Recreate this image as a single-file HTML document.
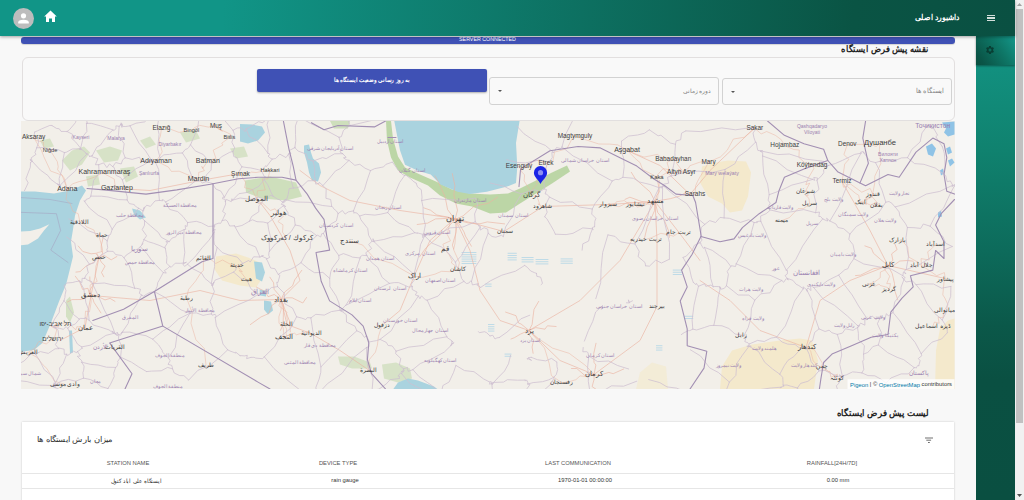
<!DOCTYPE html>
<html lang="fa">
<head>
<meta charset="utf-8">
<style>
*{box-sizing:border-box;margin:0;padding:0}
html,body{width:1024px;height:500px;overflow:hidden}
body{background:#f8f8f8;font-family:"Liberation Sans",sans-serif;position:relative;color:#333}
.abs{position:absolute}
#header{left:0;top:0;width:1015px;height:36px;background:linear-gradient(95deg,#119587 0%,#119587 22%,#0a5444 84%,#0a5042 100%);box-shadow:0 1px 3px rgba(0,0,0,.35);z-index:5}
#avatar{left:13px;top:7.5px;width:21px;height:21px;border-radius:50%;background:#bdbdbd;overflow:hidden}
#home{left:44px;top:10px;width:13px;height:13px}
#htitle{right:55px;top:13px;color:#fff;font-size:7.6px;font-weight:bold;transform:scaleX(.948);transform-origin:100% 50%;direction:rtl;white-space:nowrap}
#burger{left:986.5px;top:15px;width:8.5px;height:6px}
#burger i{display:block;height:1.2px;background:#d3dfdb;margin-bottom:1.2px}
#sb{left:976px;top:36px;width:39px;height:464px;background:linear-gradient(180deg,#13928a 0px,#12907f 30px,#10826f 114px,#0d6b5b 214px,#0b5849 290px,#0a5042 344px,#0a4f41 464px)}
#sbtop{left:0;top:0;width:39px;height:29px;background:linear-gradient(235deg,#14978a 0%,#0e7767 40%,#0a5547 85%,#09503f 100%);box-shadow:0 1px 2px rgba(0,0,0,.4)}
#scroll{left:1015px;top:0;width:9px;height:500px;background:#f1f1f1}
#thumb{left:1px;top:9px;width:7px;height:414px;background:#c1c1c1}
#bar{left:21px;top:37px;width:933.5px;height:6.5px;background:#3f51b5;border-radius:3px;box-shadow:0 1px 1px rgba(0,0,0,.15);z-index:3}
#bartxt{left:0;top:-1px;width:933px;text-align:center;color:#fff;font-size:5.6px;line-height:6px;letter-spacing:0;transform:scaleX(.95)}
#maptitle{right:95px;top:43.5px;font-size:8.6px;transform:scaleX(.924);transform-origin:100% 50%;font-weight:bold;color:#222;direction:rtl;white-space:nowrap}
#form{left:21.5px;top:56.5px;width:933px;height:64.5px;border:1px solid #e2dfdf;border-radius:6px;background:#f9f9f9}
#btn{left:257px;top:69px;width:230px;height:23px;background:#3f51b5;border-radius:2px;box-shadow:0 1px 2px rgba(0,0,0,.3);color:#fff;font-size:5.6px;font-weight:bold;text-align:center;line-height:23px;direction:rtl}
#btn span{display:inline-block;transform:scaleX(.935)}
.sel{height:27.5px;border:1px solid #d2d2d2;border-radius:3px;background:#f9f9f9}
.sel span{position:absolute;right:7px;top:9.5px;font-size:5.6px;transform-origin:100% 50%;color:#808080;direction:rtl;white-space:nowrap}
.sel b{position:absolute;left:8px;top:12px;width:0;height:0;border-left:2.5px solid transparent;border-right:2.5px solid transparent;border-top:2.5px solid #555}
#map{left:21px;top:120.5px;width:933.5px;height:268px;overflow:hidden;background:#f2efe9}
#listtitle{right:94.5px;top:408px;font-size:8.6px;transform:scaleX(.952);transform-origin:100% 50%;font-weight:bold;color:#222;direction:rtl;white-space:nowrap}
#card{left:22px;top:421.5px;width:932px;height:100px;background:#fff;box-shadow:0 0 2px rgba(0,0,0,.2)}
#ctitle{left:14.5px;top:13.5px;font-size:8px;transform:scaleX(1.053);transform-origin:0 50%;color:#333;direction:rtl;white-space:nowrap}
.th,.td{position:absolute;font-size:5.8px;color:#555;white-space:nowrap;transform:translateX(-50%)}
.td{color:#333}
.hl{position:absolute;left:0;width:932px;height:1px;background:#e6e6e6}
</style>
</head>
<body>
<div id="header" class="abs">
  <div id="avatar" class="abs">
    <svg width="21" height="21" viewBox="0 0 21 21"><circle cx="10.5" cy="7.8" r="2.6" fill="#fff"/><path d="M5.2 14.6 Q5.2 11.8 10.5 11.8 Q15.8 11.8 15.8 14.6 L15.8 15.6 L5.2 15.6 Z" fill="#fff"/></svg>
  </div>
  <svg id="home" class="abs" viewBox="0 0 13 13"><path d="M6.5 0.5 L12.8 6.5 L11 6.5 L11 12 L8 12 L8 8.5 L5 8.5 L5 12 L2 12 L2 6.5 L0.2 6.5 Z" fill="#fff"/></svg>
  <div id="htitle" class="abs">داشبورد اصلی</div>
  <div id="burger" class="abs"><i></i><i></i><i></i></div>
</div>

<div id="sb" class="abs">
  <div id="sbtop" class="abs">
    <svg class="abs" style="left:9px;top:9px" width="10" height="10" viewBox="0 0 24 24"><path fill="#083e33" d="M19.14 12.94c.04-.3.06-.61.06-.94 0-.32-.02-.64-.07-.94l2.03-1.58a.49.49 0 0 0 .12-.61l-1.92-3.32a.488.488 0 0 0-.59-.22l-2.39.96c-.5-.38-1.03-.7-1.62-.94l-.36-2.54a.484.484 0 0 0-.48-.41h-3.84c-.24 0-.43.17-.47.41l-.36 2.54c-.59.24-1.13.57-1.62.94l-2.39-.96c-.22-.08-.47 0-.59.22L2.74 8.87c-.12.21-.08.47.12.61l2.03 1.58c-.05.3-.09.63-.09.94s.02.64.07.94l-2.03 1.58a.49.49 0 0 0-.12.61l1.92 3.32c.12.22.37.29.59.22l2.39-.96c.5.38 1.03.7 1.62.94l.36 2.54c.05.24.24.41.48.41h3.84c.24 0 .44-.17.47-.41l.36-2.54c.59-.24 1.13-.56 1.62-.94l2.39.96c.22.08.47 0 .59-.22l1.92-3.32c.12-.22.07-.47-.12-.61l-2.01-1.58zM12 15.6c-1.98 0-3.6-1.62-3.6-3.6s1.62-3.6 3.6-3.6 3.6 1.62 3.6 3.6-1.62 3.6-3.6 3.6z"/></svg>
  </div>
</div>

<div id="scroll" class="abs">
  <svg class="abs" style="left:2px;top:3px" width="5" height="3"><path d="M0 3 L2.5 0 L5 3Z" fill="#a3a3a3"/></svg>
  <div id="thumb" class="abs"></div>
  <svg class="abs" style="left:2px;top:494px" width="5" height="3"><path d="M0 0 L2.5 3 L5 0Z" fill="#505050"/></svg>
</div>

<div id="bar" class="abs"><div id="bartxt" class="abs">SERVER CONNECTED</div></div>
<div id="maptitle" class="abs">نقشه پیش فرض ایستگاه</div>

<div id="form" class="abs"></div>
<div id="btn" class="abs"><span>به روز رسانی وضعیت ایستگاه ها</span></div>
<div class="sel abs" style="left:488.8px;top:77px;width:230.5px"><span>دوره زمانی</span><b></b></div>
<div class="sel abs" style="left:722px;top:77.5px;width:230px"><span style="font-size:6.6px;top:8.8px;transform:scaleX(.93)">ایستگاه ها</span><b></b></div>

<div id="map" class="abs">
<svg width="934" height="268" viewBox="0 0 934 268" style="position:absolute;left:0;top:0" font-family="Liberation Sans, sans-serif">
<rect width="934" height="268" fill="#f2efe9"/>
<polygon points="195.0,135.5 215.0,132.5 227.0,136.5 239.0,141.5 241.0,157.5 235.0,166.5 219.0,164.5 201.0,159.5 193.0,147.5" fill="#f4e9cc" />
<polygon points="681.0,45.5 695.0,41.5 707.0,39.5 725.0,40.5 730.0,51.5 727.0,75.5 721.0,89.5 709.0,91.5 701.0,82.5 687.0,75.5 679.0,61.5" fill="#f4e9cc" />
<polygon points="699.0,268.0 701.0,245.5 711.0,229.5 731.0,223.5 759.0,219.5 779.0,217.5 791.0,219.5 797.0,239.5 793.0,268.0" fill="#f4e9cc" />
<polygon points="914.0,268.0 915.0,229.5 919.0,207.5 927.0,199.5 933.5,197.5 933.5,268.0" fill="#f4e9cc" />
<polygon points="615.0,268.0 619.0,251.5 631.0,241.5 645.0,245.5 647.0,268.0" fill="#f4e9cc" opacity="0.6"/>
<polygon points="365.0,0.0 366.0,19.5 370.0,36.5 377.0,49.5 389.0,56.5 407.0,64.5 419.0,74.5 435.0,82.5 451.0,85.5 469.0,92.5 485.0,91.5 499.0,82.5 515.0,72.5 531.0,62.5 549.0,50.5 546.0,44.5 531.0,51.5 515.0,59.5 499.0,67.5 487.0,72.5 469.0,73.5 449.0,72.5 431.0,68.5 415.0,60.5 399.0,53.5 384.0,46.5 377.0,35.5 372.0,17.5 370.0,0.0" fill="#b6d39e" opacity="0.9"/>
<polygon points="41.0,39.5 51.0,29.5 63.0,25.5 69.0,31.5 61.0,43.5 49.0,49.5" fill="#b6d39e" opacity="0.45"/>
<polygon points="75.0,29.5 89.0,25.5 101.0,29.5 97.0,39.5 83.0,41.5" fill="#b6d39e" opacity="0.45"/>
<polygon points="99.0,47.5 113.0,45.5 117.0,55.5 105.0,61.5" fill="#b6d39e" opacity="0.45"/>
<polygon points="65.0,55.5 77.0,53.5 79.0,63.5 67.0,65.5" fill="#b6d39e" opacity="0.45"/>
<polygon points="19.0,19.5 29.0,17.5 33.0,25.5 23.0,27.5" fill="#b6d39e" opacity="0.45"/>
<polygon points="119.0,19.5 129.0,15.5 135.0,23.5 125.0,27.5" fill="#b6d39e" opacity="0.45"/>
<polygon points="159.0,11.5 175.0,9.5 179.0,17.5 165.0,21.5" fill="#b6d39e" opacity="0.45"/>
<polygon points="209.0,27.5 223.0,25.5 227.0,35.5 215.0,37.5" fill="#b6d39e" opacity="0.45"/>
<polygon points="224.0,59.5 249.0,55.5 275.0,61.5 281.0,75.5 265.0,79.5 241.0,77.5 225.0,71.5" fill="#b6d39e" opacity="0.6"/>
<polygon points="317.0,235.5 333.0,235.5 349.0,241.5 351.0,247.5 331.0,247.5 319.0,243.5" fill="#b6d39e" opacity="0.45"/>
<polygon points="361.0,243.5 375.0,241.5 389.0,247.5 391.0,257.5 377.0,261.5 363.0,257.5" fill="#b6d39e" opacity="0.45"/>
<polygon points="45.0,179.5 49.0,175.5 53.0,191.5 49.0,201.5 45.0,195.5" fill="#b6d39e" opacity="0.5"/>
<polygon points="309.0,0.0 329.0,0.0 327.0,7.5 313.0,7.5" fill="#b6d39e" opacity="0.6"/>
<polygon points="-2.0,70.5 14.0,70.5 33.0,72.5 49.0,69.5 61.0,64.5 65.0,69.5 59.0,79.5 54.0,94.5 52.0,108.5 50.0,120.5 52.0,135.5 49.4,146.3 45.2,163.1 38.2,179.9 29.8,202.3 21.4,221.9 13.0,228.9 -2.0,230.9" fill="#aad3df" />
<polygon points="-2.0,110.5 9.0,110.0 19.0,107.5 28.4,103.3 23.0,109.5 17.0,117.5 7.0,123.5 -2.0,124.5" fill="#f2efe9" />
<polyline points="-1.0,91.3 35.4,92.7 39.6,109.5 29.8,129.1 47.0,141.5" fill="none" stroke="#a28fb3" stroke-width="0.8" stroke-linejoin="round" stroke-linecap="round" opacity="0.5"/>
<polyline points="-1.0,76.5 29.0,78.5 51.0,82.5" fill="none" stroke="#a28fb3" stroke-width="0.8" stroke-linejoin="round" stroke-linecap="round" opacity="0.45"/>
<polygon points="373.0,-1.5 375.6,12.1 379.0,29.2 384.0,43.8 397.5,49.9 409.7,53.5 419.5,63.4 436.6,70.7 448.8,73.1 465.8,70.7 485.3,65.8 495.0,62.1 496.3,46.3 495.0,21.9 498.8,-1.5" fill="#aad3df" />
<polygon points="219.0,3.1 231.0,3.5 241.0,5.5 244.0,11.5 237.0,19.5 227.0,22.5 219.0,20.5" fill="#aad3df" />
<polygon points="283.0,24.5 288.0,23.5 290.0,31.5 292.0,37.5 298.0,42.5 300.0,51.5 297.0,60.5 291.0,59.5 288.0,51.5 286.0,41.5 283.0,31.5" fill="#aad3df" />
<polygon points="921.0,1.5 933.5,0.5 933.5,13.5 927.0,15.5 923.0,11.5 925.0,7.5" fill="#8fc3e6" />
<polygon points="905.0,25.5 911.0,22.5 915.0,27.5 912.0,35.5 907.0,33.5" fill="#8fc3e6" />
<polygon points="925.0,27.5 929.0,25.5 931.0,31.5 927.0,33.5" fill="#8fc3e6" />
<polygon points="927.0,39.5 931.0,37.5 933.5,41.5 929.0,45.5" fill="#8fc3e6" />
<polygon points="917.0,91.5 920.0,89.5 921.0,95.5 917.0,96.5" fill="#8fc3e6" />
<polygon points="919.0,49.5 922.0,47.5 923.0,52.5 920.0,54.5" fill="#8fc3e6" />
<polygon points="372.0,268.5 377.0,261.5 387.0,257.5 397.0,259.5 405.0,262.5 413.0,265.5 417.0,268.5" fill="#aad3df" />
<polygon points="233.0,140.5 241.0,141.5 244.0,151.5 241.0,160.5 235.0,157.5" fill="#aad3df" />
<polygon points="243.0,179.5 250.0,180.5 252.0,189.5 247.0,193.5 243.0,188.5" fill="#aad3df" />
<polygon points="238.6,168.5 245.0,169.5 245.0,175.5 239.0,174.5" fill="#aad3df" />
<polygon points="111.0,87.5 119.0,89.5 125.0,96.5 119.0,98.5 113.0,93.5" fill="#aad3df" />
<polygon points="48.0,209.5 51.0,209.5 52.0,231.5 49.0,232.5" fill="#aad3df" />
<polyline points="487.0,132.3 495.4,132.3" fill="none" stroke="#a9d2e6" stroke-width="0.7" stroke-linejoin="round" stroke-linecap="round" />
<polyline points="487.0,134.5 495.4,134.5" fill="none" stroke="#a9d2e6" stroke-width="0.7" stroke-linejoin="round" stroke-linecap="round" />
<polyline points="487.0,136.7 495.4,136.7" fill="none" stroke="#a9d2e6" stroke-width="0.7" stroke-linejoin="round" stroke-linecap="round" />
<polyline points="487.0,138.9 495.4,138.9" fill="none" stroke="#a9d2e6" stroke-width="0.7" stroke-linejoin="round" stroke-linecap="round" />
<polyline points="501.0,136.5 512.2,136.5" fill="none" stroke="#a9d2e6" stroke-width="0.7" stroke-linejoin="round" stroke-linecap="round" />
<polyline points="501.0,138.7 512.2,138.7" fill="none" stroke="#a9d2e6" stroke-width="0.7" stroke-linejoin="round" stroke-linecap="round" />
<polyline points="501.0,140.9 512.2,140.9" fill="none" stroke="#a9d2e6" stroke-width="0.7" stroke-linejoin="round" stroke-linecap="round" />
<polyline points="540.0,137.9 551.4,137.9" fill="none" stroke="#a9d2e6" stroke-width="0.7" stroke-linejoin="round" stroke-linecap="round" />
<polyline points="540.0,140.1 551.4,140.1" fill="none" stroke="#a9d2e6" stroke-width="0.7" stroke-linejoin="round" stroke-linecap="round" />
<polyline points="540.0,142.3 551.4,142.3" fill="none" stroke="#a9d2e6" stroke-width="0.7" stroke-linejoin="round" stroke-linecap="round" />
<polyline points="464.6,163.1 470.2,163.1" fill="none" stroke="#a9d2e6" stroke-width="0.7" stroke-linejoin="round" stroke-linecap="round" />
<polyline points="464.6,165.3 470.2,165.3" fill="none" stroke="#a9d2e6" stroke-width="0.7" stroke-linejoin="round" stroke-linecap="round" />
<polyline points="467.4,203.5 473.0,203.5" fill="none" stroke="#a9d2e6" stroke-width="0.7" stroke-linejoin="round" stroke-linecap="round" />
<polyline points="467.4,205.7 473.0,205.7" fill="none" stroke="#a9d2e6" stroke-width="0.7" stroke-linejoin="round" stroke-linecap="round" />
<polyline points="467.4,207.9 473.0,207.9" fill="none" stroke="#a9d2e6" stroke-width="0.7" stroke-linejoin="round" stroke-linecap="round" />
<polyline points="467.4,210.1 473.0,210.1" fill="none" stroke="#a9d2e6" stroke-width="0.7" stroke-linejoin="round" stroke-linecap="round" />
<polyline points="652.2,149.1 660.6,149.1" fill="none" stroke="#a9d2e6" stroke-width="0.7" stroke-linejoin="round" stroke-linecap="round" />
<polyline points="652.2,151.3 660.6,151.3" fill="none" stroke="#a9d2e6" stroke-width="0.7" stroke-linejoin="round" stroke-linecap="round" />
<polyline points="652.2,153.5 660.6,153.5" fill="none" stroke="#a9d2e6" stroke-width="0.7" stroke-linejoin="round" stroke-linecap="round" />
<polyline points="663.4,195.3 671.8,195.3" fill="none" stroke="#a9d2e6" stroke-width="0.7" stroke-linejoin="round" stroke-linecap="round" />
<polyline points="663.4,197.5 671.8,197.5" fill="none" stroke="#a9d2e6" stroke-width="0.7" stroke-linejoin="round" stroke-linecap="round" />
<polyline points="635.4,224.7 641.0,224.7" fill="none" stroke="#a9d2e6" stroke-width="0.7" stroke-linejoin="round" stroke-linecap="round" />
<polyline points="635.4,226.9 641.0,226.9" fill="none" stroke="#a9d2e6" stroke-width="0.7" stroke-linejoin="round" stroke-linecap="round" />
<polyline points="635.4,229.1 641.0,229.1" fill="none" stroke="#a9d2e6" stroke-width="0.7" stroke-linejoin="round" stroke-linecap="round" />
<polyline points="484.0,233.1 490.0,233.1" fill="none" stroke="#a9d2e6" stroke-width="0.7" stroke-linejoin="round" stroke-linecap="round" />
<polyline points="484.0,235.3 490.0,235.3" fill="none" stroke="#a9d2e6" stroke-width="0.7" stroke-linejoin="round" stroke-linecap="round" />
<polyline points="441.0,131.5 455.0,131.5" fill="none" stroke="#a9d2e6" stroke-width="0.7" stroke-linejoin="round" stroke-linecap="round" />
<polyline points="441.0,133.7 455.0,133.7" fill="none" stroke="#a9d2e6" stroke-width="0.7" stroke-linejoin="round" stroke-linecap="round" />
<polyline points="441.0,135.9 455.0,135.9" fill="none" stroke="#a9d2e6" stroke-width="0.7" stroke-linejoin="round" stroke-linecap="round" />
<polyline points="441.0,138.1 455.0,138.1" fill="none" stroke="#a9d2e6" stroke-width="0.7" stroke-linejoin="round" stroke-linecap="round" />
<polyline points="441.0,140.3 455.0,140.3" fill="none" stroke="#a9d2e6" stroke-width="0.7" stroke-linejoin="round" stroke-linecap="round" />
<polyline points="441.0,142.5 455.0,142.5" fill="none" stroke="#a9d2e6" stroke-width="0.7" stroke-linejoin="round" stroke-linecap="round" />
<polyline points="515.0,138.5 527.0,138.5" fill="none" stroke="#a9d2e6" stroke-width="0.7" stroke-linejoin="round" stroke-linecap="round" />
<polyline points="515.0,140.7 527.0,140.7" fill="none" stroke="#a9d2e6" stroke-width="0.7" stroke-linejoin="round" stroke-linecap="round" />
<polyline points="515.0,142.9 527.0,142.9" fill="none" stroke="#a9d2e6" stroke-width="0.7" stroke-linejoin="round" stroke-linecap="round" />
<polyline points="434.0,97.5 409.0,119.5 393.0,155.5 379.0,189.5 361.0,204.5" fill="none" stroke="#eab4a2" stroke-width="0.8" stroke-linejoin="round" stroke-linecap="round" opacity="0.8"/>
<polyline points="434.0,97.5 449.0,129.5 459.0,169.5 479.0,199.5 508.0,209.5 539.0,239.5 573.0,253.5" fill="none" stroke="#eab4a2" stroke-width="0.8" stroke-linejoin="round" stroke-linecap="round" opacity="0.8"/>
<polyline points="434.0,97.5 483.0,110.5 522.0,85.5 587.0,83.5 634.0,80.5 658.0,111.5 679.0,139.5" fill="none" stroke="#eab4a2" stroke-width="0.8" stroke-linejoin="round" stroke-linecap="round" opacity="0.8"/>
<polyline points="434.0,97.5 379.0,89.5 329.0,79.5 299.0,64.5 279.0,49.5" fill="none" stroke="#eab4a2" stroke-width="0.8" stroke-linejoin="round" stroke-linecap="round" opacity="0.8"/>
<polyline points="260.0,178.5 279.0,159.5 269.0,129.5 249.0,94.5 236.0,77.5" fill="none" stroke="#eab4a2" stroke-width="0.8" stroke-linejoin="round" stroke-linecap="round" opacity="0.8"/>
<polyline points="260.0,178.5 266.0,203.5 290.0,212.5 319.0,229.5 347.0,248.5" fill="none" stroke="#eab4a2" stroke-width="0.8" stroke-linejoin="round" stroke-linecap="round" opacity="0.8"/>
<polyline points="78.0,136.5 70.0,174.5 64.0,206.5 39.0,219.5" fill="none" stroke="#eab4a2" stroke-width="0.8" stroke-linejoin="round" stroke-linecap="round" opacity="0.8"/>
<polyline points="96.0,67.5 129.0,69.5 179.0,59.5 219.0,52.5" fill="none" stroke="#eab4a2" stroke-width="0.8" stroke-linejoin="round" stroke-linecap="round" opacity="0.8"/>
<polyline points="634.0,80.5 636.0,119.5 636.0,185.5 619.0,219.5 573.0,253.5" fill="none" stroke="#eab4a2" stroke-width="0.8" stroke-linejoin="round" stroke-linecap="round" opacity="0.8"/>
<polyline points="785.0,226.5 799.0,179.5 829.0,159.5 867.0,144.5 924.0,157.5" fill="none" stroke="#eab4a2" stroke-width="0.8" stroke-linejoin="round" stroke-linecap="round" opacity="0.8"/>
<polyline points="785.0,226.5 739.0,209.5 709.0,179.5 679.0,159.5" fill="none" stroke="#eab4a2" stroke-width="0.8" stroke-linejoin="round" stroke-linecap="round" opacity="0.8"/>
<polyline points="867.0,144.5 849.0,109.5 821.0,60.5" fill="none" stroke="#eab4a2" stroke-width="0.8" stroke-linejoin="round" stroke-linecap="round" opacity="0.8"/>
<polyline points="260.0,178.5 219.0,179.5 179.0,169.5 129.0,179.5 70.0,174.5" fill="none" stroke="#eab4a2" stroke-width="0.8" stroke-linejoin="round" stroke-linecap="round" opacity="0.8"/>
<polyline points="508.0,209.5 559.0,179.5 599.0,139.5 634.0,80.5" fill="none" stroke="#eab4a2" stroke-width="0.8" stroke-linejoin="round" stroke-linecap="round" opacity="0.8"/>
<polyline points="669.0,73.5 689.0,49.5 733.0,7.5" fill="none" stroke="#eab4a2" stroke-width="0.8" stroke-linejoin="round" stroke-linecap="round" opacity="0.8"/>
<polyline points="606.0,29.5 639.0,44.5 669.0,73.5" fill="none" stroke="#eab4a2" stroke-width="0.8" stroke-linejoin="round" stroke-linecap="round" opacity="0.8"/>
<polyline points="434.0,98.5 447.5,102.0 458.9,102.8 466.3,100.9 483.6,102.9" fill="none" stroke="#eab4a2" stroke-width="0.8" stroke-linejoin="round" stroke-linecap="round" opacity="0.8"/>
<polyline points="434.0,98.5 438.3,103.0 443.1,111.1 444.4,115.0 450.4,125.2" fill="none" stroke="#eab4a2" stroke-width="0.8" stroke-linejoin="round" stroke-linecap="round" opacity="0.8"/>
<polyline points="434.0,98.5 435.9,104.2 434.9,111.9 431.4,124.2 432.7,128.1" fill="none" stroke="#eab4a2" stroke-width="0.8" stroke-linejoin="round" stroke-linecap="round" opacity="0.8"/>
<polyline points="434.0,98.5 423.6,110.0 415.9,116.9 404.7,127.2 398.4,136.0" fill="none" stroke="#eab4a2" stroke-width="0.8" stroke-linejoin="round" stroke-linecap="round" opacity="0.8"/>
<polyline points="434.0,98.5 424.5,97.5 414.5,97.9 406.7,102.1 396.2,103.5" fill="none" stroke="#eab4a2" stroke-width="0.8" stroke-linejoin="round" stroke-linecap="round" opacity="0.8"/>
<polyline points="434.0,98.5 427.3,96.2 415.8,94.0 409.5,89.2 402.6,86.8" fill="none" stroke="#eab4a2" stroke-width="0.8" stroke-linejoin="round" stroke-linecap="round" opacity="0.8"/>
<polyline points="434.0,98.5 426.6,88.6 424.1,75.8 417.4,61.0 413.9,54.9" fill="none" stroke="#eab4a2" stroke-width="0.8" stroke-linejoin="round" stroke-linecap="round" opacity="0.8"/>
<polyline points="434.0,98.5 436.5,89.3 432.9,73.9 433.9,64.6 431.3,52.6" fill="none" stroke="#eab4a2" stroke-width="0.8" stroke-linejoin="round" stroke-linecap="round" opacity="0.8"/>
<polyline points="434.0,98.5 442.1,94.9 453.3,85.1 467.3,82.3 476.6,76.1" fill="none" stroke="#eab4a2" stroke-width="0.8" stroke-linejoin="round" stroke-linecap="round" opacity="0.8"/>
<polyline points="260.0,178.5 265.8,176.8 271.2,176.8 281.8,182.0 285.5,176.5" fill="none" stroke="#eab4a2" stroke-width="0.8" stroke-linejoin="round" stroke-linecap="round" opacity="0.8"/>
<polyline points="260.0,178.5 262.4,184.4 266.6,195.4 268.7,200.5 269.3,210.9" fill="none" stroke="#eab4a2" stroke-width="0.8" stroke-linejoin="round" stroke-linecap="round" opacity="0.8"/>
<polyline points="260.0,178.5 262.5,184.1 262.3,196.9 262.1,203.7 259.4,209.4" fill="none" stroke="#eab4a2" stroke-width="0.8" stroke-linejoin="round" stroke-linecap="round" opacity="0.8"/>
<polyline points="260.0,178.5 251.1,184.2 247.7,192.5 239.9,196.0 229.3,203.6" fill="none" stroke="#eab4a2" stroke-width="0.8" stroke-linejoin="round" stroke-linecap="round" opacity="0.8"/>
<polyline points="260.0,178.5 253.3,173.5 247.0,175.7 244.3,170.7 235.4,166.1" fill="none" stroke="#eab4a2" stroke-width="0.8" stroke-linejoin="round" stroke-linecap="round" opacity="0.8"/>
<polyline points="260.0,178.5 258.7,174.8 253.1,168.3 252.6,161.8 248.9,156.2" fill="none" stroke="#eab4a2" stroke-width="0.8" stroke-linejoin="round" stroke-linecap="round" opacity="0.8"/>
<polyline points="260.0,178.5 263.7,171.0 271.6,164.8 273.7,158.9 280.8,149.3" fill="none" stroke="#eab4a2" stroke-width="0.8" stroke-linejoin="round" stroke-linecap="round" opacity="0.8"/>
<polyline points="634.0,80.5 640.3,79.2 649.3,77.7 658.2,75.2 664.2,72.0" fill="none" stroke="#eab4a2" stroke-width="0.8" stroke-linejoin="round" stroke-linecap="round" opacity="0.8"/>
<polyline points="634.0,80.5 636.7,91.5 643.4,99.5 647.6,110.0 648.4,116.3" fill="none" stroke="#eab4a2" stroke-width="0.8" stroke-linejoin="round" stroke-linecap="round" opacity="0.8"/>
<polyline points="634.0,80.5 633.6,89.5 629.0,100.1 626.2,106.0 623.4,117.6" fill="none" stroke="#eab4a2" stroke-width="0.8" stroke-linejoin="round" stroke-linecap="round" opacity="0.8"/>
<polyline points="634.0,80.5 627.3,81.4 620.0,80.3 608.9,76.2 604.0,78.4" fill="none" stroke="#eab4a2" stroke-width="0.8" stroke-linejoin="round" stroke-linecap="round" opacity="0.8"/>
<polyline points="634.0,80.5 629.1,70.9 622.5,65.2 614.4,57.9 610.3,51.3" fill="none" stroke="#eab4a2" stroke-width="0.8" stroke-linejoin="round" stroke-linecap="round" opacity="0.8"/>
<polyline points="634.0,80.5 635.6,74.7 638.3,70.8 637.9,67.5 638.2,59.4" fill="none" stroke="#eab4a2" stroke-width="0.8" stroke-linejoin="round" stroke-linecap="round" opacity="0.8"/>
<polyline points="867.0,144.5 871.0,145.6 878.8,140.0 886.5,139.5 892.4,140.2" fill="none" stroke="#eab4a2" stroke-width="0.8" stroke-linejoin="round" stroke-linecap="round" opacity="0.8"/>
<polyline points="867.0,144.5 871.2,152.5 873.5,162.4 873.2,167.9 876.8,178.9" fill="none" stroke="#eab4a2" stroke-width="0.8" stroke-linejoin="round" stroke-linecap="round" opacity="0.8"/>
<polyline points="867.0,144.5 859.3,146.7 852.7,147.6 839.7,154.1 834.5,154.6" fill="none" stroke="#eab4a2" stroke-width="0.8" stroke-linejoin="round" stroke-linecap="round" opacity="0.8"/>
<polyline points="867.0,144.5 859.8,138.6 852.4,132.2 850.4,127.2 843.9,124.9" fill="none" stroke="#eab4a2" stroke-width="0.8" stroke-linejoin="round" stroke-linecap="round" opacity="0.8"/>
<polyline points="867.0,144.5 871.9,139.2 870.6,132.9 876.1,128.6 874.0,123.2" fill="none" stroke="#eab4a2" stroke-width="0.8" stroke-linejoin="round" stroke-linecap="round" opacity="0.8"/>
<polyline points="508.0,209.5 514.8,206.6 523.9,208.2 526.4,204.8 535.1,205.5" fill="none" stroke="#eab4a2" stroke-width="0.8" stroke-linejoin="round" stroke-linecap="round" opacity="0.8"/>
<polyline points="508.0,209.5 507.4,213.0 512.6,219.4 511.1,226.0 512.1,232.3" fill="none" stroke="#eab4a2" stroke-width="0.8" stroke-linejoin="round" stroke-linecap="round" opacity="0.8"/>
<polyline points="508.0,209.5 505.1,210.6 499.3,213.2 493.4,216.7 490.0,218.0" fill="none" stroke="#eab4a2" stroke-width="0.8" stroke-linejoin="round" stroke-linecap="round" opacity="0.8"/>
<polyline points="508.0,209.5 500.1,203.0 497.5,202.0 495.0,194.7 484.6,191.1" fill="none" stroke="#eab4a2" stroke-width="0.8" stroke-linejoin="round" stroke-linecap="round" opacity="0.8"/>
<polyline points="508.0,209.5 511.1,203.5 511.7,198.3 513.0,188.4 517.7,180.4" fill="none" stroke="#eab4a2" stroke-width="0.8" stroke-linejoin="round" stroke-linecap="round" opacity="0.8"/>
<polyline points="573.0,253.5 577.2,254.7 587.8,251.4 592.2,252.7 602.7,248.0" fill="none" stroke="#eab4a2" stroke-width="0.8" stroke-linejoin="round" stroke-linecap="round" opacity="0.8"/>
<polyline points="573.0,253.5 573.1,258.3 571.1,265.6 575.1,268.3 571.7,278.7" fill="none" stroke="#eab4a2" stroke-width="0.8" stroke-linejoin="round" stroke-linecap="round" opacity="0.8"/>
<polyline points="573.0,253.5 564.0,253.7 563.6,254.3 555.8,247.5 550.5,247.5" fill="none" stroke="#eab4a2" stroke-width="0.8" stroke-linejoin="round" stroke-linecap="round" opacity="0.8"/>
<polyline points="573.0,253.5 574.9,244.0 573.0,241.4 572.8,232.3 575.0,222.3" fill="none" stroke="#eab4a2" stroke-width="0.8" stroke-linejoin="round" stroke-linecap="round" opacity="0.8"/>
<polyline points="78.0,136.5 79.6,136.1 83.2,134.4 90.2,138.8 95.9,135.5" fill="none" stroke="#eab4a2" stroke-width="0.8" stroke-linejoin="round" stroke-linecap="round" opacity="0.8"/>
<polyline points="78.0,136.5 80.3,141.1 84.1,145.0 80.5,151.5 82.8,155.8" fill="none" stroke="#eab4a2" stroke-width="0.8" stroke-linejoin="round" stroke-linecap="round" opacity="0.8"/>
<polyline points="78.0,136.5 72.5,141.4 65.0,145.2 59.1,150.6 54.9,151.1" fill="none" stroke="#eab4a2" stroke-width="0.8" stroke-linejoin="round" stroke-linecap="round" opacity="0.8"/>
<polyline points="78.0,136.5 74.8,132.3 70.1,132.8 61.8,130.5 57.2,125.0" fill="none" stroke="#eab4a2" stroke-width="0.8" stroke-linejoin="round" stroke-linecap="round" opacity="0.8"/>
<polyline points="78.0,136.5 81.9,132.1 80.3,129.6 80.2,124.9 82.0,117.1" fill="none" stroke="#eab4a2" stroke-width="0.8" stroke-linejoin="round" stroke-linecap="round" opacity="0.8"/>
<polyline points="69.0,174.5 73.4,173.9 84.0,178.9 89.1,177.4 94.0,180.4" fill="none" stroke="#eab4a2" stroke-width="0.8" stroke-linejoin="round" stroke-linecap="round" opacity="0.8"/>
<polyline points="69.0,174.5 72.0,178.0 72.9,181.2 77.8,188.7 79.9,191.9" fill="none" stroke="#eab4a2" stroke-width="0.8" stroke-linejoin="round" stroke-linecap="round" opacity="0.8"/>
<polyline points="69.0,174.5 64.4,177.2 60.0,178.5 51.0,178.6 46.4,181.0" fill="none" stroke="#eab4a2" stroke-width="0.8" stroke-linejoin="round" stroke-linecap="round" opacity="0.8"/>
<polyline points="69.0,174.5 66.9,167.3 61.6,168.4 58.9,161.4 54.3,155.2" fill="none" stroke="#eab4a2" stroke-width="0.8" stroke-linejoin="round" stroke-linecap="round" opacity="0.8"/>
<polyline points="69.0,174.5 68.7,169.5 72.2,163.8 68.9,160.2 68.8,155.9" fill="none" stroke="#eab4a2" stroke-width="0.8" stroke-linejoin="round" stroke-linecap="round" opacity="0.8"/>
<polyline points="12.6,16.5 15.5,19.5 22.6,21.3 22.5,24.8 23.2,26.7 29.0,29.1" fill="none" stroke="#eab4a2" stroke-width="0.7" stroke-linejoin="round" stroke-linecap="round" opacity="0.7"/>
<polyline points="12.6,16.5 20.4,29.2 22.8,35.6 29.5,50.0 41.1,54.2 46.3,68.2" fill="none" stroke="#eab4a2" stroke-width="0.7" stroke-linejoin="round" stroke-linecap="round" opacity="0.7"/>
<polyline points="29.0,29.1 36.3,40.6 37.2,45.7 36.6,48.7 43.1,56.9 46.3,68.2" fill="none" stroke="#eab4a2" stroke-width="0.7" stroke-linejoin="round" stroke-linecap="round" opacity="0.7"/>
<polyline points="140.5,7.3 144.0,5.7 148.7,7.9 158.0,11.4 164.6,10.2 170.4,9.5" fill="none" stroke="#eab4a2" stroke-width="0.7" stroke-linejoin="round" stroke-linecap="round" opacity="0.7"/>
<polyline points="140.5,7.3 139.4,15.1 138.0,18.6 141.2,30.8 138.8,35.0 135.0,39.9" fill="none" stroke="#eab4a2" stroke-width="0.7" stroke-linejoin="round" stroke-linecap="round" opacity="0.7"/>
<polyline points="170.4,9.5 173.8,6.5 178.6,4.3 187.3,6.1 192.9,5.1 195.0,5.1" fill="none" stroke="#eab4a2" stroke-width="0.7" stroke-linejoin="round" stroke-linecap="round" opacity="0.7"/>
<polyline points="195.0,5.1 201.4,10.2 196.4,7.3 206.4,11.7 209.6,13.4 208.5,16.5" fill="none" stroke="#eab4a2" stroke-width="0.7" stroke-linejoin="round" stroke-linecap="round" opacity="0.7"/>
<polyline points="208.5,16.5 200.7,22.2 202.0,24.0 192.2,29.2 194.9,37.3 186.8,39.9" fill="none" stroke="#eab4a2" stroke-width="0.7" stroke-linejoin="round" stroke-linecap="round" opacity="0.7"/>
<polyline points="83.4,50.8 82.8,52.1 85.2,53.8 93.3,58.1 93.9,63.5 95.9,67.2" fill="none" stroke="#eab4a2" stroke-width="0.7" stroke-linejoin="round" stroke-linecap="round" opacity="0.7"/>
<polyline points="83.4,50.8 73.5,56.1 65.6,58.9 58.1,60.6 51.4,62.9 46.3,68.2" fill="none" stroke="#eab4a2" stroke-width="0.7" stroke-linejoin="round" stroke-linecap="round" opacity="0.7"/>
<polyline points="135.0,39.9 147.3,46.0 150.4,50.4 158.2,50.2 171.8,55.9 177.5,58.5" fill="none" stroke="#eab4a2" stroke-width="0.7" stroke-linejoin="round" stroke-linecap="round" opacity="0.7"/>
<polyline points="186.8,39.9 181.7,47.5 180.8,45.4 183.4,49.7 177.7,51.4 177.5,58.5" fill="none" stroke="#eab4a2" stroke-width="0.7" stroke-linejoin="round" stroke-linecap="round" opacity="0.7"/>
<polyline points="249.0,49.2 239.8,50.6 235.1,51.5 230.2,51.1 229.0,52.1 219.4,53.0" fill="none" stroke="#eab4a2" stroke-width="0.7" stroke-linejoin="round" stroke-linecap="round" opacity="0.7"/>
<polyline points="249.0,49.2 246.9,57.9 241.1,58.0 244.3,69.0 236.4,69.8 235.7,78.0" fill="none" stroke="#eab4a2" stroke-width="0.7" stroke-linejoin="round" stroke-linecap="round" opacity="0.7"/>
<polyline points="219.4,53.0 224.6,61.5 223.5,66.6 232.2,68.8 231.8,69.8 235.7,78.0" fill="none" stroke="#eab4a2" stroke-width="0.7" stroke-linejoin="round" stroke-linecap="round" opacity="0.7"/>
<polyline points="46.3,68.2 45.1,78.4 49.2,82.9 51.9,90.4 57.2,92.7 58.9,100.9" fill="none" stroke="#eab4a2" stroke-width="0.7" stroke-linejoin="round" stroke-linecap="round" opacity="0.7"/>
<polyline points="235.7,78.0 237.5,82.7 241.0,81.6 249.3,89.5 254.1,87.8 257.5,92.5" fill="none" stroke="#eab4a2" stroke-width="0.7" stroke-linejoin="round" stroke-linecap="round" opacity="0.7"/>
<polyline points="257.5,92.5 262.5,95.1 256.9,100.5 262.0,103.8 261.5,111.2 265.7,117.2" fill="none" stroke="#eab4a2" stroke-width="0.7" stroke-linejoin="round" stroke-linecap="round" opacity="0.7"/>
<polyline points="328.0,119.9 341.7,124.0 353.1,137.2 371.2,142.4 382.0,148.9 393.6,155.3" fill="none" stroke="#eab4a2" stroke-width="0.7" stroke-linejoin="round" stroke-linecap="round" opacity="0.7"/>
<polyline points="434.4,98.2 429.3,100.5 426.2,113.4 429.5,119.8 421.9,123.2 423.5,128.1" fill="none" stroke="#eab4a2" stroke-width="0.7" stroke-linejoin="round" stroke-linecap="round" opacity="0.7"/>
<polyline points="434.4,98.2 434.8,110.1 434.0,122.3 432.6,128.7 438.4,141.6 437.0,148.5" fill="none" stroke="#eab4a2" stroke-width="0.7" stroke-linejoin="round" stroke-linecap="round" opacity="0.7"/>
<polyline points="423.5,128.1 428.1,133.8 431.2,139.6 430.4,141.8 437.5,147.4 437.0,148.5" fill="none" stroke="#eab4a2" stroke-width="0.7" stroke-linejoin="round" stroke-linecap="round" opacity="0.7"/>
<polyline points="393.6,155.3 401.6,156.3 413.9,153.2 420.6,150.3 429.0,150.7 437.0,148.5" fill="none" stroke="#eab4a2" stroke-width="0.7" stroke-linejoin="round" stroke-linecap="round" opacity="0.7"/>
<polyline points="260.0,178.7 257.8,184.7 266.2,191.5 265.2,192.5 266.4,198.9 265.7,203.2" fill="none" stroke="#eab4a2" stroke-width="0.7" stroke-linejoin="round" stroke-linecap="round" opacity="0.7"/>
<polyline points="260.0,178.7 260.1,188.9 257.9,195.7 258.0,202.1 262.2,206.6 263.0,216.3" fill="none" stroke="#eab4a2" stroke-width="0.7" stroke-linejoin="round" stroke-linecap="round" opacity="0.7"/>
<polyline points="69.7,174.4 70.2,180.9 68.5,190.8 64.5,190.1 63.8,201.9 64.3,207.0" fill="none" stroke="#eab4a2" stroke-width="0.7" stroke-linejoin="round" stroke-linecap="round" opacity="0.7"/>
<polyline points="69.7,174.4 69.0,164.1 76.2,160.4 74.2,154.7 74.9,145.2 77.9,136.3" fill="none" stroke="#eab4a2" stroke-width="0.7" stroke-linejoin="round" stroke-linecap="round" opacity="0.7"/>
<polyline points="64.3,207.0 55.9,205.7 54.8,208.8 49.4,203.8 41.0,202.5 34.4,203.2" fill="none" stroke="#eab4a2" stroke-width="0.7" stroke-linejoin="round" stroke-linecap="round" opacity="0.7"/>
<polyline points="77.9,136.3 75.5,131.9 81.7,130.4 81.2,126.8 78.3,116.2 80.6,114.5" fill="none" stroke="#eab4a2" stroke-width="0.7" stroke-linejoin="round" stroke-linecap="round" opacity="0.7"/>
<polyline points="58.9,100.9 62.8,101.8 65.3,105.7 72.9,109.0 74.8,114.5 80.6,114.5" fill="none" stroke="#eab4a2" stroke-width="0.7" stroke-linejoin="round" stroke-linecap="round" opacity="0.7"/>
<polyline points="34.4,203.2 37.7,205.8 29.9,205.3 35.8,208.4 33.9,215.5 31.7,217.9" fill="none" stroke="#eab4a2" stroke-width="0.7" stroke-linejoin="round" stroke-linecap="round" opacity="0.7"/>
<polyline points="31.7,217.9 25.2,223.0 18.0,220.4 16.5,222.3 14.6,226.7 7.0,231.5" fill="none" stroke="#eab4a2" stroke-width="0.7" stroke-linejoin="round" stroke-linecap="round" opacity="0.7"/>
<polyline points="265.7,203.2 262.3,202.2 265.7,208.0 265.1,212.3 266.0,217.3 263.0,216.3" fill="none" stroke="#eab4a2" stroke-width="0.7" stroke-linejoin="round" stroke-linecap="round" opacity="0.7"/>
<polyline points="263.0,216.3 269.9,213.1 273.6,212.2 275.3,213.8 286.3,210.7 290.0,212.5" fill="none" stroke="#eab4a2" stroke-width="0.7" stroke-linejoin="round" stroke-linecap="round" opacity="0.7"/>
<polyline points="347.3,248.9 348.2,238.7 354.4,231.2 356.4,224.2 357.4,215.6 361.0,204.3" fill="none" stroke="#eab4a2" stroke-width="0.7" stroke-linejoin="round" stroke-linecap="round" opacity="0.7"/>
<polyline points="554.0,14.9 551.4,17.1 545.9,27.7 533.6,31.1 531.8,40.3 525.0,42.5" fill="none" stroke="#eab4a2" stroke-width="0.7" stroke-linejoin="round" stroke-linecap="round" opacity="0.7"/>
<polyline points="554.0,14.9 563.4,18.3 577.8,23.0 588.8,23.1 596.8,23.9 606.0,29.1" fill="none" stroke="#eab4a2" stroke-width="0.7" stroke-linejoin="round" stroke-linecap="round" opacity="0.7"/>
<polyline points="606.0,29.1 613.8,37.1 619.1,41.7 621.6,48.6 633.8,54.7 635.9,56.3" fill="none" stroke="#eab4a2" stroke-width="0.7" stroke-linejoin="round" stroke-linecap="round" opacity="0.7"/>
<polyline points="606.0,29.1 615.5,33.3 623.0,36.1 636.6,33.4 639.6,36.0 652.2,38.3" fill="none" stroke="#eab4a2" stroke-width="0.7" stroke-linejoin="round" stroke-linecap="round" opacity="0.7"/>
<polyline points="733.8,7.3 740.2,12.9 745.7,10.5 754.3,14.3 760.2,18.6 763.8,24.7" fill="none" stroke="#eab4a2" stroke-width="0.7" stroke-linejoin="round" stroke-linecap="round" opacity="0.7"/>
<polyline points="733.8,7.3 723.2,16.3 712.4,18.0 706.2,29.3 699.6,35.8 687.6,41.0" fill="none" stroke="#eab4a2" stroke-width="0.7" stroke-linejoin="round" stroke-linecap="round" opacity="0.7"/>
<polyline points="763.8,24.7 772.8,28.5 778.3,29.0 777.9,36.4 783.9,41.8 791.0,43.8" fill="none" stroke="#eab4a2" stroke-width="0.7" stroke-linejoin="round" stroke-linecap="round" opacity="0.7"/>
<polyline points="826.3,23.5 834.0,23.4 842.1,23.4 844.4,21.6 855.2,25.5 859.0,22.0" fill="none" stroke="#eab4a2" stroke-width="0.7" stroke-linejoin="round" stroke-linecap="round" opacity="0.7"/>
<polyline points="826.3,23.5 822.9,33.6 827.9,38.3 823.7,43.1 822.3,52.8 821.0,60.1" fill="none" stroke="#eab4a2" stroke-width="0.7" stroke-linejoin="round" stroke-linecap="round" opacity="0.7"/>
<polyline points="859.0,22.0 858.4,28.4 859.8,42.6 853.8,55.1 853.6,62.8 851.6,73.1" fill="none" stroke="#eab4a2" stroke-width="0.7" stroke-linejoin="round" stroke-linecap="round" opacity="0.7"/>
<polyline points="652.2,38.3 655.4,37.3 655.8,42.6 660.8,49.2 656.9,48.1 660.4,50.8" fill="none" stroke="#eab4a2" stroke-width="0.7" stroke-linejoin="round" stroke-linecap="round" opacity="0.7"/>
<polyline points="652.2,38.3 646.0,41.4 648.2,48.7 642.2,47.6 636.7,53.6 635.9,56.3" fill="none" stroke="#eab4a2" stroke-width="0.7" stroke-linejoin="round" stroke-linecap="round" opacity="0.7"/>
<polyline points="687.6,41.0 685.6,40.0 679.0,41.1 668.8,44.7 667.3,47.4 660.4,50.8" fill="none" stroke="#eab4a2" stroke-width="0.7" stroke-linejoin="round" stroke-linecap="round" opacity="0.7"/>
<polyline points="687.6,41.0 683.7,48.5 679.0,55.9 676.4,60.7 674.7,64.7 674.0,73.7" fill="none" stroke="#eab4a2" stroke-width="0.7" stroke-linejoin="round" stroke-linecap="round" opacity="0.7"/>
<polyline points="660.4,50.8 655.7,51.4 649.6,52.3 645.9,51.4 638.4,56.3 635.9,56.3" fill="none" stroke="#eab4a2" stroke-width="0.7" stroke-linejoin="round" stroke-linecap="round" opacity="0.7"/>
<polyline points="635.9,56.3 636.7,61.3 638.0,66.8 637.7,68.5 636.5,77.9 634.2,80.2" fill="none" stroke="#eab4a2" stroke-width="0.7" stroke-linejoin="round" stroke-linecap="round" opacity="0.7"/>
<polyline points="791.0,43.8 792.9,47.6 786.9,57.8 784.8,63.7 788.8,62.1 784.4,70.3" fill="none" stroke="#eab4a2" stroke-width="0.7" stroke-linejoin="round" stroke-linecap="round" opacity="0.7"/>
<polyline points="821.0,60.1 822.5,66.2 826.3,65.4 834.5,72.3 837.7,74.2 839.0,81.5" fill="none" stroke="#eab4a2" stroke-width="0.7" stroke-linejoin="round" stroke-linecap="round" opacity="0.7"/>
<polyline points="821.0,60.1 826.3,64.2 829.4,62.9 840.8,71.2 849.2,67.4 851.6,73.1" fill="none" stroke="#eab4a2" stroke-width="0.7" stroke-linejoin="round" stroke-linecap="round" opacity="0.7"/>
<polyline points="498.0,45.4 503.4,46.9 508.8,45.7 511.7,40.2 516.4,39.4 525.0,42.5" fill="none" stroke="#eab4a2" stroke-width="0.7" stroke-linejoin="round" stroke-linecap="round" opacity="0.7"/>
<polyline points="498.0,45.4 501.0,51.2 503.6,53.9 503.1,60.0 510.9,72.0 510.7,73.7" fill="none" stroke="#eab4a2" stroke-width="0.7" stroke-linejoin="round" stroke-linecap="round" opacity="0.7"/>
<polyline points="525.0,42.5 525.6,45.5 515.8,58.6 516.1,63.3 512.2,67.2 510.7,73.7" fill="none" stroke="#eab4a2" stroke-width="0.7" stroke-linejoin="round" stroke-linecap="round" opacity="0.7"/>
<polyline points="510.7,73.7 513.0,75.5 515.9,74.6 518.8,83.7 516.9,82.9 521.6,85.7" fill="none" stroke="#eab4a2" stroke-width="0.7" stroke-linejoin="round" stroke-linecap="round" opacity="0.7"/>
<polyline points="586.9,83.5 594.2,82.7 595.3,80.8 603.3,79.6 611.7,85.9 614.0,83.5" fill="none" stroke="#eab4a2" stroke-width="0.7" stroke-linejoin="round" stroke-linecap="round" opacity="0.7"/>
<polyline points="586.9,83.5 598.0,85.7 606.9,81.4 616.1,81.6 628.6,83.3 634.2,80.2" fill="none" stroke="#eab4a2" stroke-width="0.7" stroke-linejoin="round" stroke-linecap="round" opacity="0.7"/>
<polyline points="614.0,83.5 616.1,86.1 624.0,84.4 628.6,80.8 633.3,83.9 634.2,80.2" fill="none" stroke="#eab4a2" stroke-width="0.7" stroke-linejoin="round" stroke-linecap="round" opacity="0.7"/>
<polyline points="657.6,111.8 652.6,115.2 646.7,113.6 639.8,112.3 630.3,116.8 625.0,118.3" fill="none" stroke="#eab4a2" stroke-width="0.7" stroke-linejoin="round" stroke-linecap="round" opacity="0.7"/>
<polyline points="867.0,144.5 863.4,148.2 868.7,155.2 865.7,162.6 869.4,162.6 868.4,168.7" fill="none" stroke="#eab4a2" stroke-width="0.7" stroke-linejoin="round" stroke-linecap="round" opacity="0.7"/>
<polyline points="867.0,144.5 864.4,148.8 859.4,151.1 859.2,156.8 852.9,161.5 847.4,163.1" fill="none" stroke="#eab4a2" stroke-width="0.7" stroke-linejoin="round" stroke-linecap="round" opacity="0.7"/>
<polyline points="924.3,158.0 923.4,151.6 915.7,154.7 908.1,149.4 901.7,145.1 900.6,144.9" fill="none" stroke="#eab4a2" stroke-width="0.7" stroke-linejoin="round" stroke-linecap="round" opacity="0.7"/>
<polyline points="924.3,158.0 923.0,161.1 921.8,173.9 923.9,177.1 927.0,183.9 923.0,189.7" fill="none" stroke="#eab4a2" stroke-width="0.7" stroke-linejoin="round" stroke-linecap="round" opacity="0.7"/>
<polyline points="508.0,209.7 518.5,221.2 523.5,227.0 528.3,242.9 530.4,254.6 540.6,261.5" fill="none" stroke="#eab4a2" stroke-width="0.7" stroke-linejoin="round" stroke-linecap="round" opacity="0.7"/>
<polyline points="508.0,209.7 518.3,218.2 531.5,227.1 548.1,232.3 563.8,243.9 573.3,253.3" fill="none" stroke="#eab4a2" stroke-width="0.7" stroke-linejoin="round" stroke-linecap="round" opacity="0.7"/>
<polyline points="573.3,253.3 567.0,255.7 559.1,254.9 554.9,258.7 545.4,261.6 540.6,261.5" fill="none" stroke="#eab4a2" stroke-width="0.7" stroke-linejoin="round" stroke-linecap="round" opacity="0.7"/>
<polyline points="785.5,226.1 787.0,226.1 789.7,230.3 792.2,239.9 797.2,245.0 801.2,245.7" fill="none" stroke="#eab4a2" stroke-width="0.7" stroke-linejoin="round" stroke-linecap="round" opacity="0.7"/>
<polyline points="785.5,226.1 793.5,228.8 801.4,242.2 800.1,248.2 808.9,251.0 815.5,257.5" fill="none" stroke="#eab4a2" stroke-width="0.7" stroke-linejoin="round" stroke-linecap="round" opacity="0.7"/>
<polyline points="815.5,257.5 816.4,253.1 810.0,256.3 808.7,250.2 807.9,250.6 801.2,245.7" fill="none" stroke="#eab4a2" stroke-width="0.7" stroke-linejoin="round" stroke-linecap="round" opacity="0.7"/>
<polyline points="784.4,70.3 786.1,69.7 787.1,75.0 784.5,74.3 788.0,77.4 788.6,82.9" fill="none" stroke="#eab4a2" stroke-width="0.7" stroke-linejoin="round" stroke-linecap="round" opacity="0.7"/>
<polyline points="788.6,82.9 782.5,87.6 777.0,87.7 772.5,92.3 768.4,96.6 760.6,99.7" fill="none" stroke="#eab4a2" stroke-width="0.7" stroke-linejoin="round" stroke-linecap="round" opacity="0.7"/>
<polyline points="839.0,81.5 845.5,83.4 845.9,76.0 843.5,79.6 851.4,75.8 851.6,73.1" fill="none" stroke="#eab4a2" stroke-width="0.7" stroke-linejoin="round" stroke-linecap="round" opacity="0.7"/>
<polyline points="839.0,81.5 841.2,80.2 847.2,83.1 849.8,84.2 854.5,81.3 855.8,84.3" fill="none" stroke="#eab4a2" stroke-width="0.7" stroke-linejoin="round" stroke-linecap="round" opacity="0.7"/>
<polyline points="855.8,84.3 853.0,85.9 857.4,82.9 849.6,74.1 850.6,74.7 851.6,73.1" fill="none" stroke="#eab4a2" stroke-width="0.7" stroke-linejoin="round" stroke-linecap="round" opacity="0.7"/>
<polyline points="876.8,119.3 882.5,121.2 886.7,126.1 887.8,136.1 896.2,140.8 900.6,144.9" fill="none" stroke="#eab4a2" stroke-width="0.7" stroke-linejoin="round" stroke-linecap="round" opacity="0.7"/>
<polyline points="914.6,123.5 910.8,127.6 906.7,130.8 908.2,139.0 900.0,137.6 900.6,144.9" fill="none" stroke="#eab4a2" stroke-width="0.7" stroke-linejoin="round" stroke-linecap="round" opacity="0.7"/>
<polyline points="847.4,163.1 854.1,165.2 858.0,163.0 859.4,164.5 866.7,166.5 868.4,168.7" fill="none" stroke="#eab4a2" stroke-width="0.7" stroke-linejoin="round" stroke-linecap="round" opacity="0.7"/>
<polyline points="923.0,189.7 922.0,196.7 917.1,196.2 918.2,202.3 913.5,201.0 911.8,205.1" fill="none" stroke="#eab4a2" stroke-width="0.7" stroke-linejoin="round" stroke-linecap="round" opacity="0.7"/>
<polyline points="44.0,263.5 33.4,260.1 25.8,247.4 22.3,244.2 15.9,236.3 7.0,231.5" fill="none" stroke="#eab4a2" stroke-width="0.7" stroke-linejoin="round" stroke-linecap="round" opacity="0.7"/>
<polyline points="185.0,244.3 183.3,227.5 174.9,218.7 170.0,202.4 171.3,192.1 165.6,177.1" fill="none" stroke="#eab4a2" stroke-width="0.7" stroke-linejoin="round" stroke-linecap="round" opacity="0.7"/>
<polyline points="182.4,137.9 187.4,136.4 194.7,142.5 201.5,139.0 211.0,144.1 216.0,144.9" fill="none" stroke="#eab4a2" stroke-width="0.7" stroke-linejoin="round" stroke-linecap="round" opacity="0.7"/>
<polyline points="182.4,137.9 182.4,149.3 179.0,153.1 174.7,159.9 167.5,168.5 165.6,177.1" fill="none" stroke="#eab4a2" stroke-width="0.7" stroke-linejoin="round" stroke-linecap="round" opacity="0.7"/>
<polyline points="216.0,144.9 221.4,150.9 217.9,149.4 220.8,152.2 223.0,155.2 225.8,158.9" fill="none" stroke="#eab4a2" stroke-width="0.7" stroke-linejoin="round" stroke-linecap="round" opacity="0.7"/>
<polyline points="857.3,224.0 866.7,231.7 876.1,236.3 882.8,238.7 893.2,246.6" fill="none" stroke="#cdbfd0" stroke-width="0.75" stroke-linejoin="round" stroke-linecap="round" />
<polyline points="857.3,224.0 851.8,225.6 848.0,230.3 846.6,231.5 842.6,233.1" fill="none" stroke="#cdbfd0" stroke-width="0.75" stroke-linejoin="round" stroke-linecap="round" />
<polyline points="842.6,233.1 842.8,238.7 841.7,240.0 842.8,248.4 840.9,251.9" fill="none" stroke="#cdbfd0" stroke-width="0.75" stroke-linejoin="round" stroke-linecap="round" />
<polyline points="840.9,251.9 847.0,254.6 853.8,254.8 860.2,258.3 865.0,262.1" fill="none" stroke="#cdbfd0" stroke-width="0.75" stroke-linejoin="round" stroke-linecap="round" />
<polyline points="865.0,262.1 869.9,257.0 880.2,252.9 887.3,252.9 893.2,246.6" fill="none" stroke="#cdbfd0" stroke-width="0.75" stroke-linejoin="round" stroke-linecap="round" />
<polyline points="897.8,244.7 896.6,244.6 895.4,246.6 895.7,246.8 893.2,246.6" fill="none" stroke="#cdbfd0" stroke-width="0.75" stroke-linejoin="round" stroke-linecap="round" />
<polyline points="897.8,244.7 899.1,239.6 897.3,237.5 900.8,234.7 900.2,232.7" fill="none" stroke="#cdbfd0" stroke-width="0.75" stroke-linejoin="round" stroke-linecap="round" />
<polyline points="900.2,232.7 907.1,225.1 911.1,221.1 920.6,218.0 926.3,211.8" fill="none" stroke="#cdbfd0" stroke-width="0.75" stroke-linejoin="round" stroke-linecap="round" />
<polyline points="900.2,232.7 894.1,221.4 886.2,211.9 878.9,199.9 872.0,191.5" fill="none" stroke="#cdbfd0" stroke-width="0.75" stroke-linejoin="round" stroke-linecap="round" />
<polyline points="857.3,224.0 859.8,215.5 860.7,212.2 856.4,202.8 859.4,196.0" fill="none" stroke="#cdbfd0" stroke-width="0.75" stroke-linejoin="round" stroke-linecap="round" />
<polyline points="859.4,196.0 864.1,197.2 865.4,192.6 867.4,194.9 872.0,191.5" fill="none" stroke="#cdbfd0" stroke-width="0.75" stroke-linejoin="round" stroke-linecap="round" />
<polyline points="13.7,11.0 16.6,9.8 20.5,7.9 28.9,4.4 31.0,4.6" fill="none" stroke="#cdbfd0" stroke-width="0.75" stroke-linejoin="round" stroke-linecap="round" />
<polyline points="418.3,282.8 410.5,275.3 401.4,268.7 388.7,262.2 380.6,252.7" fill="none" stroke="#cdbfd0" stroke-width="0.75" stroke-linejoin="round" stroke-linecap="round" />
<polyline points="380.6,252.7 380.0,251.5 376.9,255.1 378.6,255.3 378.2,257.5" fill="none" stroke="#cdbfd0" stroke-width="0.75" stroke-linejoin="round" stroke-linecap="round" />
<polyline points="842.3,30.8 843.5,32.7 847.4,37.9 848.9,40.2 854.5,41.6" fill="none" stroke="#cdbfd0" stroke-width="0.75" stroke-linejoin="round" stroke-linecap="round" />
<polyline points="854.5,41.6 864.2,38.5 872.6,40.2 880.5,36.9 886.5,36.7" fill="none" stroke="#cdbfd0" stroke-width="0.75" stroke-linejoin="round" stroke-linecap="round" />
<polyline points="906.7,4.3 901.0,11.9 899.1,21.0 890.9,28.3 886.5,36.7" fill="none" stroke="#cdbfd0" stroke-width="0.75" stroke-linejoin="round" stroke-linecap="round" />
<polyline points="895.0,163.6 900.4,170.2 906.1,182.9 913.6,192.3 921.2,198.9" fill="none" stroke="#cdbfd0" stroke-width="0.75" stroke-linejoin="round" stroke-linecap="round" />
<polyline points="895.0,163.6 902.5,162.9 912.5,163.0 920.6,167.2 929.9,165.4" fill="none" stroke="#cdbfd0" stroke-width="0.75" stroke-linejoin="round" stroke-linecap="round" />
<polyline points="929.9,165.4 929.7,175.4 926.2,184.2 925.6,190.8 921.2,198.9" fill="none" stroke="#cdbfd0" stroke-width="0.75" stroke-linejoin="round" stroke-linecap="round" />
<polyline points="926.3,211.8 926.1,206.4 924.9,205.1 923.7,202.9 921.2,198.9" fill="none" stroke="#cdbfd0" stroke-width="0.75" stroke-linejoin="round" stroke-linecap="round" />
<polyline points="872.0,191.5 873.7,181.0 879.7,173.2 880.1,166.0 883.0,158.5" fill="none" stroke="#cdbfd0" stroke-width="0.75" stroke-linejoin="round" stroke-linecap="round" />
<polyline points="883.0,158.5 885.0,161.0 891.4,159.9 892.8,161.3 895.0,163.6" fill="none" stroke="#cdbfd0" stroke-width="0.75" stroke-linejoin="round" stroke-linecap="round" />
<polyline points="837.4,205.4 826.5,195.1 813.3,184.2 802.3,178.2 792.6,166.4" fill="none" stroke="#cdbfd0" stroke-width="0.75" stroke-linejoin="round" stroke-linecap="round" />
<polyline points="837.4,205.4 839.6,202.1 843.9,204.2 843.8,198.1 846.3,198.0" fill="none" stroke="#cdbfd0" stroke-width="0.75" stroke-linejoin="round" stroke-linecap="round" />
<polyline points="846.3,198.0 837.6,185.0 831.2,174.0 823.5,163.9 817.7,154.1" fill="none" stroke="#cdbfd0" stroke-width="0.75" stroke-linejoin="round" stroke-linecap="round" />
<polyline points="792.6,166.4 799.2,165.3 806.4,159.8 811.0,157.3 817.7,154.1" fill="none" stroke="#cdbfd0" stroke-width="0.75" stroke-linejoin="round" stroke-linecap="round" />
<polyline points="836.5,206.5 837.4,212.4 837.4,218.7 843.4,224.6 842.6,233.1" fill="none" stroke="#cdbfd0" stroke-width="0.75" stroke-linejoin="round" stroke-linecap="round" />
<polyline points="836.5,206.5 836.7,206.9 838.7,204.5 836.0,204.4 837.4,205.4" fill="none" stroke="#cdbfd0" stroke-width="0.75" stroke-linejoin="round" stroke-linecap="round" />
<polyline points="859.4,196.0 855.6,196.3 855.1,198.8 851.4,195.1 846.3,198.0" fill="none" stroke="#cdbfd0" stroke-width="0.75" stroke-linejoin="round" stroke-linecap="round" />
<polyline points="832.9,137.7 842.8,143.0 859.3,146.1 870.0,147.9 881.8,154.7" fill="none" stroke="#cdbfd0" stroke-width="0.75" stroke-linejoin="round" stroke-linecap="round" />
<polyline points="832.9,137.7 828.5,144.0 826.9,147.7 823.8,148.8 817.7,154.1" fill="none" stroke="#cdbfd0" stroke-width="0.75" stroke-linejoin="round" stroke-linecap="round" />
<polyline points="883.0,158.5 880.8,155.8 882.5,157.5 884.3,156.7 881.8,154.7" fill="none" stroke="#cdbfd0" stroke-width="0.75" stroke-linejoin="round" stroke-linecap="round" />
<polyline points="31.0,4.6 35.5,7.4 38.3,7.8 40.0,10.4 46.0,10.5" fill="none" stroke="#cdbfd0" stroke-width="0.75" stroke-linejoin="round" stroke-linecap="round" />
<polyline points="46.0,10.5 48.5,8.7 54.4,1.7 55.7,-2.4 61.4,-5.0" fill="none" stroke="#cdbfd0" stroke-width="0.75" stroke-linejoin="round" stroke-linecap="round" />
<polyline points="836.5,206.5 832.1,209.3 824.4,207.8 821.4,212.1 816.3,213.4" fill="none" stroke="#cdbfd0" stroke-width="0.75" stroke-linejoin="round" stroke-linecap="round" />
<polyline points="840.9,251.9 835.4,251.2 831.6,250.9 825.2,253.9 821.3,254.8" fill="none" stroke="#cdbfd0" stroke-width="0.75" stroke-linejoin="round" stroke-linecap="round" />
<polyline points="816.3,213.4 819.8,224.5 820.7,234.0 818.7,243.2 821.3,254.8" fill="none" stroke="#cdbfd0" stroke-width="0.75" stroke-linejoin="round" stroke-linecap="round" />
<polyline points="785.7,168.6 791.1,179.5 790.9,185.9 794.9,199.0 798.0,207.9" fill="none" stroke="#cdbfd0" stroke-width="0.75" stroke-linejoin="round" stroke-linecap="round" />
<polyline points="785.7,168.6 787.0,166.9 790.0,169.6 789.5,164.6 792.6,166.4" fill="none" stroke="#cdbfd0" stroke-width="0.75" stroke-linejoin="round" stroke-linecap="round" />
<polyline points="816.3,213.4 810.9,211.7 808.1,209.2 804.1,210.5 798.0,207.9" fill="none" stroke="#cdbfd0" stroke-width="0.75" stroke-linejoin="round" stroke-linecap="round" />
<polyline points="567.8,235.1 566.6,246.3 567.4,254.4 567.3,260.3 568.9,270.5" fill="none" stroke="#cdbfd0" stroke-width="0.75" stroke-linejoin="round" stroke-linecap="round" />
<polyline points="567.8,235.1 576.7,240.6 587.7,240.0 596.3,244.4 607.7,248.0" fill="none" stroke="#cdbfd0" stroke-width="0.75" stroke-linejoin="round" stroke-linecap="round" />
<polyline points="568.9,270.5 581.5,270.2 590.6,264.8 602.6,265.2 615.8,260.2" fill="none" stroke="#cdbfd0" stroke-width="0.75" stroke-linejoin="round" stroke-linecap="round" />
<polyline points="38.5,64.8 29.5,58.1 26.9,54.5 19.3,49.0 11.3,40.4" fill="none" stroke="#cdbfd0" stroke-width="0.75" stroke-linejoin="round" stroke-linecap="round" />
<polyline points="3.5,69.7 7.2,61.8 4.9,57.8 9.3,46.3 9.5,41.6" fill="none" stroke="#cdbfd0" stroke-width="0.75" stroke-linejoin="round" stroke-linecap="round" />
<polyline points="9.5,41.6 10.8,40.7 9.8,40.1 9.2,38.2 11.3,40.4" fill="none" stroke="#cdbfd0" stroke-width="0.75" stroke-linejoin="round" stroke-linecap="round" />
<polyline points="13.7,11.0 13.1,14.2 17.0,17.0 17.5,21.4 15.7,26.8" fill="none" stroke="#cdbfd0" stroke-width="0.75" stroke-linejoin="round" stroke-linecap="round" />
<polyline points="15.7,26.8 13.9,31.8 15.1,33.3 10.1,36.9 11.3,40.4" fill="none" stroke="#cdbfd0" stroke-width="0.75" stroke-linejoin="round" stroke-linecap="round" />
<polyline points="45.7,233.2 42.2,242.5 38.5,247.0 39.2,252.6 34.4,262.2" fill="none" stroke="#cdbfd0" stroke-width="0.75" stroke-linejoin="round" stroke-linecap="round" />
<polyline points="45.7,233.2 43.3,233.4 43.1,228.2 37.4,226.9 37.8,227.7" fill="none" stroke="#cdbfd0" stroke-width="0.75" stroke-linejoin="round" stroke-linecap="round" />
<polyline points="37.8,227.7 34.1,227.8 27.3,232.4 19.4,230.6 14.4,233.1" fill="none" stroke="#cdbfd0" stroke-width="0.75" stroke-linejoin="round" stroke-linecap="round" />
<polyline points="34.4,262.2 31.7,255.5 23.2,248.7 18.5,239.2 14.4,233.1" fill="none" stroke="#cdbfd0" stroke-width="0.75" stroke-linejoin="round" stroke-linecap="round" />
<polyline points="37.8,227.7 34.4,223.6 38.0,217.7 37.1,209.3 34.0,206.3" fill="none" stroke="#cdbfd0" stroke-width="0.75" stroke-linejoin="round" stroke-linecap="round" />
<polyline points="34.0,206.3 31.9,205.6 34.7,207.3 31.1,203.2 30.9,203.8" fill="none" stroke="#cdbfd0" stroke-width="0.75" stroke-linejoin="round" stroke-linecap="round" />
<polyline points="11.3,231.7 11.7,232.0 15.0,230.8 15.1,233.9 14.4,233.1" fill="none" stroke="#cdbfd0" stroke-width="0.75" stroke-linejoin="round" stroke-linecap="round" />
<polyline points="842.3,30.8 843.3,32.5 841.7,30.7 839.6,31.2 840.0,32.2" fill="none" stroke="#cdbfd0" stroke-width="0.75" stroke-linejoin="round" stroke-linecap="round" />
<polyline points="854.5,41.6 858.5,49.4 858.1,62.7 861.0,69.2 864.8,81.2" fill="none" stroke="#cdbfd0" stroke-width="0.75" stroke-linejoin="round" stroke-linecap="round" />
<polyline points="828.9,113.1 835.5,105.4 846.0,99.6 857.8,91.6 864.8,81.2" fill="none" stroke="#cdbfd0" stroke-width="0.75" stroke-linejoin="round" stroke-linecap="round" />
<polyline points="828.9,113.1 822.7,107.7 816.9,106.5 815.0,103.0 808.9,100.0" fill="none" stroke="#cdbfd0" stroke-width="0.75" stroke-linejoin="round" stroke-linecap="round" />
<polyline points="840.0,32.2 830.9,48.8 825.1,67.0 817.9,84.8 808.9,100.0" fill="none" stroke="#cdbfd0" stroke-width="0.75" stroke-linejoin="round" stroke-linecap="round" />
<polyline points="864.8,81.2 868.0,80.5 871.2,82.5 872.2,84.1 874.2,85.9" fill="none" stroke="#cdbfd0" stroke-width="0.75" stroke-linejoin="round" stroke-linecap="round" />
<polyline points="921.8,52.4 914.2,47.0 902.9,43.3 893.6,42.6 886.5,36.7" fill="none" stroke="#cdbfd0" stroke-width="0.75" stroke-linejoin="round" stroke-linecap="round" />
<polyline points="921.8,52.4 924.7,54.5 926.2,60.7 929.3,59.9 931.7,64.2" fill="none" stroke="#cdbfd0" stroke-width="0.75" stroke-linejoin="round" stroke-linecap="round" />
<polyline points="931.7,64.2 918.8,70.4 905.4,73.0 888.4,82.1 874.2,85.9" fill="none" stroke="#cdbfd0" stroke-width="0.75" stroke-linejoin="round" stroke-linecap="round" />
<polyline points="912.8,7.6 916.6,14.2 914.8,15.7 917.3,19.7 921.4,25.8" fill="none" stroke="#cdbfd0" stroke-width="0.75" stroke-linejoin="round" stroke-linecap="round" />
<polyline points="921.8,52.4 924.1,46.2 923.8,38.5 923.3,32.2 921.4,25.8" fill="none" stroke="#cdbfd0" stroke-width="0.75" stroke-linejoin="round" stroke-linecap="round" />
<polyline points="931.7,64.2 930.9,65.7 934.8,62.6 933.5,65.3 933.4,64.9" fill="none" stroke="#cdbfd0" stroke-width="0.75" stroke-linejoin="round" stroke-linecap="round" />
<polyline points="906.7,4.3 906.8,4.5 908.0,4.5 910.0,7.3 912.8,7.6" fill="none" stroke="#cdbfd0" stroke-width="0.75" stroke-linejoin="round" stroke-linecap="round" />
<polyline points="15.7,26.8 23.4,26.5 27.1,28.4 37.4,28.8 43.4,31.6" fill="none" stroke="#cdbfd0" stroke-width="0.75" stroke-linejoin="round" stroke-linecap="round" />
<polyline points="38.5,64.8 37.6,63.3 40.0,65.0 36.4,62.8 38.6,64.8" fill="none" stroke="#cdbfd0" stroke-width="0.75" stroke-linejoin="round" stroke-linecap="round" />
<polyline points="43.4,31.6 41.7,40.1 41.7,46.1 38.1,57.5 38.6,64.8" fill="none" stroke="#cdbfd0" stroke-width="0.75" stroke-linejoin="round" stroke-linecap="round" />
<polyline points="760.8,159.5 748.9,154.2 737.0,153.4 725.6,147.3 715.2,142.8" fill="none" stroke="#cdbfd0" stroke-width="0.75" stroke-linejoin="round" stroke-linecap="round" />
<polyline points="760.8,159.5 753.3,164.0 749.1,171.8 739.8,172.8 733.8,179.2" fill="none" stroke="#cdbfd0" stroke-width="0.75" stroke-linejoin="round" stroke-linecap="round" />
<polyline points="733.8,179.2 727.8,174.1 717.1,174.0 712.1,169.9 705.4,164.7" fill="none" stroke="#cdbfd0" stroke-width="0.75" stroke-linejoin="round" stroke-linecap="round" />
<polyline points="705.4,164.7 706.0,161.8 707.4,153.3 706.2,150.5 709.8,145.4" fill="none" stroke="#cdbfd0" stroke-width="0.75" stroke-linejoin="round" stroke-linecap="round" />
<polyline points="715.2,142.8 714.5,145.5 710.4,144.7 710.5,144.8 709.8,145.4" fill="none" stroke="#cdbfd0" stroke-width="0.75" stroke-linejoin="round" stroke-linecap="round" />
<polyline points="664.8,9.9 660.5,12.2 659.7,18.7 655.1,19.9 654.5,23.3" fill="none" stroke="#cdbfd0" stroke-width="0.75" stroke-linejoin="round" stroke-linecap="round" />
<polyline points="654.5,23.3 649.4,22.0 639.9,14.2 637.1,14.8 628.3,8.8" fill="none" stroke="#cdbfd0" stroke-width="0.75" stroke-linejoin="round" stroke-linecap="round" />
<polyline points="600.5,20.2 607.4,15.1 616.5,14.0 623.4,12.3 628.3,8.8" fill="none" stroke="#cdbfd0" stroke-width="0.75" stroke-linejoin="round" stroke-linecap="round" />
<polyline points="601.9,56.3 603.2,45.6 602.6,36.9 600.4,31.0 600.5,20.2" fill="none" stroke="#cdbfd0" stroke-width="0.75" stroke-linejoin="round" stroke-linecap="round" />
<polyline points="601.9,56.3 612.6,57.3 618.6,61.0 629.1,63.5 638.1,66.7" fill="none" stroke="#cdbfd0" stroke-width="0.75" stroke-linejoin="round" stroke-linecap="round" />
<polyline points="650.2,55.0 646.5,56.3 647.7,62.2 642.5,63.2 643.1,65.5" fill="none" stroke="#cdbfd0" stroke-width="0.75" stroke-linejoin="round" stroke-linecap="round" />
<polyline points="650.2,55.0 652.5,44.8 654.0,37.2 653.9,31.5 654.5,23.3" fill="none" stroke="#cdbfd0" stroke-width="0.75" stroke-linejoin="round" stroke-linecap="round" />
<polyline points="638.1,66.7 639.6,65.6 639.4,66.7 640.4,66.9 641.6,65.9" fill="none" stroke="#cdbfd0" stroke-width="0.75" stroke-linejoin="round" stroke-linecap="round" />
<polyline points="643.1,65.5 642.4,65.3 640.0,66.3 641.9,64.5 641.6,65.9" fill="none" stroke="#cdbfd0" stroke-width="0.75" stroke-linejoin="round" stroke-linecap="round" />
<polyline points="704.1,48.4 692.0,51.4 677.0,50.1 663.5,51.4 650.2,55.0" fill="none" stroke="#cdbfd0" stroke-width="0.75" stroke-linejoin="round" stroke-linecap="round" />
<polyline points="704.1,48.4 702.0,60.2 701.6,72.4 703.4,82.5 703.1,96.9" fill="none" stroke="#cdbfd0" stroke-width="0.75" stroke-linejoin="round" stroke-linecap="round" />
<polyline points="703.1,96.9 699.0,96.4 694.6,101.5 688.7,99.6 683.8,103.4" fill="none" stroke="#cdbfd0" stroke-width="0.75" stroke-linejoin="round" stroke-linecap="round" />
<polyline points="643.1,65.5 653.3,74.4 665.7,82.6 675.4,96.4 683.8,103.4" fill="none" stroke="#cdbfd0" stroke-width="0.75" stroke-linejoin="round" stroke-linecap="round" />
<polyline points="733.1,101.5 729.8,113.4 722.6,124.6 719.6,134.8 715.2,142.8" fill="none" stroke="#cdbfd0" stroke-width="0.75" stroke-linejoin="round" stroke-linecap="round" />
<polyline points="733.1,101.5 727.7,98.7 719.5,101.4 708.4,97.3 703.1,96.9" fill="none" stroke="#cdbfd0" stroke-width="0.75" stroke-linejoin="round" stroke-linecap="round" />
<polyline points="683.5,126.4 691.3,129.4 698.6,134.7 704.8,138.8 709.8,145.4" fill="none" stroke="#cdbfd0" stroke-width="0.75" stroke-linejoin="round" stroke-linecap="round" />
<polyline points="683.5,126.4 682.3,127.3 679.7,122.9 680.0,122.0 678.8,121.8" fill="none" stroke="#cdbfd0" stroke-width="0.75" stroke-linejoin="round" stroke-linecap="round" />
<polyline points="683.8,103.4 680.3,106.4 679.6,114.8 681.0,119.1 678.8,121.8" fill="none" stroke="#cdbfd0" stroke-width="0.75" stroke-linejoin="round" stroke-linecap="round" />
<polyline points="601.9,56.3 597.6,58.6 594.7,58.3 594.6,58.4 591.2,60.0" fill="none" stroke="#cdbfd0" stroke-width="0.75" stroke-linejoin="round" stroke-linecap="round" />
<polyline points="614.0,122.9 621.8,109.1 626.4,96.7 630.1,83.2 638.1,66.7" fill="none" stroke="#cdbfd0" stroke-width="0.75" stroke-linejoin="round" stroke-linecap="round" />
<polyline points="614.0,122.9 606.7,122.1 599.3,120.8 594.1,115.4 586.9,113.9" fill="none" stroke="#cdbfd0" stroke-width="0.75" stroke-linejoin="round" stroke-linecap="round" />
<polyline points="591.2,60.0 587.6,66.7 579.7,75.2 574.0,82.6 571.3,88.0" fill="none" stroke="#cdbfd0" stroke-width="0.75" stroke-linejoin="round" stroke-linecap="round" />
<polyline points="571.3,88.0 570.7,93.1 574.9,97.3 573.8,100.3 573.6,105.7" fill="none" stroke="#cdbfd0" stroke-width="0.75" stroke-linejoin="round" stroke-linecap="round" />
<polyline points="378.2,257.5 369.1,258.7 365.2,263.0 357.9,268.2 351.1,269.1" fill="none" stroke="#cdbfd0" stroke-width="0.75" stroke-linejoin="round" stroke-linecap="round" />
<polyline points="581.7,184.4 574.7,190.9 571.8,200.3 567.3,209.8 563.4,220.1" fill="none" stroke="#cdbfd0" stroke-width="0.75" stroke-linejoin="round" stroke-linecap="round" />
<polyline points="567.8,235.1 566.9,231.5 565.6,230.7 561.8,230.8 562.2,226.5" fill="none" stroke="#cdbfd0" stroke-width="0.75" stroke-linejoin="round" stroke-linecap="round" />
<polyline points="419.9,273.9 421.9,264.5 428.1,261.0 432.6,251.3 434.9,244.4" fill="none" stroke="#cdbfd0" stroke-width="0.75" stroke-linejoin="round" stroke-linecap="round" />
<polyline points="419.9,273.9 411.7,265.1 406.6,261.6 398.1,255.7 391.9,248.6" fill="none" stroke="#cdbfd0" stroke-width="0.75" stroke-linejoin="round" stroke-linecap="round" />
<polyline points="430.8,223.7 423.3,231.1 410.1,238.2 399.3,242.5 391.9,248.6" fill="none" stroke="#cdbfd0" stroke-width="0.75" stroke-linejoin="round" stroke-linecap="round" />
<polyline points="418.3,282.8 418.3,279.2 416.9,279.7 417.1,276.4 419.9,273.9" fill="none" stroke="#cdbfd0" stroke-width="0.75" stroke-linejoin="round" stroke-linecap="round" />
<polyline points="380.6,252.7 383.3,249.7 380.1,250.8 382.2,249.8 382.6,247.9" fill="none" stroke="#cdbfd0" stroke-width="0.75" stroke-linejoin="round" stroke-linecap="round" />
<polyline points="382.6,247.9 386.5,246.4 386.3,247.3 387.3,250.4 391.9,248.6" fill="none" stroke="#cdbfd0" stroke-width="0.75" stroke-linejoin="round" stroke-linecap="round" />
<polyline points="535.8,241.1 530.5,237.4 524.7,239.9 516.4,238.7 510.2,236.3" fill="none" stroke="#cdbfd0" stroke-width="0.75" stroke-linejoin="round" stroke-linecap="round" />
<polyline points="532.8,256.3 527.6,258.9 521.5,260.7 512.1,261.6 506.8,263.0" fill="none" stroke="#cdbfd0" stroke-width="0.75" stroke-linejoin="round" stroke-linecap="round" />
<polyline points="533.0,257.3 529.4,263.5 521.7,270.3 520.1,274.3 512.7,281.8" fill="none" stroke="#cdbfd0" stroke-width="0.75" stroke-linejoin="round" stroke-linecap="round" />
<polyline points="506.8,263.0 509.0,263.5 506.1,267.5 508.8,273.9 507.8,274.6" fill="none" stroke="#cdbfd0" stroke-width="0.75" stroke-linejoin="round" stroke-linecap="round" />
<polyline points="507.8,274.6 510.2,275.5 512.1,277.3 510.1,282.0 512.7,281.8" fill="none" stroke="#cdbfd0" stroke-width="0.75" stroke-linejoin="round" stroke-linecap="round" />
<polyline points="535.8,241.1 536.0,245.7 536.7,248.5 535.3,253.5 532.8,256.3" fill="none" stroke="#cdbfd0" stroke-width="0.75" stroke-linejoin="round" stroke-linecap="round" />
<polyline points="471.6,278.4 482.5,277.1 490.8,276.8 497.8,274.1 507.8,274.6" fill="none" stroke="#cdbfd0" stroke-width="0.75" stroke-linejoin="round" stroke-linecap="round" />
<polyline points="624.6,144.8 628.4,145.2 634.7,139.1 640.5,142.0 648.4,138.2" fill="none" stroke="#cdbfd0" stroke-width="0.75" stroke-linejoin="round" stroke-linecap="round" />
<polyline points="672.3,161.4 670.4,156.2 668.3,146.7 665.1,142.0 662.0,136.4" fill="none" stroke="#cdbfd0" stroke-width="0.75" stroke-linejoin="round" stroke-linecap="round" />
<polyline points="614.0,122.9 618.2,130.3 617.1,135.6 624.0,141.5 624.6,144.8" fill="none" stroke="#cdbfd0" stroke-width="0.75" stroke-linejoin="round" stroke-linecap="round" />
<polyline points="641.6,65.9 641.4,82.5 643.1,99.7 648.5,121.7 648.4,138.2" fill="none" stroke="#cdbfd0" stroke-width="0.75" stroke-linejoin="round" stroke-linecap="round" />
<polyline points="605.4,181.8 608.5,181.9 607.4,178.8 608.0,181.6 611.5,179.8" fill="none" stroke="#cdbfd0" stroke-width="0.75" stroke-linejoin="round" stroke-linecap="round" />
<polyline points="678.8,121.8 673.4,124.3 671.5,128.4 665.3,135.1 662.0,136.4" fill="none" stroke="#cdbfd0" stroke-width="0.75" stroke-linejoin="round" stroke-linecap="round" />
<polyline points="692.8,204.4 694.4,197.0 696.6,183.8 697.1,176.6 699.2,167.8" fill="none" stroke="#cdbfd0" stroke-width="0.75" stroke-linejoin="round" stroke-linecap="round" />
<polyline points="692.8,204.4 688.9,204.6 683.3,206.5 675.6,209.0 671.8,208.1" fill="none" stroke="#cdbfd0" stroke-width="0.75" stroke-linejoin="round" stroke-linecap="round" />
<polyline points="671.8,208.1 671.1,199.0 673.0,184.2 674.6,177.2 677.5,165.2" fill="none" stroke="#cdbfd0" stroke-width="0.75" stroke-linejoin="round" stroke-linecap="round" />
<polyline points="677.5,165.2 683.6,162.8 684.8,165.4 690.0,164.0 692.2,165.7" fill="none" stroke="#cdbfd0" stroke-width="0.75" stroke-linejoin="round" stroke-linecap="round" />
<polyline points="692.2,165.7 693.9,165.5 697.4,165.6 699.7,166.2 699.2,167.8" fill="none" stroke="#cdbfd0" stroke-width="0.75" stroke-linejoin="round" stroke-linecap="round" />
<polyline points="723.0,214.5 714.0,213.0 707.9,207.5 701.0,204.8 692.8,204.4" fill="none" stroke="#cdbfd0" stroke-width="0.75" stroke-linejoin="round" stroke-linecap="round" />
<polyline points="723.0,214.5 727.1,206.7 729.8,197.5 730.4,187.6 733.8,179.2" fill="none" stroke="#cdbfd0" stroke-width="0.75" stroke-linejoin="round" stroke-linecap="round" />
<polyline points="705.4,164.7 703.3,167.4 700.2,168.2 698.4,165.6 699.2,167.8" fill="none" stroke="#cdbfd0" stroke-width="0.75" stroke-linejoin="round" stroke-linecap="round" />
<polyline points="660.3,213.6 663.2,211.6 667.9,209.5 668.7,209.7 671.8,208.1" fill="none" stroke="#cdbfd0" stroke-width="0.75" stroke-linejoin="round" stroke-linecap="round" />
<polyline points="672.3,161.4 674.9,163.6 675.6,162.5 675.3,162.5 677.5,165.2" fill="none" stroke="#cdbfd0" stroke-width="0.75" stroke-linejoin="round" stroke-linecap="round" />
<polyline points="683.5,126.4 687.4,137.0 689.0,144.4 689.7,157.3 692.2,165.7" fill="none" stroke="#cdbfd0" stroke-width="0.75" stroke-linejoin="round" stroke-linecap="round" />
<polyline points="669.4,228.8 679.6,235.0 688.7,246.9 697.4,251.5 708.4,261.1" fill="none" stroke="#cdbfd0" stroke-width="0.75" stroke-linejoin="round" stroke-linecap="round" />
<polyline points="667.3,271.9 676.0,280.1 681.0,283.2 689.1,290.5 698.1,297.9" fill="none" stroke="#cdbfd0" stroke-width="0.75" stroke-linejoin="round" stroke-linecap="round" />
<polyline points="698.1,297.9 700.5,290.7 701.8,285.3 707.3,282.5 707.2,275.9" fill="none" stroke="#cdbfd0" stroke-width="0.75" stroke-linejoin="round" stroke-linecap="round" />
<polyline points="708.4,261.1 706.1,267.1 705.8,267.9 709.9,273.6 707.2,275.9" fill="none" stroke="#cdbfd0" stroke-width="0.75" stroke-linejoin="round" stroke-linecap="round" />
<polyline points="627.7,258.6 638.8,261.6 646.0,265.9 655.4,267.1 667.3,271.9" fill="none" stroke="#cdbfd0" stroke-width="0.75" stroke-linejoin="round" stroke-linecap="round" />
<polyline points="384.8,-11.3 368.6,-7.8 358.4,-2.4 343.0,1.3 329.0,4.6" fill="none" stroke="#cdbfd0" stroke-width="0.75" stroke-linejoin="round" stroke-linecap="round" />
<polyline points="323.5,-6.6 324.7,-5.6 326.8,-1.5 328.8,3.8 329.0,4.6" fill="none" stroke="#cdbfd0" stroke-width="0.75" stroke-linejoin="round" stroke-linecap="round" />
<polyline points="30.9,203.8 33.6,198.1 38.2,191.3 38.6,186.8 43.0,179.7" fill="none" stroke="#cdbfd0" stroke-width="0.75" stroke-linejoin="round" stroke-linecap="round" />
<polyline points="43.2,164.5 45.0,169.6 44.1,173.8 43.9,176.6 43.0,179.7" fill="none" stroke="#cdbfd0" stroke-width="0.75" stroke-linejoin="round" stroke-linecap="round" />
<polyline points="-19.8,259.3 -12.3,251.5 -3.6,243.5 3.1,240.0 11.3,231.7" fill="none" stroke="#cdbfd0" stroke-width="0.75" stroke-linejoin="round" stroke-linecap="round" />
<polyline points="101.2,211.2 107.1,202.5 109.6,192.2 115.5,183.9 120.5,174.0" fill="none" stroke="#cdbfd0" stroke-width="0.75" stroke-linejoin="round" stroke-linecap="round" />
<polyline points="101.2,211.2 99.9,212.6 101.7,210.8 99.4,214.3 97.8,213.5" fill="none" stroke="#cdbfd0" stroke-width="0.75" stroke-linejoin="round" stroke-linecap="round" />
<polyline points="120.5,174.0 118.3,172.3 119.5,168.3 115.7,167.3 113.8,167.3" fill="none" stroke="#cdbfd0" stroke-width="0.75" stroke-linejoin="round" stroke-linecap="round" />
<polyline points="94.0,212.4 96.3,214.9 96.0,211.0 97.2,213.4 97.8,213.5" fill="none" stroke="#cdbfd0" stroke-width="0.75" stroke-linejoin="round" stroke-linecap="round" />
<polyline points="94.0,212.4 89.4,200.0 83.4,189.2 77.2,174.7 71.5,162.7" fill="none" stroke="#cdbfd0" stroke-width="0.75" stroke-linejoin="round" stroke-linecap="round" />
<polyline points="113.8,167.3 105.5,164.7 93.6,164.4 83.4,162.0 71.5,162.7" fill="none" stroke="#cdbfd0" stroke-width="0.75" stroke-linejoin="round" stroke-linecap="round" />
<polyline points="45.7,116.0 53.8,122.1 54.8,128.5 62.2,134.0 68.4,143.2" fill="none" stroke="#cdbfd0" stroke-width="0.75" stroke-linejoin="round" stroke-linecap="round" />
<polyline points="58.5,160.0 54.3,160.7 51.8,161.5 45.8,162.0 43.2,164.5" fill="none" stroke="#cdbfd0" stroke-width="0.75" stroke-linejoin="round" stroke-linecap="round" />
<polyline points="58.5,160.0 60.9,161.6 61.1,157.3 63.7,157.5 63.4,157.4" fill="none" stroke="#cdbfd0" stroke-width="0.75" stroke-linejoin="round" stroke-linecap="round" />
<polyline points="68.4,143.2 65.7,144.9 67.3,151.9 65.3,153.7 63.4,157.4" fill="none" stroke="#cdbfd0" stroke-width="0.75" stroke-linejoin="round" stroke-linecap="round" />
<polyline points="92.6,212.4 84.9,214.4 78.9,218.4 69.3,224.2 60.6,225.9" fill="none" stroke="#cdbfd0" stroke-width="0.75" stroke-linejoin="round" stroke-linecap="round" />
<polyline points="92.6,212.4 88.0,208.9 79.3,206.0 72.3,204.1 68.1,199.2" fill="none" stroke="#cdbfd0" stroke-width="0.75" stroke-linejoin="round" stroke-linecap="round" />
<polyline points="60.6,225.9 56.4,223.0 52.5,216.0 48.9,211.6 46.7,207.3" fill="none" stroke="#cdbfd0" stroke-width="0.75" stroke-linejoin="round" stroke-linecap="round" />
<polyline points="68.1,199.2 64.1,196.4 64.3,197.5 59.5,197.4 58.3,198.1" fill="none" stroke="#cdbfd0" stroke-width="0.75" stroke-linejoin="round" stroke-linecap="round" />
<polyline points="46.7,207.3 49.5,204.7 53.2,203.5 54.7,202.6 58.3,198.1" fill="none" stroke="#cdbfd0" stroke-width="0.75" stroke-linejoin="round" stroke-linecap="round" />
<polyline points="58.5,160.0 62.7,167.6 64.9,181.6 67.1,187.6 68.1,199.2" fill="none" stroke="#cdbfd0" stroke-width="0.75" stroke-linejoin="round" stroke-linecap="round" />
<polyline points="94.0,212.4 95.3,213.1 90.8,210.0 95.2,213.2 92.6,212.4" fill="none" stroke="#cdbfd0" stroke-width="0.75" stroke-linejoin="round" stroke-linecap="round" />
<polyline points="63.4,157.4 64.2,156.7 65.6,158.7 70.8,160.6 71.5,162.7" fill="none" stroke="#cdbfd0" stroke-width="0.75" stroke-linejoin="round" stroke-linecap="round" />
<polyline points="45.7,233.2 46.6,234.6 52.5,230.2 55.7,231.7 56.4,230.5" fill="none" stroke="#cdbfd0" stroke-width="0.75" stroke-linejoin="round" stroke-linecap="round" />
<polyline points="34.0,206.3 38.6,207.4 42.3,208.3 45.2,205.6 46.7,207.3" fill="none" stroke="#cdbfd0" stroke-width="0.75" stroke-linejoin="round" stroke-linecap="round" />
<polyline points="56.4,230.5 58.4,229.5 59.7,227.9 61.5,227.4 60.6,225.9" fill="none" stroke="#cdbfd0" stroke-width="0.75" stroke-linejoin="round" stroke-linecap="round" />
<polyline points="43.0,179.7 45.7,183.0 48.9,188.9 52.3,193.4 58.3,198.1" fill="none" stroke="#cdbfd0" stroke-width="0.75" stroke-linejoin="round" stroke-linecap="round" />
<polyline points="63.2,80.0 68.4,87.0 77.2,94.3 86.0,98.7 91.2,108.3" fill="none" stroke="#cdbfd0" stroke-width="0.75" stroke-linejoin="round" stroke-linecap="round" />
<polyline points="47.8,97.9 59.1,103.3 67.3,109.7 78.3,113.8 86.2,119.9" fill="none" stroke="#cdbfd0" stroke-width="0.75" stroke-linejoin="round" stroke-linecap="round" />
<polyline points="91.2,108.3 89.5,113.5 86.6,114.8 88.1,114.6 86.2,119.9" fill="none" stroke="#cdbfd0" stroke-width="0.75" stroke-linejoin="round" stroke-linecap="round" />
<polyline points="113.8,167.3 111.7,160.6 110.6,151.2 108.1,144.4 103.0,136.8" fill="none" stroke="#cdbfd0" stroke-width="0.75" stroke-linejoin="round" stroke-linecap="round" />
<polyline points="68.4,143.2 72.9,142.0 75.2,137.8 82.8,132.6 86.8,130.2" fill="none" stroke="#cdbfd0" stroke-width="0.75" stroke-linejoin="round" stroke-linecap="round" />
<polyline points="103.0,136.8 100.7,134.5 94.7,133.6 92.2,130.4 86.8,130.2" fill="none" stroke="#cdbfd0" stroke-width="0.75" stroke-linejoin="round" stroke-linecap="round" />
<polyline points="86.2,119.9 86.0,122.1 86.7,126.7 85.6,129.2 86.8,130.2" fill="none" stroke="#cdbfd0" stroke-width="0.75" stroke-linejoin="round" stroke-linecap="round" />
<polyline points="69.8,75.1 71.3,67.3 72.6,59.5 78.1,52.3 77.7,43.7" fill="none" stroke="#cdbfd0" stroke-width="0.75" stroke-linejoin="round" stroke-linecap="round" />
<polyline points="69.8,75.1 80.4,75.2 87.0,76.0 97.4,78.6 106.1,78.9" fill="none" stroke="#cdbfd0" stroke-width="0.75" stroke-linejoin="round" stroke-linecap="round" />
<polyline points="77.7,43.7 82.6,41.9 85.9,46.6 88.5,42.9 91.8,45.7" fill="none" stroke="#cdbfd0" stroke-width="0.75" stroke-linejoin="round" stroke-linecap="round" />
<polyline points="91.8,45.7 93.2,46.5 95.0,54.4 99.5,56.4 101.3,58.9" fill="none" stroke="#cdbfd0" stroke-width="0.75" stroke-linejoin="round" stroke-linecap="round" />
<polyline points="106.1,78.9 106.3,76.0 104.3,69.5 103.2,64.9 101.3,58.9" fill="none" stroke="#cdbfd0" stroke-width="0.75" stroke-linejoin="round" stroke-linecap="round" />
<polyline points="69.8,75.1 68.6,77.2 65.1,78.4 64.6,80.1 63.2,80.0" fill="none" stroke="#cdbfd0" stroke-width="0.75" stroke-linejoin="round" stroke-linecap="round" />
<polyline points="91.2,108.3 95.8,101.5 102.0,99.2 113.0,93.4 117.5,87.4" fill="none" stroke="#cdbfd0" stroke-width="0.75" stroke-linejoin="round" stroke-linecap="round" />
<polyline points="106.1,78.9 108.3,82.6 113.2,83.5 113.4,84.3 117.5,87.4" fill="none" stroke="#cdbfd0" stroke-width="0.75" stroke-linejoin="round" stroke-linecap="round" />
<polyline points="801.7,97.9 799.6,95.5 797.8,95.5 798.5,91.0 794.6,91.7" fill="none" stroke="#cdbfd0" stroke-width="0.75" stroke-linejoin="round" stroke-linecap="round" />
<polyline points="801.7,97.9 793.0,108.4 781.6,125.1 774.8,138.5 765.3,149.2" fill="none" stroke="#cdbfd0" stroke-width="0.75" stroke-linejoin="round" stroke-linecap="round" />
<polyline points="794.6,91.7 782.8,88.6 771.0,90.7 762.3,92.0 748.6,88.8" fill="none" stroke="#cdbfd0" stroke-width="0.75" stroke-linejoin="round" stroke-linecap="round" />
<polyline points="765.3,149.2 758.8,136.6 750.6,125.5 744.7,110.8 739.8,100.3" fill="none" stroke="#cdbfd0" stroke-width="0.75" stroke-linejoin="round" stroke-linecap="round" />
<polyline points="739.8,100.3 739.6,95.0 745.1,92.7 748.8,89.6 748.6,88.8" fill="none" stroke="#cdbfd0" stroke-width="0.75" stroke-linejoin="round" stroke-linecap="round" />
<polyline points="840.0,32.2 833.7,33.4 821.4,39.4 814.4,42.5 807.6,44.4" fill="none" stroke="#cdbfd0" stroke-width="0.75" stroke-linejoin="round" stroke-linecap="round" />
<polyline points="808.9,100.0 805.6,97.2 806.7,100.0 805.3,99.6 801.7,97.9" fill="none" stroke="#cdbfd0" stroke-width="0.75" stroke-linejoin="round" stroke-linecap="round" />
<polyline points="807.6,44.4 802.6,48.7 802.8,51.6 801.1,54.2 796.0,59.2" fill="none" stroke="#cdbfd0" stroke-width="0.75" stroke-linejoin="round" stroke-linecap="round" />
<polyline points="796.0,59.2 798.0,68.4 792.8,73.0 795.7,85.2 794.6,91.7" fill="none" stroke="#cdbfd0" stroke-width="0.75" stroke-linejoin="round" stroke-linecap="round" />
<polyline points="828.9,113.1 827.8,118.3 832.0,123.7 833.7,131.5 832.9,137.7" fill="none" stroke="#cdbfd0" stroke-width="0.75" stroke-linejoin="round" stroke-linecap="round" />
<polyline points="766.4,157.4 764.0,154.7 766.3,153.0 766.5,149.5 765.3,149.2" fill="none" stroke="#cdbfd0" stroke-width="0.75" stroke-linejoin="round" stroke-linecap="round" />
<polyline points="766.4,157.4 771.9,159.3 775.1,163.2 777.9,164.6 782.3,167.7" fill="none" stroke="#cdbfd0" stroke-width="0.75" stroke-linejoin="round" stroke-linecap="round" />
<polyline points="785.7,168.6 786.3,170.6 785.4,168.5 782.1,165.8 782.3,167.7" fill="none" stroke="#cdbfd0" stroke-width="0.75" stroke-linejoin="round" stroke-linecap="round" />
<polyline points="766.4,157.4 767.4,159.0 765.2,157.6 762.7,161.3 760.8,159.5" fill="none" stroke="#cdbfd0" stroke-width="0.75" stroke-linejoin="round" stroke-linecap="round" />
<polyline points="733.1,101.5 736.4,101.7 735.5,100.6 740.0,100.0 739.8,100.3" fill="none" stroke="#cdbfd0" stroke-width="0.75" stroke-linejoin="round" stroke-linecap="round" />
<polyline points="886.4,106.5 893.0,106.7 899.7,107.4 902.3,103.0 909.1,105.2" fill="none" stroke="#cdbfd0" stroke-width="0.75" stroke-linejoin="round" stroke-linecap="round" />
<polyline points="886.4,106.5 885.0,116.6 886.3,129.1 887.5,135.7 885.2,148.5" fill="none" stroke="#cdbfd0" stroke-width="0.75" stroke-linejoin="round" stroke-linecap="round" />
<polyline points="909.1,105.2 916.3,111.8 922.0,115.7 924.6,122.2 931.3,125.5" fill="none" stroke="#cdbfd0" stroke-width="0.75" stroke-linejoin="round" stroke-linecap="round" />
<polyline points="885.2,148.5 898.3,143.7 910.3,136.2 917.7,131.5 931.3,125.5" fill="none" stroke="#cdbfd0" stroke-width="0.75" stroke-linejoin="round" stroke-linecap="round" />
<polyline points="933.4,64.9 928.8,73.5 922.5,87.2 913.8,95.7 909.1,105.2" fill="none" stroke="#cdbfd0" stroke-width="0.75" stroke-linejoin="round" stroke-linecap="round" />
<polyline points="874.2,85.9 878.1,90.9 878.8,95.0 884.6,102.8 886.4,106.5" fill="none" stroke="#cdbfd0" stroke-width="0.75" stroke-linejoin="round" stroke-linecap="round" />
<polyline points="881.8,154.7 882.4,151.1 885.0,152.9 883.0,150.4 885.2,148.5" fill="none" stroke="#cdbfd0" stroke-width="0.75" stroke-linejoin="round" stroke-linecap="round" />
<polyline points="65.4,2.3 65.9,10.5 62.6,14.6 61.5,19.4 59.6,27.2" fill="none" stroke="#cdbfd0" stroke-width="0.75" stroke-linejoin="round" stroke-linecap="round" />
<polyline points="65.4,2.3 70.5,2.4 79.7,4.9 85.7,6.8 92.0,8.9" fill="none" stroke="#cdbfd0" stroke-width="0.75" stroke-linejoin="round" stroke-linecap="round" />
<polyline points="92.0,8.9 86.9,13.6 79.4,24.2 75.8,26.1 71.3,34.5" fill="none" stroke="#cdbfd0" stroke-width="0.75" stroke-linejoin="round" stroke-linecap="round" />
<polyline points="59.6,27.2 60.4,28.8 58.1,28.1 59.1,28.0 59.9,28.1" fill="none" stroke="#cdbfd0" stroke-width="0.75" stroke-linejoin="round" stroke-linecap="round" />
<polyline points="59.9,28.1 59.1,27.0 65.4,32.4 64.5,32.1 66.1,32.9" fill="none" stroke="#cdbfd0" stroke-width="0.75" stroke-linejoin="round" stroke-linecap="round" />
<polyline points="71.3,34.5 68.8,35.5 68.3,36.0 68.7,34.9 66.1,32.9" fill="none" stroke="#cdbfd0" stroke-width="0.75" stroke-linejoin="round" stroke-linecap="round" />
<polyline points="46.0,10.5 51.7,13.4 50.5,17.3 54.6,20.9 59.6,27.2" fill="none" stroke="#cdbfd0" stroke-width="0.75" stroke-linejoin="round" stroke-linecap="round" />
<polyline points="61.4,-5.0 60.1,-2.9 65.2,-1.6 66.6,2.5 65.4,2.3" fill="none" stroke="#cdbfd0" stroke-width="0.75" stroke-linejoin="round" stroke-linecap="round" />
<polyline points="43.4,31.6 45.4,31.2 51.2,28.0 58.1,27.8 59.9,28.1" fill="none" stroke="#cdbfd0" stroke-width="0.75" stroke-linejoin="round" stroke-linecap="round" />
<polyline points="38.6,64.8 45.8,57.5 54.6,49.7 58.7,40.6 66.1,32.9" fill="none" stroke="#cdbfd0" stroke-width="0.75" stroke-linejoin="round" stroke-linecap="round" />
<polyline points="77.7,43.7 74.4,43.7 76.9,37.7 70.6,35.6 71.3,34.5" fill="none" stroke="#cdbfd0" stroke-width="0.75" stroke-linejoin="round" stroke-linecap="round" />
<polyline points="104.2,36.8 102.0,30.9 103.2,22.7 97.4,14.6 98.2,5.3" fill="none" stroke="#cdbfd0" stroke-width="0.75" stroke-linejoin="round" stroke-linecap="round" />
<polyline points="104.2,36.8 111.2,38.4 118.6,36.2 120.3,40.6 128.1,40.1" fill="none" stroke="#cdbfd0" stroke-width="0.75" stroke-linejoin="round" stroke-linecap="round" />
<polyline points="128.1,40.1 131.0,41.0 128.5,40.5 131.5,38.0 130.9,39.9" fill="none" stroke="#cdbfd0" stroke-width="0.75" stroke-linejoin="round" stroke-linecap="round" />
<polyline points="130.9,39.9 124.6,29.9 118.1,22.3 112.8,12.3 109.0,4.8" fill="none" stroke="#cdbfd0" stroke-width="0.75" stroke-linejoin="round" stroke-linecap="round" />
<polyline points="109.0,4.8 104.8,5.5 101.7,5.4 100.2,1.8 99.3,3.9" fill="none" stroke="#cdbfd0" stroke-width="0.75" stroke-linejoin="round" stroke-linecap="round" />
<polyline points="99.3,3.9 101.2,2.9 100.9,6.4 100.4,3.1 98.2,5.3" fill="none" stroke="#cdbfd0" stroke-width="0.75" stroke-linejoin="round" stroke-linecap="round" />
<polyline points="91.8,45.7 94.7,41.5 100.2,43.0 101.7,38.8 104.2,36.8" fill="none" stroke="#cdbfd0" stroke-width="0.75" stroke-linejoin="round" stroke-linecap="round" />
<polyline points="92.0,8.9 92.8,9.6 95.0,7.7 94.9,4.8 98.2,5.3" fill="none" stroke="#cdbfd0" stroke-width="0.75" stroke-linejoin="round" stroke-linecap="round" />
<polyline points="101.3,58.9 105.8,55.3 115.0,47.7 123.2,43.7 128.1,40.1" fill="none" stroke="#cdbfd0" stroke-width="0.75" stroke-linejoin="round" stroke-linecap="round" />
<polyline points="138.4,79.4 134.0,79.9 129.4,85.4 125.7,84.2 122.6,88.0" fill="none" stroke="#cdbfd0" stroke-width="0.75" stroke-linejoin="round" stroke-linecap="round" />
<polyline points="138.4,79.4 137.4,68.9 138.4,58.3 137.7,48.5 134.3,41.1" fill="none" stroke="#cdbfd0" stroke-width="0.75" stroke-linejoin="round" stroke-linecap="round" />
<polyline points="134.3,41.1 135.4,41.7 131.2,40.4 130.7,39.0 130.9,39.9" fill="none" stroke="#cdbfd0" stroke-width="0.75" stroke-linejoin="round" stroke-linecap="round" />
<polyline points="117.5,87.4 117.2,86.9 122.5,90.2 123.4,85.9 122.6,88.0" fill="none" stroke="#cdbfd0" stroke-width="0.75" stroke-linejoin="round" stroke-linecap="round" />
<polyline points="134.3,41.1 134.4,42.0 134.5,40.2 136.9,40.4 139.1,36.9" fill="none" stroke="#cdbfd0" stroke-width="0.75" stroke-linejoin="round" stroke-linecap="round" />
<polyline points="139.1,36.9 136.6,27.5 138.1,13.2 136.3,5.6 138.7,-7.0" fill="none" stroke="#cdbfd0" stroke-width="0.75" stroke-linejoin="round" stroke-linecap="round" />
<polyline points="138.7,-7.0 131.4,-5.6 123.5,0.9 115.0,2.2 109.0,4.8" fill="none" stroke="#cdbfd0" stroke-width="0.75" stroke-linejoin="round" stroke-linecap="round" />
<polyline points="562.8,-26.5 545.2,-21.8 532.4,-12.8 513.7,-9.7 499.3,-1.3" fill="none" stroke="#cdbfd0" stroke-width="0.75" stroke-linejoin="round" stroke-linecap="round" />
<polyline points="591.2,60.0 576.6,52.0 566.1,41.8 552.1,35.0 541.0,25.9" fill="none" stroke="#cdbfd0" stroke-width="0.75" stroke-linejoin="round" stroke-linecap="round" />
<polyline points="562.8,-26.5 558.4,-11.8 552.3,-1.7 544.3,14.0 541.0,25.9" fill="none" stroke="#cdbfd0" stroke-width="0.75" stroke-linejoin="round" stroke-linecap="round" />
<polyline points="586.9,113.9 581.7,131.4 580.1,147.5 579.7,161.7 574.8,177.7" fill="none" stroke="#cdbfd0" stroke-width="0.75" stroke-linejoin="round" stroke-linecap="round" />
<polyline points="219.0,234.6 223.7,234.9 226.3,234.3 225.6,237.6 229.9,236.4" fill="none" stroke="#cdbfd0" stroke-width="0.75" stroke-linejoin="round" stroke-linecap="round" />
<polyline points="292.0,282.6 279.2,269.2 267.0,259.6 253.0,247.6 243.3,235.8" fill="none" stroke="#cdbfd0" stroke-width="0.75" stroke-linejoin="round" stroke-linecap="round" />
<polyline points="229.9,236.4 233.0,236.3 234.7,237.1 241.6,237.7 243.3,235.8" fill="none" stroke="#cdbfd0" stroke-width="0.75" stroke-linejoin="round" stroke-linecap="round" />
<polyline points="359.0,218.4 355.3,219.7 352.7,220.1 348.2,221.0 347.5,219.3" fill="none" stroke="#cdbfd0" stroke-width="0.75" stroke-linejoin="round" stroke-linecap="round" />
<polyline points="359.0,218.4 365.3,221.4 367.1,224.5 371.2,224.9 375.1,230.2" fill="none" stroke="#cdbfd0" stroke-width="0.75" stroke-linejoin="round" stroke-linecap="round" />
<polyline points="351.1,269.1 352.1,257.1 346.8,245.8 345.8,238.7 345.6,226.4" fill="none" stroke="#cdbfd0" stroke-width="0.75" stroke-linejoin="round" stroke-linecap="round" />
<polyline points="375.1,230.2 374.6,232.6 379.8,237.5 378.3,244.0 382.6,247.9" fill="none" stroke="#cdbfd0" stroke-width="0.75" stroke-linejoin="round" stroke-linecap="round" />
<polyline points="347.5,219.3 347.4,221.2 347.6,220.9 348.0,225.8 345.6,226.4" fill="none" stroke="#cdbfd0" stroke-width="0.75" stroke-linejoin="round" stroke-linecap="round" />
<polyline points="292.0,282.6 290.6,278.7 293.7,278.5 293.6,274.6 295.6,274.5" fill="none" stroke="#cdbfd0" stroke-width="0.75" stroke-linejoin="round" stroke-linecap="round" />
<polyline points="345.6,226.4 332.6,236.6 321.1,252.3 306.3,262.8 295.6,274.5" fill="none" stroke="#cdbfd0" stroke-width="0.75" stroke-linejoin="round" stroke-linecap="round" />
<polyline points="430.8,223.7 429.2,224.5 433.1,221.6 430.5,223.1 431.0,220.6" fill="none" stroke="#cdbfd0" stroke-width="0.75" stroke-linejoin="round" stroke-linecap="round" />
<polyline points="375.1,230.2 387.9,226.1 402.7,224.4 412.4,218.1 425.9,215.8" fill="none" stroke="#cdbfd0" stroke-width="0.75" stroke-linejoin="round" stroke-linecap="round" />
<polyline points="425.9,215.8 426.3,216.7 430.8,219.7 431.7,221.0 431.0,220.6" fill="none" stroke="#cdbfd0" stroke-width="0.75" stroke-linejoin="round" stroke-linecap="round" />
<polyline points="510.2,236.3 507.0,236.8 510.6,239.4 506.1,237.3 506.4,238.2" fill="none" stroke="#cdbfd0" stroke-width="0.75" stroke-linejoin="round" stroke-linecap="round" />
<polyline points="506.8,263.0 506.8,261.4 505.6,258.9 504.4,260.1 504.1,259.1" fill="none" stroke="#cdbfd0" stroke-width="0.75" stroke-linejoin="round" stroke-linecap="round" />
<polyline points="321.7,32.7 318.9,31.0 321.2,26.7 319.6,21.9 318.0,16.3" fill="none" stroke="#cdbfd0" stroke-width="0.75" stroke-linejoin="round" stroke-linecap="round" />
<polyline points="321.7,32.7 325.2,36.3 322.5,36.8 325.2,38.7 328.0,39.4" fill="none" stroke="#cdbfd0" stroke-width="0.75" stroke-linejoin="round" stroke-linecap="round" />
<polyline points="371.4,41.1 364.8,43.4 362.6,45.9 353.8,47.6 349.5,49.6" fill="none" stroke="#cdbfd0" stroke-width="0.75" stroke-linejoin="round" stroke-linecap="round" />
<polyline points="318.0,16.3 320.4,15.6 322.4,9.5 327.0,5.6 329.0,4.6" fill="none" stroke="#cdbfd0" stroke-width="0.75" stroke-linejoin="round" stroke-linecap="round" />
<polyline points="328.0,39.4 333.8,44.3 338.8,43.3 344.0,47.2 349.5,49.6" fill="none" stroke="#cdbfd0" stroke-width="0.75" stroke-linejoin="round" stroke-linecap="round" />
<polyline points="139.1,36.9 142.9,33.8 148.4,33.4 155.4,32.2 161.4,32.0" fill="none" stroke="#cdbfd0" stroke-width="0.75" stroke-linejoin="round" stroke-linecap="round" />
<polyline points="183.6,-15.6 178.8,-7.8 176.8,5.8 173.6,14.3 169.5,23.8" fill="none" stroke="#cdbfd0" stroke-width="0.75" stroke-linejoin="round" stroke-linecap="round" />
<polyline points="161.4,32.0 164.2,28.5 166.5,27.7 167.7,26.4 169.5,23.8" fill="none" stroke="#cdbfd0" stroke-width="0.75" stroke-linejoin="round" stroke-linecap="round" />
<polyline points="317.1,92.6 315.4,89.9 312.6,87.7 312.4,86.7 310.7,85.5" fill="none" stroke="#cdbfd0" stroke-width="0.75" stroke-linejoin="round" stroke-linecap="round" />
<polyline points="317.1,92.6 321.4,89.5 324.1,93.1 327.3,90.9 332.5,89.9" fill="none" stroke="#cdbfd0" stroke-width="0.75" stroke-linejoin="round" stroke-linecap="round" />
<polyline points="332.5,89.9 336.7,78.7 343.4,68.7 346.6,57.9 349.5,49.6" fill="none" stroke="#cdbfd0" stroke-width="0.75" stroke-linejoin="round" stroke-linecap="round" />
<polyline points="328.0,39.4 319.3,47.6 314.6,49.8 307.8,58.0 301.9,64.6" fill="none" stroke="#cdbfd0" stroke-width="0.75" stroke-linejoin="round" stroke-linecap="round" />
<polyline points="301.9,64.6 305.2,67.9 304.9,77.3 309.7,78.5 310.7,85.5" fill="none" stroke="#cdbfd0" stroke-width="0.75" stroke-linejoin="round" stroke-linecap="round" />
<polyline points="318.0,16.3 307.1,10.4 298.7,6.6 289.6,2.5 277.8,-4.3" fill="none" stroke="#cdbfd0" stroke-width="0.75" stroke-linejoin="round" stroke-linecap="round" />
<polyline points="273.3,-16.6 274.5,-12.4 276.8,-9.2 276.5,-5.9 277.8,-4.3" fill="none" stroke="#cdbfd0" stroke-width="0.75" stroke-linejoin="round" stroke-linecap="round" />
<polyline points="190.4,42.4 190.1,49.1 185.8,53.4 183.8,57.5 184.8,60.7" fill="none" stroke="#cdbfd0" stroke-width="0.75" stroke-linejoin="round" stroke-linecap="round" />
<polyline points="190.4,42.4 185.6,37.7 182.3,33.5 174.3,29.9 169.5,23.8" fill="none" stroke="#cdbfd0" stroke-width="0.75" stroke-linejoin="round" stroke-linecap="round" />
<polyline points="161.4,32.0 166.4,39.7 167.0,46.0 170.5,54.5 173.8,60.5" fill="none" stroke="#cdbfd0" stroke-width="0.75" stroke-linejoin="round" stroke-linecap="round" />
<polyline points="173.8,60.5 175.5,60.0 179.6,60.0 181.2,62.1 184.8,60.7" fill="none" stroke="#cdbfd0" stroke-width="0.75" stroke-linejoin="round" stroke-linecap="round" />
<polyline points="138.4,79.4 141.7,79.8 141.2,78.6 142.1,78.7 144.6,80.9" fill="none" stroke="#cdbfd0" stroke-width="0.75" stroke-linejoin="round" stroke-linecap="round" />
<polyline points="173.8,60.5 166.9,66.0 157.1,72.8 151.0,77.5 144.6,80.9" fill="none" stroke="#cdbfd0" stroke-width="0.75" stroke-linejoin="round" stroke-linecap="round" />
<polyline points="262.5,84.7 267.1,91.8 266.8,94.0 273.3,96.7 274.2,104.0" fill="none" stroke="#cdbfd0" stroke-width="0.75" stroke-linejoin="round" stroke-linecap="round" />
<polyline points="262.5,84.7 256.3,89.4 254.6,95.5 252.0,98.0 246.7,102.1" fill="none" stroke="#cdbfd0" stroke-width="0.75" stroke-linejoin="round" stroke-linecap="round" />
<polyline points="274.2,104.0 270.2,110.6 261.4,118.1 254.4,123.0 248.5,130.3" fill="none" stroke="#cdbfd0" stroke-width="0.75" stroke-linejoin="round" stroke-linecap="round" />
<polyline points="246.7,102.1 247.6,108.4 249.8,117.1 248.2,121.2 248.5,130.3" fill="none" stroke="#cdbfd0" stroke-width="0.75" stroke-linejoin="round" stroke-linecap="round" />
<polyline points="302.4,112.5 305.5,107.0 310.1,102.9 315.4,99.9 317.1,92.6" fill="none" stroke="#cdbfd0" stroke-width="0.75" stroke-linejoin="round" stroke-linecap="round" />
<polyline points="302.4,112.5 300.7,112.7 299.7,116.0 296.6,114.2 295.6,114.6" fill="none" stroke="#cdbfd0" stroke-width="0.75" stroke-linejoin="round" stroke-linecap="round" />
<polyline points="262.2,80.4 264.3,78.3 262.4,81.9 265.5,79.2 264.4,78.7" fill="none" stroke="#cdbfd0" stroke-width="0.75" stroke-linejoin="round" stroke-linecap="round" />
<polyline points="262.2,80.4 260.3,83.4 263.3,84.2 264.8,85.6 262.5,84.7" fill="none" stroke="#cdbfd0" stroke-width="0.75" stroke-linejoin="round" stroke-linecap="round" />
<polyline points="295.6,114.6 289.9,110.2 283.8,109.3 279.6,105.1 274.2,104.0" fill="none" stroke="#cdbfd0" stroke-width="0.75" stroke-linejoin="round" stroke-linecap="round" />
<polyline points="264.4,78.7 274.4,81.0 288.1,81.3 301.6,84.5 310.7,85.5" fill="none" stroke="#cdbfd0" stroke-width="0.75" stroke-linejoin="round" stroke-linecap="round" />
<polyline points="295.6,114.6 289.4,121.0 289.2,127.2 284.8,132.5 280.0,141.7" fill="none" stroke="#cdbfd0" stroke-width="0.75" stroke-linejoin="round" stroke-linecap="round" />
<polyline points="280.0,141.7 273.3,146.4 269.0,148.5 261.4,150.5 257.3,153.5" fill="none" stroke="#cdbfd0" stroke-width="0.75" stroke-linejoin="round" stroke-linecap="round" />
<polyline points="248.5,130.3 248.0,131.1 247.7,134.3 248.7,136.4 245.5,138.0" fill="none" stroke="#cdbfd0" stroke-width="0.75" stroke-linejoin="round" stroke-linecap="round" />
<polyline points="257.3,153.5 253.9,147.7 249.7,147.0 246.5,139.9 245.5,138.0" fill="none" stroke="#cdbfd0" stroke-width="0.75" stroke-linejoin="round" stroke-linecap="round" />
<polyline points="125.6,250.6 130.5,250.1 140.2,249.8 146.6,246.4 151.6,247.9" fill="none" stroke="#cdbfd0" stroke-width="0.75" stroke-linejoin="round" stroke-linecap="round" />
<polyline points="151.6,247.9 153.2,252.0 158.7,254.6 162.9,254.6 167.7,259.1" fill="none" stroke="#cdbfd0" stroke-width="0.75" stroke-linejoin="round" stroke-linecap="round" />
<polyline points="219.0,234.6 214.7,231.1 214.8,232.1 209.0,230.0 206.7,228.8" fill="none" stroke="#cdbfd0" stroke-width="0.75" stroke-linejoin="round" stroke-linecap="round" />
<polyline points="167.7,259.1 176.9,249.3 189.1,244.3 199.2,236.0 206.7,228.8" fill="none" stroke="#cdbfd0" stroke-width="0.75" stroke-linejoin="round" stroke-linecap="round" />
<polyline points="275.6,195.8 271.5,187.0 263.9,182.9 263.2,172.2 256.6,165.6" fill="none" stroke="#cdbfd0" stroke-width="0.75" stroke-linejoin="round" stroke-linecap="round" />
<polyline points="275.6,195.8 269.6,207.4 258.5,216.3 253.7,225.7 243.3,235.8" fill="none" stroke="#cdbfd0" stroke-width="0.75" stroke-linejoin="round" stroke-linecap="round" />
<polyline points="236.9,173.4 244.0,170.2 246.2,170.6 250.3,166.6 256.6,165.6" fill="none" stroke="#cdbfd0" stroke-width="0.75" stroke-linejoin="round" stroke-linecap="round" />
<polyline points="236.9,173.4 228.1,179.1 217.0,183.7 203.3,190.1 194.2,196.6" fill="none" stroke="#cdbfd0" stroke-width="0.75" stroke-linejoin="round" stroke-linecap="round" />
<polyline points="206.7,228.8 202.0,223.1 199.4,213.0 195.4,204.8 194.2,196.6" fill="none" stroke="#cdbfd0" stroke-width="0.75" stroke-linejoin="round" stroke-linecap="round" />
<polyline points="91.6,297.5 76.7,289.4 60.8,280.3 50.3,273.7 34.4,266.7" fill="none" stroke="#cdbfd0" stroke-width="0.75" stroke-linejoin="round" stroke-linecap="round" />
<polyline points="-19.8,259.3 -7.6,259.1 6.1,260.6 18.4,264.1 34.2,264.5" fill="none" stroke="#cdbfd0" stroke-width="0.75" stroke-linejoin="round" stroke-linecap="round" />
<polyline points="34.4,266.7 33.5,264.5 35.3,263.6 33.1,266.8 34.2,264.5" fill="none" stroke="#cdbfd0" stroke-width="0.75" stroke-linejoin="round" stroke-linecap="round" />
<polyline points="34.4,262.2 32.6,262.3 36.2,264.4 32.8,262.6 34.6,263.7" fill="none" stroke="#cdbfd0" stroke-width="0.75" stroke-linejoin="round" stroke-linecap="round" />
<polyline points="34.2,264.5 35.4,263.7 36.7,262.7 36.7,263.9 34.6,263.7" fill="none" stroke="#cdbfd0" stroke-width="0.75" stroke-linejoin="round" stroke-linecap="round" />
<polyline points="133.6,170.8 129.0,171.4 125.2,173.4 122.6,175.2 120.5,174.0" fill="none" stroke="#cdbfd0" stroke-width="0.75" stroke-linejoin="round" stroke-linecap="round" />
<polyline points="133.6,170.8 136.2,165.3 136.7,161.8 138.7,158.3 142.3,151.6" fill="none" stroke="#cdbfd0" stroke-width="0.75" stroke-linejoin="round" stroke-linecap="round" />
<polyline points="103.0,136.8 105.2,134.1 111.4,130.1 116.6,128.0 119.4,125.8" fill="none" stroke="#cdbfd0" stroke-width="0.75" stroke-linejoin="round" stroke-linecap="round" />
<polyline points="119.4,125.8 125.9,132.6 129.9,138.2 134.5,143.6 142.3,151.6" fill="none" stroke="#cdbfd0" stroke-width="0.75" stroke-linejoin="round" stroke-linecap="round" />
<polyline points="748.2,73.7 760.9,69.0 770.8,64.1 781.2,61.5 791.7,58.4" fill="none" stroke="#cdbfd0" stroke-width="0.75" stroke-linejoin="round" stroke-linecap="round" />
<polyline points="748.2,73.7 746.6,63.0 742.8,53.4 741.9,42.8 741.6,35.0" fill="none" stroke="#cdbfd0" stroke-width="0.75" stroke-linejoin="round" stroke-linecap="round" />
<polyline points="741.6,35.0 755.2,39.8 766.2,48.7 780.6,54.5 791.7,58.4" fill="none" stroke="#cdbfd0" stroke-width="0.75" stroke-linejoin="round" stroke-linecap="round" />
<polyline points="796.0,59.2 796.7,57.1 792.7,56.4 793.7,59.4 791.7,58.4" fill="none" stroke="#cdbfd0" stroke-width="0.75" stroke-linejoin="round" stroke-linecap="round" />
<polyline points="748.6,88.8 747.8,84.6 749.2,82.2 747.1,79.2 748.2,73.7" fill="none" stroke="#cdbfd0" stroke-width="0.75" stroke-linejoin="round" stroke-linecap="round" />
<polyline points="800.1,40.0 784.3,38.1 768.3,33.0 756.8,33.6 739.7,29.9" fill="none" stroke="#cdbfd0" stroke-width="0.75" stroke-linejoin="round" stroke-linecap="round" />
<polyline points="734.1,6.1 735.3,7.6 732.0,12.0 732.9,16.4 734.5,21.2" fill="none" stroke="#cdbfd0" stroke-width="0.75" stroke-linejoin="round" stroke-linecap="round" />
<polyline points="734.5,21.2 735.2,21.1 736.1,26.2 736.8,29.4 739.7,29.9" fill="none" stroke="#cdbfd0" stroke-width="0.75" stroke-linejoin="round" stroke-linecap="round" />
<polyline points="807.6,44.4 806.1,44.4 802.6,41.9 802.9,40.4 800.1,40.0" fill="none" stroke="#cdbfd0" stroke-width="0.75" stroke-linejoin="round" stroke-linecap="round" />
<polyline points="664.8,9.9 679.6,10.6 700.8,6.9 714.5,8.8 734.1,6.1" fill="none" stroke="#cdbfd0" stroke-width="0.75" stroke-linejoin="round" stroke-linecap="round" />
<polyline points="741.6,35.0 741.7,31.5 739.4,30.5 741.6,29.7 739.7,29.9" fill="none" stroke="#cdbfd0" stroke-width="0.75" stroke-linejoin="round" stroke-linecap="round" />
<polyline points="704.1,48.4 713.8,42.8 717.3,35.8 726.4,29.2 734.5,21.2" fill="none" stroke="#cdbfd0" stroke-width="0.75" stroke-linejoin="round" stroke-linecap="round" />
<polyline points="526.8,40.6 518.2,39.0 504.3,41.9 495.7,41.4 485.8,38.7" fill="none" stroke="#cdbfd0" stroke-width="0.75" stroke-linejoin="round" stroke-linecap="round" />
<polyline points="526.8,40.6 529.2,39.5 531.3,36.6 530.8,31.5 532.5,31.4" fill="none" stroke="#cdbfd0" stroke-width="0.75" stroke-linejoin="round" stroke-linecap="round" />
<polyline points="532.5,31.4 524.3,24.4 514.1,20.3 503.0,12.8 495.7,4.9" fill="none" stroke="#cdbfd0" stroke-width="0.75" stroke-linejoin="round" stroke-linecap="round" />
<polyline points="571.3,88.0 558.3,86.0 551.4,80.8 539.4,81.4 528.5,76.1" fill="none" stroke="#cdbfd0" stroke-width="0.75" stroke-linejoin="round" stroke-linecap="round" />
<polyline points="541.0,25.9 539.5,27.5 535.5,26.5 533.9,29.6 532.5,31.4" fill="none" stroke="#cdbfd0" stroke-width="0.75" stroke-linejoin="round" stroke-linecap="round" />
<polyline points="528.5,76.1 525.7,73.1 524.1,73.0 525.5,68.6 523.4,67.9" fill="none" stroke="#cdbfd0" stroke-width="0.75" stroke-linejoin="round" stroke-linecap="round" />
<polyline points="523.4,67.9 522.9,61.1 524.8,56.4 525.2,46.4 526.8,40.6" fill="none" stroke="#cdbfd0" stroke-width="0.75" stroke-linejoin="round" stroke-linecap="round" />
<polyline points="573.6,105.7 571.3,106.5 571.7,108.3 572.3,108.5 571.5,107.8" fill="none" stroke="#cdbfd0" stroke-width="0.75" stroke-linejoin="round" stroke-linecap="round" />
<polyline points="571.5,107.8 569.4,112.9 567.6,120.1 561.8,122.8 561.1,129.2" fill="none" stroke="#cdbfd0" stroke-width="0.75" stroke-linejoin="round" stroke-linecap="round" />
<polyline points="368.4,162.4 361.1,156.4 356.7,146.4 350.3,141.1 345.5,134.1" fill="none" stroke="#cdbfd0" stroke-width="0.75" stroke-linejoin="round" stroke-linecap="round" />
<polyline points="368.4,162.4 373.4,161.6 377.6,161.6 387.9,166.1 391.2,165.6" fill="none" stroke="#cdbfd0" stroke-width="0.75" stroke-linejoin="round" stroke-linecap="round" />
<polyline points="345.5,134.1 344.8,131.7 350.7,127.5 347.7,123.6 351.0,120.2" fill="none" stroke="#cdbfd0" stroke-width="0.75" stroke-linejoin="round" stroke-linecap="round" />
<polyline points="352.6,120.2 351.9,118.6 352.0,117.7 353.5,120.9 351.0,120.2" fill="none" stroke="#cdbfd0" stroke-width="0.75" stroke-linejoin="round" stroke-linecap="round" />
<polyline points="352.6,120.2 363.3,130.7 373.5,135.6 381.6,143.3 393.0,153.4" fill="none" stroke="#cdbfd0" stroke-width="0.75" stroke-linejoin="round" stroke-linecap="round" />
<polyline points="393.0,153.4 390.2,157.9 393.8,158.5 390.1,163.3 391.2,165.6" fill="none" stroke="#cdbfd0" stroke-width="0.75" stroke-linejoin="round" stroke-linecap="round" />
<polyline points="359.0,218.4 370.3,209.7 376.5,198.2 389.4,187.1 397.4,175.0" fill="none" stroke="#cdbfd0" stroke-width="0.75" stroke-linejoin="round" stroke-linecap="round" />
<polyline points="425.9,215.8 420.1,205.1 417.7,196.6 410.5,188.6 406.2,179.2" fill="none" stroke="#cdbfd0" stroke-width="0.75" stroke-linejoin="round" stroke-linecap="round" />
<polyline points="397.4,175.0 398.9,177.7 400.5,174.8 404.4,178.8 406.2,179.2" fill="none" stroke="#cdbfd0" stroke-width="0.75" stroke-linejoin="round" stroke-linecap="round" />
<polyline points="275.6,195.8 280.8,197.1 284.8,198.6 286.3,196.6 289.9,196.9" fill="none" stroke="#cdbfd0" stroke-width="0.75" stroke-linejoin="round" stroke-linecap="round" />
<polyline points="295.6,274.5 294.9,266.3 298.1,258.1 299.8,251.3 299.9,245.9" fill="none" stroke="#cdbfd0" stroke-width="0.75" stroke-linejoin="round" stroke-linecap="round" />
<polyline points="289.9,196.9 292.1,211.5 292.8,219.1 297.1,232.1 299.9,245.9" fill="none" stroke="#cdbfd0" stroke-width="0.75" stroke-linejoin="round" stroke-linecap="round" />
<polyline points="347.5,219.3 345.7,214.5 343.4,216.4 340.2,211.8 335.8,209.8" fill="none" stroke="#cdbfd0" stroke-width="0.75" stroke-linejoin="round" stroke-linecap="round" />
<polyline points="299.9,245.9 307.8,237.7 318.0,227.5 326.1,218.5 335.8,209.8" fill="none" stroke="#cdbfd0" stroke-width="0.75" stroke-linejoin="round" stroke-linecap="round" />
<polyline points="523.4,67.9 518.5,70.7 513.9,68.7 505.1,71.3 500.4,72.9" fill="none" stroke="#cdbfd0" stroke-width="0.75" stroke-linejoin="round" stroke-linecap="round" />
<polyline points="468.9,61.9 477.1,63.9 483.2,65.3 491.7,69.9 500.4,72.9" fill="none" stroke="#cdbfd0" stroke-width="0.75" stroke-linejoin="round" stroke-linecap="round" />
<polyline points="489.6,234.2 487.5,242.8 483.5,250.1 477.5,256.2 472.7,261.4" fill="none" stroke="#cdbfd0" stroke-width="0.75" stroke-linejoin="round" stroke-linecap="round" />
<polyline points="469.0,214.9 471.8,214.3 474.0,218.0 475.9,216.9 478.3,216.5" fill="none" stroke="#cdbfd0" stroke-width="0.75" stroke-linejoin="round" stroke-linecap="round" />
<polyline points="472.7,261.4 471.4,263.7 469.4,260.5 472.2,262.1 470.8,262.7" fill="none" stroke="#cdbfd0" stroke-width="0.75" stroke-linejoin="round" stroke-linecap="round" />
<polyline points="470.8,262.7 468.2,263.1 469.0,262.2 468.6,261.5 468.4,260.9" fill="none" stroke="#cdbfd0" stroke-width="0.75" stroke-linejoin="round" stroke-linecap="round" />
<polyline points="504.1,259.1 496.5,259.2 486.4,258.7 482.5,261.1 472.7,261.4" fill="none" stroke="#cdbfd0" stroke-width="0.75" stroke-linejoin="round" stroke-linecap="round" />
<polyline points="508.8,194.2 499.9,197.8 493.7,204.1 485.9,211.2 478.3,216.5" fill="none" stroke="#cdbfd0" stroke-width="0.75" stroke-linejoin="round" stroke-linecap="round" />
<polyline points="457.4,210.6 458.3,211.7 463.6,210.7 465.6,211.7 469.0,214.9" fill="none" stroke="#cdbfd0" stroke-width="0.75" stroke-linejoin="round" stroke-linecap="round" />
<polyline points="434.9,244.4 443.5,249.6 453.0,250.7 462.5,257.9 468.4,260.9" fill="none" stroke="#cdbfd0" stroke-width="0.75" stroke-linejoin="round" stroke-linecap="round" />
<polyline points="471.6,278.4 473.1,273.9 469.6,272.8 471.3,268.0 470.8,262.7" fill="none" stroke="#cdbfd0" stroke-width="0.75" stroke-linejoin="round" stroke-linecap="round" />
<polyline points="779.7,228.0 772.7,235.7 767.0,239.3 763.4,244.5 758.8,253.2" fill="none" stroke="#cdbfd0" stroke-width="0.75" stroke-linejoin="round" stroke-linecap="round" />
<polyline points="779.7,228.0 774.2,223.6 766.7,223.1 761.2,221.1 755.6,216.2" fill="none" stroke="#cdbfd0" stroke-width="0.75" stroke-linejoin="round" stroke-linecap="round" />
<polyline points="758.8,253.2 751.7,248.1 743.7,241.3 737.6,230.6 728.0,225.3" fill="none" stroke="#cdbfd0" stroke-width="0.75" stroke-linejoin="round" stroke-linecap="round" />
<polyline points="755.6,216.2 750.0,217.1 743.2,220.5 736.6,219.4 728.2,223.0" fill="none" stroke="#cdbfd0" stroke-width="0.75" stroke-linejoin="round" stroke-linecap="round" />
<polyline points="728.2,223.0 727.5,224.8 730.3,225.3 725.8,225.2 728.0,225.3" fill="none" stroke="#cdbfd0" stroke-width="0.75" stroke-linejoin="round" stroke-linecap="round" />
<polyline points="782.3,167.7 773.6,180.1 770.4,190.0 764.4,204.9 755.6,216.2" fill="none" stroke="#cdbfd0" stroke-width="0.75" stroke-linejoin="round" stroke-linecap="round" />
<polyline points="798.0,207.9 793.7,211.4 791.6,219.6 789.1,220.9 785.6,227.8" fill="none" stroke="#cdbfd0" stroke-width="0.75" stroke-linejoin="round" stroke-linecap="round" />
<polyline points="785.6,227.8 781.8,225.9 784.2,226.3 781.5,226.9 779.7,228.0" fill="none" stroke="#cdbfd0" stroke-width="0.75" stroke-linejoin="round" stroke-linecap="round" />
<polyline points="723.0,214.5 725.2,216.0 723.8,220.6 727.1,221.9 728.2,223.0" fill="none" stroke="#cdbfd0" stroke-width="0.75" stroke-linejoin="round" stroke-linecap="round" />
<polyline points="708.4,261.1 714.9,254.4 715.8,242.4 721.4,234.2 728.0,225.3" fill="none" stroke="#cdbfd0" stroke-width="0.75" stroke-linejoin="round" stroke-linecap="round" />
<polyline points="821.3,254.8 822.7,256.6 818.0,253.8 821.4,256.6 819.4,255.9" fill="none" stroke="#cdbfd0" stroke-width="0.75" stroke-linejoin="round" stroke-linecap="round" />
<polyline points="785.6,227.8 788.2,233.2 790.1,240.6 794.4,246.2 798.0,249.9" fill="none" stroke="#cdbfd0" stroke-width="0.75" stroke-linejoin="round" stroke-linecap="round" />
<polyline points="798.0,249.9 803.9,249.3 807.8,251.5 816.0,254.9 819.4,255.9" fill="none" stroke="#cdbfd0" stroke-width="0.75" stroke-linejoin="round" stroke-linecap="round" />
<polyline points="817.0,269.9 815.3,264.8 817.5,262.8 819.2,258.9 819.4,255.9" fill="none" stroke="#cdbfd0" stroke-width="0.75" stroke-linejoin="round" stroke-linecap="round" />
<polyline points="317.8,134.5 322.4,132.6 328.9,134.9 331.4,136.1 339.1,137.0" fill="none" stroke="#cdbfd0" stroke-width="0.75" stroke-linejoin="round" stroke-linecap="round" />
<polyline points="317.8,134.5 318.0,137.9 311.5,146.8 309.8,150.5 308.7,157.4" fill="none" stroke="#cdbfd0" stroke-width="0.75" stroke-linejoin="round" stroke-linecap="round" />
<polyline points="339.1,137.0 335.5,147.6 332.3,160.8 330.6,174.9 324.8,184.3" fill="none" stroke="#cdbfd0" stroke-width="0.75" stroke-linejoin="round" stroke-linecap="round" />
<polyline points="308.7,157.4 308.9,165.6 315.2,175.1 317.9,181.9 319.1,189.2" fill="none" stroke="#cdbfd0" stroke-width="0.75" stroke-linejoin="round" stroke-linecap="round" />
<polyline points="324.8,184.3 324.1,184.8 321.0,188.2 322.6,190.2 319.3,189.2" fill="none" stroke="#cdbfd0" stroke-width="0.75" stroke-linejoin="round" stroke-linecap="round" />
<polyline points="319.3,189.2 320.2,188.2 320.5,190.4 319.2,189.9 319.1,189.2" fill="none" stroke="#cdbfd0" stroke-width="0.75" stroke-linejoin="round" stroke-linecap="round" />
<polyline points="302.4,112.5 305.5,118.2 309.7,121.3 313.2,128.1 317.8,134.5" fill="none" stroke="#cdbfd0" stroke-width="0.75" stroke-linejoin="round" stroke-linecap="round" />
<polyline points="345.5,134.1 346.3,134.7 341.6,134.3 339.4,135.5 339.1,137.0" fill="none" stroke="#cdbfd0" stroke-width="0.75" stroke-linejoin="round" stroke-linecap="round" />
<polyline points="338.6,95.0 339.9,98.8 346.7,107.4 347.6,114.2 351.0,120.2" fill="none" stroke="#cdbfd0" stroke-width="0.75" stroke-linejoin="round" stroke-linecap="round" />
<polyline points="338.6,95.0 336.1,92.1 333.4,91.5 333.0,92.3 332.5,89.9" fill="none" stroke="#cdbfd0" stroke-width="0.75" stroke-linejoin="round" stroke-linecap="round" />
<polyline points="280.0,141.7 287.4,147.8 293.5,151.7 301.9,151.4 308.7,157.4" fill="none" stroke="#cdbfd0" stroke-width="0.75" stroke-linejoin="round" stroke-linecap="round" />
<polyline points="368.4,162.4 355.9,168.3 349.0,172.6 337.0,178.5 324.8,184.3" fill="none" stroke="#cdbfd0" stroke-width="0.75" stroke-linejoin="round" stroke-linecap="round" />
<polyline points="257.3,153.5 258.9,154.4 256.9,161.5 255.7,161.3 256.6,165.6" fill="none" stroke="#cdbfd0" stroke-width="0.75" stroke-linejoin="round" stroke-linecap="round" />
<polyline points="289.9,196.9 294.8,193.3 303.3,194.1 310.4,190.6 319.1,189.2" fill="none" stroke="#cdbfd0" stroke-width="0.75" stroke-linejoin="round" stroke-linecap="round" />
<polyline points="391.2,165.6 391.2,168.5 396.1,171.1 394.3,173.9 397.4,175.0" fill="none" stroke="#cdbfd0" stroke-width="0.75" stroke-linejoin="round" stroke-linecap="round" />
<polyline points="335.8,209.8 334.0,205.2 325.5,201.1 325.3,193.6 319.3,189.2" fill="none" stroke="#cdbfd0" stroke-width="0.75" stroke-linejoin="round" stroke-linecap="round" />
<polyline points="371.4,41.1 372.7,42.9 377.7,49.7 381.3,53.3 383.6,54.5" fill="none" stroke="#cdbfd0" stroke-width="0.75" stroke-linejoin="round" stroke-linecap="round" />
<polyline points="338.6,95.0 344.2,93.3 353.9,94.1 359.2,93.3 366.7,91.6" fill="none" stroke="#cdbfd0" stroke-width="0.75" stroke-linejoin="round" stroke-linecap="round" />
<polyline points="383.6,54.5 378.6,61.6 374.7,70.8 371.6,81.5 366.7,91.6" fill="none" stroke="#cdbfd0" stroke-width="0.75" stroke-linejoin="round" stroke-linecap="round" />
<polyline points="352.6,120.2 362.8,118.5 372.0,115.7 381.0,115.9 393.8,111.7" fill="none" stroke="#cdbfd0" stroke-width="0.75" stroke-linejoin="round" stroke-linecap="round" />
<polyline points="366.7,91.6 373.8,99.1 378.0,102.2 388.1,105.8 393.8,111.7" fill="none" stroke="#cdbfd0" stroke-width="0.75" stroke-linejoin="round" stroke-linecap="round" />
<polyline points="294.5,59.7 286.9,59.8 281.6,64.7 275.8,66.8 272.3,67.0" fill="none" stroke="#cdbfd0" stroke-width="0.75" stroke-linejoin="round" stroke-linecap="round" />
<polyline points="294.5,59.7 293.5,55.0 293.7,50.2 293.4,45.5 292.0,40.1" fill="none" stroke="#cdbfd0" stroke-width="0.75" stroke-linejoin="round" stroke-linecap="round" />
<polyline points="272.3,67.0 270.2,59.7 268.7,51.0 270.1,42.8 267.6,32.9" fill="none" stroke="#cdbfd0" stroke-width="0.75" stroke-linejoin="round" stroke-linecap="round" />
<polyline points="292.0,40.1 286.5,38.1 285.3,33.1 277.2,30.1 273.8,26.6" fill="none" stroke="#cdbfd0" stroke-width="0.75" stroke-linejoin="round" stroke-linecap="round" />
<polyline points="273.8,26.6 274.4,26.3 268.2,29.6 269.9,32.7 267.6,32.9" fill="none" stroke="#cdbfd0" stroke-width="0.75" stroke-linejoin="round" stroke-linecap="round" />
<polyline points="264.4,78.7 265.7,78.2 267.0,74.1 268.2,67.6 272.3,67.0" fill="none" stroke="#cdbfd0" stroke-width="0.75" stroke-linejoin="round" stroke-linecap="round" />
<polyline points="301.9,64.6 298.2,61.2 298.2,62.4 294.7,63.1 294.5,59.7" fill="none" stroke="#cdbfd0" stroke-width="0.75" stroke-linejoin="round" stroke-linecap="round" />
<polyline points="321.7,32.7 313.6,32.8 305.2,37.6 301.5,36.6 292.0,40.1" fill="none" stroke="#cdbfd0" stroke-width="0.75" stroke-linejoin="round" stroke-linecap="round" />
<polyline points="277.8,-4.3 274.4,4.9 274.5,13.6 274.8,19.6 273.8,26.6" fill="none" stroke="#cdbfd0" stroke-width="0.75" stroke-linejoin="round" stroke-linecap="round" />
<polyline points="190.4,42.4 195.0,40.9 201.0,35.5 208.5,31.4 211.9,30.4" fill="none" stroke="#cdbfd0" stroke-width="0.75" stroke-linejoin="round" stroke-linecap="round" />
<polyline points="203.4,76.2 199.9,70.2 194.8,68.0 191.3,62.4 184.8,60.7" fill="none" stroke="#cdbfd0" stroke-width="0.75" stroke-linejoin="round" stroke-linecap="round" />
<polyline points="203.4,76.2 208.1,68.1 214.2,63.2 217.2,52.0 220.9,45.8" fill="none" stroke="#cdbfd0" stroke-width="0.75" stroke-linejoin="round" stroke-linecap="round" />
<polyline points="220.9,45.8 217.4,40.7 216.1,36.7 212.7,35.5 211.9,30.4" fill="none" stroke="#cdbfd0" stroke-width="0.75" stroke-linejoin="round" stroke-linecap="round" />
<polyline points="183.6,-15.6 191.5,-10.4 200.3,-4.6 205.3,1.4 212.0,9.3" fill="none" stroke="#cdbfd0" stroke-width="0.75" stroke-linejoin="round" stroke-linecap="round" />
<polyline points="211.9,30.4 213.7,26.9 210.8,21.1 213.6,13.5 212.0,9.3" fill="none" stroke="#cdbfd0" stroke-width="0.75" stroke-linejoin="round" stroke-linecap="round" />
<polyline points="236.9,173.4 229.9,167.7 226.6,160.6 219.5,157.2 212.5,151.1" fill="none" stroke="#cdbfd0" stroke-width="0.75" stroke-linejoin="round" stroke-linecap="round" />
<polyline points="190.4,192.9 191.1,194.2 194.2,193.3 195.2,195.0 194.2,196.6" fill="none" stroke="#cdbfd0" stroke-width="0.75" stroke-linejoin="round" stroke-linecap="round" />
<polyline points="190.4,192.9 191.9,187.6 189.1,180.5 193.4,170.5 191.1,164.4" fill="none" stroke="#cdbfd0" stroke-width="0.75" stroke-linejoin="round" stroke-linecap="round" />
<polyline points="191.1,164.4 194.1,159.1 204.2,155.3 209.2,152.7 212.5,151.1" fill="none" stroke="#cdbfd0" stroke-width="0.75" stroke-linejoin="round" stroke-linecap="round" />
<polyline points="131.7,218.2 142.2,209.7 148.7,206.1 157.6,197.9 169.0,192.2" fill="none" stroke="#cdbfd0" stroke-width="0.75" stroke-linejoin="round" stroke-linecap="round" />
<polyline points="131.7,218.2 137.7,224.0 141.5,229.9 141.2,230.9 147.4,236.8" fill="none" stroke="#cdbfd0" stroke-width="0.75" stroke-linejoin="round" stroke-linecap="round" />
<polyline points="147.4,236.8 154.3,226.6 155.9,214.6 162.3,203.0 169.0,192.2" fill="none" stroke="#cdbfd0" stroke-width="0.75" stroke-linejoin="round" stroke-linecap="round" />
<polyline points="169.0,192.2 167.0,189.8 171.5,191.3 170.9,190.3 169.0,192.2" fill="none" stroke="#cdbfd0" stroke-width="0.75" stroke-linejoin="round" stroke-linecap="round" />
<polyline points="101.2,211.2 108.8,211.1 116.1,213.1 125.0,214.7 131.7,218.2" fill="none" stroke="#cdbfd0" stroke-width="0.75" stroke-linejoin="round" stroke-linecap="round" />
<polyline points="133.6,170.8 143.6,176.2 149.4,180.8 160.1,188.9 169.0,192.2" fill="none" stroke="#cdbfd0" stroke-width="0.75" stroke-linejoin="round" stroke-linecap="round" />
<polyline points="97.8,213.5 97.5,217.7 101.0,226.7 100.3,229.3 99.6,236.1" fill="none" stroke="#cdbfd0" stroke-width="0.75" stroke-linejoin="round" stroke-linecap="round" />
<polyline points="125.6,250.6 117.5,245.8 110.4,241.1 106.1,239.2 99.6,236.1" fill="none" stroke="#cdbfd0" stroke-width="0.75" stroke-linejoin="round" stroke-linecap="round" />
<polyline points="151.6,247.9 150.8,244.4 147.0,243.3 149.2,239.8 147.4,236.8" fill="none" stroke="#cdbfd0" stroke-width="0.75" stroke-linejoin="round" stroke-linecap="round" />
<polyline points="190.4,192.9 185.3,193.7 182.1,194.4 175.4,191.9 169.0,192.2" fill="none" stroke="#cdbfd0" stroke-width="0.75" stroke-linejoin="round" stroke-linecap="round" />
<polyline points="166.5,143.2 171.5,147.6 180.7,152.3 183.8,157.3 190.3,162.6" fill="none" stroke="#cdbfd0" stroke-width="0.75" stroke-linejoin="round" stroke-linecap="round" />
<polyline points="166.5,143.2 163.6,145.4 161.9,143.2 165.5,141.2 162.3,142.1" fill="none" stroke="#cdbfd0" stroke-width="0.75" stroke-linejoin="round" stroke-linecap="round" />
<polyline points="162.3,142.1 159.5,142.3 154.2,142.2 150.2,146.3 148.8,145.4" fill="none" stroke="#cdbfd0" stroke-width="0.75" stroke-linejoin="round" stroke-linecap="round" />
<polyline points="142.3,151.6 145.3,152.1 143.3,149.5 146.3,147.7 148.8,145.4" fill="none" stroke="#cdbfd0" stroke-width="0.75" stroke-linejoin="round" stroke-linecap="round" />
<polyline points="191.1,164.4 191.2,163.1 193.1,161.0 191.7,164.9 190.3,162.6" fill="none" stroke="#cdbfd0" stroke-width="0.75" stroke-linejoin="round" stroke-linecap="round" />
<polyline points="94.6,246.4 92.7,252.2 93.2,255.6 89.5,263.4 86.9,267.5" fill="none" stroke="#cdbfd0" stroke-width="0.75" stroke-linejoin="round" stroke-linecap="round" />
<polyline points="94.6,246.4 85.5,246.2 77.1,244.0 69.7,243.4 60.6,241.2" fill="none" stroke="#cdbfd0" stroke-width="0.75" stroke-linejoin="round" stroke-linecap="round" />
<polyline points="86.9,267.5 79.9,265.5 74.9,260.9 69.2,258.5 62.5,257.1" fill="none" stroke="#cdbfd0" stroke-width="0.75" stroke-linejoin="round" stroke-linecap="round" />
<polyline points="60.6,241.2 63.1,245.0 62.7,249.2 61.9,251.7 62.5,257.1" fill="none" stroke="#cdbfd0" stroke-width="0.75" stroke-linejoin="round" stroke-linecap="round" />
<polyline points="99.6,236.1 96.5,240.8 97.2,241.4 96.0,245.4 94.6,246.4" fill="none" stroke="#cdbfd0" stroke-width="0.75" stroke-linejoin="round" stroke-linecap="round" />
<polyline points="91.6,297.5 89.1,288.4 90.9,282.3 88.8,276.6 86.9,267.5" fill="none" stroke="#cdbfd0" stroke-width="0.75" stroke-linejoin="round" stroke-linecap="round" />
<polyline points="56.4,230.5 59.4,235.0 56.2,235.3 61.2,240.1 60.6,241.2" fill="none" stroke="#cdbfd0" stroke-width="0.75" stroke-linejoin="round" stroke-linecap="round" />
<polyline points="34.6,263.7 39.7,260.3 47.3,258.4 54.8,260.2 62.5,257.1" fill="none" stroke="#cdbfd0" stroke-width="0.75" stroke-linejoin="round" stroke-linecap="round" />
<polyline points="123.6,99.7 123.5,104.2 121.2,108.6 125.6,114.8 122.9,118.6" fill="none" stroke="#cdbfd0" stroke-width="0.75" stroke-linejoin="round" stroke-linecap="round" />
<polyline points="123.6,99.7 129.5,104.8 137.4,111.5 140.3,116.3 148.2,120.6" fill="none" stroke="#cdbfd0" stroke-width="0.75" stroke-linejoin="round" stroke-linecap="round" />
<polyline points="122.9,118.6 127.6,120.8 132.3,122.2 138.1,124.3 144.3,127.1" fill="none" stroke="#cdbfd0" stroke-width="0.75" stroke-linejoin="round" stroke-linecap="round" />
<polyline points="148.2,120.6 144.8,120.7 146.6,121.6 143.6,126.5 144.3,127.1" fill="none" stroke="#cdbfd0" stroke-width="0.75" stroke-linejoin="round" stroke-linecap="round" />
<polyline points="122.6,88.0 121.7,90.1 121.8,95.5 121.3,97.5 123.6,99.7" fill="none" stroke="#cdbfd0" stroke-width="0.75" stroke-linejoin="round" stroke-linecap="round" />
<polyline points="119.4,125.8 122.0,122.5 120.8,123.6 122.6,119.7 122.9,118.6" fill="none" stroke="#cdbfd0" stroke-width="0.75" stroke-linejoin="round" stroke-linecap="round" />
<polyline points="163.1,108.6 157.1,111.4 155.0,115.7 150.9,117.2 148.2,120.6" fill="none" stroke="#cdbfd0" stroke-width="0.75" stroke-linejoin="round" stroke-linecap="round" />
<polyline points="163.1,108.6 164.7,108.4 164.1,104.5 166.1,105.5 166.6,101.6" fill="none" stroke="#cdbfd0" stroke-width="0.75" stroke-linejoin="round" stroke-linecap="round" />
<polyline points="144.6,80.9 148.6,88.4 156.7,90.6 162.0,95.5 166.6,101.6" fill="none" stroke="#cdbfd0" stroke-width="0.75" stroke-linejoin="round" stroke-linecap="round" />
<polyline points="148.8,145.4 145.5,142.1 145.9,136.3 145.4,133.6 144.3,127.1" fill="none" stroke="#cdbfd0" stroke-width="0.75" stroke-linejoin="round" stroke-linecap="round" />
<polyline points="162.3,142.1 163.8,131.4 163.2,125.2 162.7,118.7 163.1,108.6" fill="none" stroke="#cdbfd0" stroke-width="0.75" stroke-linejoin="round" stroke-linecap="round" />
<polyline points="503.7,144.4 506.4,146.4 509.7,150.0 513.4,151.6 515.5,152.4" fill="none" stroke="#cdbfd0" stroke-width="0.75" stroke-linejoin="round" stroke-linecap="round" />
<polyline points="523.7,95.8 525.9,97.8 529.9,104.7 533.0,110.2 534.3,113.2" fill="none" stroke="#cdbfd0" stroke-width="0.75" stroke-linejoin="round" stroke-linecap="round" />
<polyline points="528.5,76.1 525.2,82.6 524.1,83.9 526.2,91.2 523.7,95.8" fill="none" stroke="#cdbfd0" stroke-width="0.75" stroke-linejoin="round" stroke-linecap="round" />
<polyline points="500.4,72.9 493.7,84.5 492.4,94.2 484.6,105.9 482.3,115.6" fill="none" stroke="#cdbfd0" stroke-width="0.75" stroke-linejoin="round" stroke-linecap="round" />
<polyline points="520.1,163.6 521.5,162.4 519.7,156.2 515.8,155.3 515.5,152.4" fill="none" stroke="#cdbfd0" stroke-width="0.75" stroke-linejoin="round" stroke-linecap="round" />
<polyline points="459.7,166.4 469.6,159.7 480.8,154.2 494.5,150.2 503.7,144.4" fill="none" stroke="#cdbfd0" stroke-width="0.75" stroke-linejoin="round" stroke-linecap="round" />
<polyline points="571.5,107.8 561.8,106.9 552.0,112.3 545.1,113.6 534.3,113.2" fill="none" stroke="#cdbfd0" stroke-width="0.75" stroke-linejoin="round" stroke-linecap="round" />
<polyline points="383.6,54.5 385.0,54.2 389.6,57.7 392.1,60.2 395.2,62.2" fill="none" stroke="#cdbfd0" stroke-width="0.75" stroke-linejoin="round" stroke-linecap="round" />
<polyline points="776.4,267.0 779.2,271.5 782.7,275.9 785.6,282.9 785.9,287.8" fill="none" stroke="#cdbfd0" stroke-width="0.75" stroke-linejoin="round" stroke-linecap="round" />
<polyline points="776.4,267.0 770.6,265.4 769.4,265.1 766.0,264.0 762.1,264.2" fill="none" stroke="#cdbfd0" stroke-width="0.75" stroke-linejoin="round" stroke-linecap="round" />
<polyline points="760.0,266.2 759.4,267.1 760.0,266.2 763.1,265.1 762.1,264.2" fill="none" stroke="#cdbfd0" stroke-width="0.75" stroke-linejoin="round" stroke-linecap="round" />
<polyline points="798.0,249.9 792.4,256.3 786.9,260.3 779.6,262.4 776.4,267.0" fill="none" stroke="#cdbfd0" stroke-width="0.75" stroke-linejoin="round" stroke-linecap="round" />
<polyline points="817.0,269.9 809.9,272.1 803.2,276.7 794.1,281.7 785.9,287.8" fill="none" stroke="#cdbfd0" stroke-width="0.75" stroke-linejoin="round" stroke-linecap="round" />
<polyline points="758.8,253.2 761.7,256.3 761.9,258.7 762.1,262.3 762.1,264.2" fill="none" stroke="#cdbfd0" stroke-width="0.75" stroke-linejoin="round" stroke-linecap="round" />
<polyline points="707.2,275.9 719.4,272.0 735.3,269.2 748.9,267.1 760.0,266.2" fill="none" stroke="#cdbfd0" stroke-width="0.75" stroke-linejoin="round" stroke-linecap="round" />
<polyline points="248.3,-3.1 246.0,3.7 249.0,16.8 246.8,24.2 246.9,32.2" fill="none" stroke="#cdbfd0" stroke-width="0.75" stroke-linejoin="round" stroke-linecap="round" />
<polyline points="248.3,-3.1 241.3,1.7 237.6,0.7 228.7,6.1 225.1,7.9" fill="none" stroke="#cdbfd0" stroke-width="0.75" stroke-linejoin="round" stroke-linecap="round" />
<polyline points="225.1,7.9 228.3,15.7 235.0,18.7 241.8,25.2 246.9,32.2" fill="none" stroke="#cdbfd0" stroke-width="0.75" stroke-linejoin="round" stroke-linecap="round" />
<polyline points="273.3,-16.6 267.4,-15.0 262.9,-10.7 256.3,-8.2 248.3,-3.1" fill="none" stroke="#cdbfd0" stroke-width="0.75" stroke-linejoin="round" stroke-linecap="round" />
<polyline points="267.6,32.9 265.0,36.6 258.8,33.1 254.7,37.5 251.2,38.1" fill="none" stroke="#cdbfd0" stroke-width="0.75" stroke-linejoin="round" stroke-linecap="round" />
<polyline points="251.2,38.1 248.7,36.8 247.0,35.0 249.1,33.3 246.9,32.2" fill="none" stroke="#cdbfd0" stroke-width="0.75" stroke-linejoin="round" stroke-linecap="round" />
<polyline points="212.0,9.3 216.2,7.0 220.2,6.7 224.0,10.7 225.1,7.9" fill="none" stroke="#cdbfd0" stroke-width="0.75" stroke-linejoin="round" stroke-linecap="round" />
<polyline points="240.1,49.5 237.5,48.7 229.5,46.9 227.0,46.7 220.9,45.8" fill="none" stroke="#cdbfd0" stroke-width="0.75" stroke-linejoin="round" stroke-linecap="round" />
<polyline points="240.1,49.5 245.0,44.6 245.5,45.6 248.9,41.1 251.2,38.1" fill="none" stroke="#cdbfd0" stroke-width="0.75" stroke-linejoin="round" stroke-linecap="round" />
<polyline points="238.9,136.0 232.6,135.8 229.2,141.1 227.8,139.4 221.8,142.4" fill="none" stroke="#cdbfd0" stroke-width="0.75" stroke-linejoin="round" stroke-linecap="round" />
<polyline points="238.9,136.0 234.6,125.9 226.6,122.7 219.0,114.8 213.4,104.8" fill="none" stroke="#cdbfd0" stroke-width="0.75" stroke-linejoin="round" stroke-linecap="round" />
<polyline points="221.8,142.4 216.2,136.1 208.1,134.1 201.3,131.6 196.2,126.4" fill="none" stroke="#cdbfd0" stroke-width="0.75" stroke-linejoin="round" stroke-linecap="round" />
<polyline points="213.4,104.8 208.7,105.0 206.3,100.1 204.6,98.9 201.2,99.6" fill="none" stroke="#cdbfd0" stroke-width="0.75" stroke-linejoin="round" stroke-linecap="round" />
<polyline points="201.2,99.6 199.6,102.4 197.9,102.1 193.3,103.7 193.7,104.9" fill="none" stroke="#cdbfd0" stroke-width="0.75" stroke-linejoin="round" stroke-linecap="round" />
<polyline points="196.2,126.4 193.4,123.3 192.9,119.2 193.2,114.5 193.2,111.3" fill="none" stroke="#cdbfd0" stroke-width="0.75" stroke-linejoin="round" stroke-linecap="round" />
<polyline points="193.2,111.3 194.1,108.0 191.8,110.3 192.7,108.2 193.7,104.9" fill="none" stroke="#cdbfd0" stroke-width="0.75" stroke-linejoin="round" stroke-linecap="round" />
<polyline points="245.5,138.0 245.7,137.4 240.4,135.0 242.4,134.6 238.9,136.0" fill="none" stroke="#cdbfd0" stroke-width="0.75" stroke-linejoin="round" stroke-linecap="round" />
<polyline points="212.5,151.1 214.8,149.1 215.2,146.6 217.8,144.7 221.8,142.4" fill="none" stroke="#cdbfd0" stroke-width="0.75" stroke-linejoin="round" stroke-linecap="round" />
<polyline points="246.7,102.1 242.2,101.0 236.0,100.7 231.5,98.8 228.4,100.2" fill="none" stroke="#cdbfd0" stroke-width="0.75" stroke-linejoin="round" stroke-linecap="round" />
<polyline points="228.4,100.2 223.3,103.2 220.9,104.5 214.7,105.9 213.4,104.8" fill="none" stroke="#cdbfd0" stroke-width="0.75" stroke-linejoin="round" stroke-linecap="round" />
<polyline points="190.3,162.6 191.7,155.0 193.6,145.5 193.4,136.7 196.2,126.4" fill="none" stroke="#cdbfd0" stroke-width="0.75" stroke-linejoin="round" stroke-linecap="round" />
<polyline points="203.4,76.2 201.9,76.1 201.5,77.8 204.2,78.3 204.4,80.4" fill="none" stroke="#cdbfd0" stroke-width="0.75" stroke-linejoin="round" stroke-linecap="round" />
<polyline points="166.6,101.6 175.3,100.3 180.6,101.9 187.4,105.5 193.7,104.9" fill="none" stroke="#cdbfd0" stroke-width="0.75" stroke-linejoin="round" stroke-linecap="round" />
<polyline points="204.4,80.4 204.7,83.0 201.6,90.5 204.5,92.5 201.2,99.6" fill="none" stroke="#cdbfd0" stroke-width="0.75" stroke-linejoin="round" stroke-linecap="round" />
<polyline points="166.5,143.2 173.7,136.2 181.4,126.5 188.1,119.1 193.2,111.3" fill="none" stroke="#cdbfd0" stroke-width="0.75" stroke-linejoin="round" stroke-linecap="round" />
<polyline points="243.7,78.4 237.7,76.2 229.8,78.4 219.1,77.0 211.5,79.2" fill="none" stroke="#cdbfd0" stroke-width="0.75" stroke-linejoin="round" stroke-linecap="round" />
<polyline points="243.7,78.4 244.5,78.8 248.8,75.1 249.2,74.2 252.1,75.2" fill="none" stroke="#cdbfd0" stroke-width="0.75" stroke-linejoin="round" stroke-linecap="round" />
<polyline points="211.5,79.2 217.9,72.7 226.5,71.4 237.8,65.3 243.2,58.8" fill="none" stroke="#cdbfd0" stroke-width="0.75" stroke-linejoin="round" stroke-linecap="round" />
<polyline points="252.1,75.2 249.8,71.0 249.1,69.0 246.7,63.6 243.2,58.8" fill="none" stroke="#cdbfd0" stroke-width="0.75" stroke-linejoin="round" stroke-linecap="round" />
<polyline points="228.4,100.2 230.7,95.4 237.8,90.8 237.8,85.0 243.7,78.4" fill="none" stroke="#cdbfd0" stroke-width="0.75" stroke-linejoin="round" stroke-linecap="round" />
<polyline points="204.4,80.4 205.4,78.4 210.3,80.7 210.9,77.7 211.5,79.2" fill="none" stroke="#cdbfd0" stroke-width="0.75" stroke-linejoin="round" stroke-linecap="round" />
<polyline points="262.2,80.4 261.3,81.2 259.2,79.0 256.3,78.0 252.1,75.2" fill="none" stroke="#cdbfd0" stroke-width="0.75" stroke-linejoin="round" stroke-linecap="round" />
<polyline points="240.1,49.5 241.3,51.5 243.3,55.6 244.3,55.5 243.2,58.8" fill="none" stroke="#cdbfd0" stroke-width="0.75" stroke-linejoin="round" stroke-linecap="round" />
<polyline points="434.4,141.1 440.7,134.5 444.9,125.9 454.4,113.5 459.2,106.0" fill="none" stroke="#cdbfd0" stroke-width="0.75" stroke-linejoin="round" stroke-linecap="round" />
<polyline points="434.4,141.1 435.2,144.4 438.4,149.4 440.7,157.6 442.9,160.4" fill="none" stroke="#cdbfd0" stroke-width="0.75" stroke-linejoin="round" stroke-linecap="round" />
<polyline points="450.5,160.4 449.6,159.9 448.1,161.9 445.7,162.6 442.9,160.4" fill="none" stroke="#cdbfd0" stroke-width="0.75" stroke-linejoin="round" stroke-linecap="round" />
<polyline points="450.5,160.4 454.2,146.3 459.6,138.0 462.2,124.8 467.2,112.2" fill="none" stroke="#cdbfd0" stroke-width="0.75" stroke-linejoin="round" stroke-linecap="round" />
<polyline points="467.2,112.2 466.7,108.2 463.1,106.7 459.2,109.1 459.2,106.0" fill="none" stroke="#cdbfd0" stroke-width="0.75" stroke-linejoin="round" stroke-linecap="round" />
<polyline points="393.0,153.4 395.2,144.3 398.1,133.3 399.5,123.7 403.6,114.8" fill="none" stroke="#cdbfd0" stroke-width="0.75" stroke-linejoin="round" stroke-linecap="round" />
<polyline points="406.2,179.2 417.1,175.1 423.5,167.7 432.6,166.1 442.9,160.4" fill="none" stroke="#cdbfd0" stroke-width="0.75" stroke-linejoin="round" stroke-linecap="round" />
<polyline points="403.6,114.8 411.0,122.1 420.5,126.0 427.6,132.2 434.4,141.1" fill="none" stroke="#cdbfd0" stroke-width="0.75" stroke-linejoin="round" stroke-linecap="round" />
<polyline points="459.7,166.4 455.8,163.8 457.4,162.7 451.4,163.9 450.5,160.4" fill="none" stroke="#cdbfd0" stroke-width="0.75" stroke-linejoin="round" stroke-linecap="round" />
<polyline points="482.3,115.6 480.5,114.3 474.8,116.2 471.0,115.5 467.2,112.2" fill="none" stroke="#cdbfd0" stroke-width="0.75" stroke-linejoin="round" stroke-linecap="round" />
<polyline points="454.3,77.1 439.4,79.4 425.8,78.5 411.6,77.4 400.7,79.6" fill="none" stroke="#cdbfd0" stroke-width="0.75" stroke-linejoin="round" stroke-linecap="round" />
<polyline points="454.3,77.1 456.5,82.8 455.8,87.7 453.6,92.9 454.3,100.8" fill="none" stroke="#cdbfd0" stroke-width="0.75" stroke-linejoin="round" stroke-linecap="round" />
<polyline points="454.3,100.8 441.9,106.0 429.0,106.9 418.4,112.8 403.6,114.1" fill="none" stroke="#cdbfd0" stroke-width="0.75" stroke-linejoin="round" stroke-linecap="round" />
<polyline points="400.7,79.6 402.0,85.8 402.3,96.0 404.4,103.9 402.6,112.9" fill="none" stroke="#cdbfd0" stroke-width="0.75" stroke-linejoin="round" stroke-linecap="round" />
<polyline points="402.6,112.9 403.6,113.9 402.4,113.6 404.2,115.8 403.6,114.1" fill="none" stroke="#cdbfd0" stroke-width="0.75" stroke-linejoin="round" stroke-linecap="round" />
<polyline points="395.2,62.2 396.5,65.9 400.3,68.7 401.0,76.2 400.7,79.6" fill="none" stroke="#cdbfd0" stroke-width="0.75" stroke-linejoin="round" stroke-linecap="round" />
<polyline points="459.2,106.0 458.2,104.4 458.0,105.4 456.7,103.4 454.3,100.8" fill="none" stroke="#cdbfd0" stroke-width="0.75" stroke-linejoin="round" stroke-linecap="round" />
<polyline points="403.6,114.8 401.3,113.7 401.8,116.7 405.5,112.5 403.6,114.1" fill="none" stroke="#cdbfd0" stroke-width="0.75" stroke-linejoin="round" stroke-linecap="round" />
<polyline points="393.8,111.7 396.4,112.4 395.9,111.7 401.6,113.3 402.6,112.9" fill="none" stroke="#cdbfd0" stroke-width="0.75" stroke-linejoin="round" stroke-linecap="round" />
<polyline points="66.0,67.5 83.0,68.9 125.0,73.1 155.8,68.9 189.4,63.3 217.4,57.7 237.0,56.3 261.0,56.3 275.0,59.1" fill="none" stroke="#a28fb3" stroke-width="1.1" stroke-linejoin="round" stroke-linecap="round" />
<polyline points="262.4,0.0 265.2,14.3 268.0,28.3 272.2,45.1 275.0,59.1 286.2,73.1 294.6,87.1 303.0,98.3 305.8,115.1 308.6,129.1 295.0,131.5 300.2,160.3 308.6,179.9 331.0,193.9 342.2,205.1 347.8,221.9 346.4,238.7 350.6,252.7 364.6,268.0" fill="none" stroke="#a28fb3" stroke-width="1.1" stroke-linejoin="round" stroke-linecap="round" />
<polyline points="290.4,1.7 303.0,8.7 317.0,4.5 353.4,5.9 364.6,0.0" fill="none" stroke="#a28fb3" stroke-width="1.1" stroke-linejoin="round" stroke-linecap="round" />
<polyline points="367.0,16.5 375.0,16.5" fill="none" stroke="#a28fb3" stroke-width="1.1" stroke-linejoin="round" stroke-linecap="round" />
<polyline points="192.0,62.5 192.0,137.5 181.0,140.7 133.4,170.5 141.8,205.1 237.0,261.1 249.0,268.0" fill="none" stroke="#a28fb3" stroke-width="1.1" stroke-linejoin="round" stroke-linecap="round" />
<polyline points="133.4,170.5 102.6,188.3 71.8,199.5" fill="none" stroke="#a28fb3" stroke-width="1.1" stroke-linejoin="round" stroke-linecap="round" />
<polyline points="141.8,205.1 88.6,221.9 111.0,252.7 104.0,268.0" fill="none" stroke="#a28fb3" stroke-width="1.1" stroke-linejoin="round" stroke-linecap="round" />
<polyline points="498.0,65.5 499.6,47.9 529.0,29.7 557.0,25.5 579.4,26.9 599.0,36.7 615.8,45.1 632.6,57.7 643.8,64.7 655.0,73.1 671.8,74.5" fill="none" stroke="#a28fb3" stroke-width="1.1" stroke-linejoin="round" stroke-linecap="round" />
<polyline points="671.8,74.5 674.6,81.5 677.4,98.3 680.2,115.1 671.0,133.5 660.6,149.1 666.2,165.9 659.2,179.9 666.2,207.9 666.2,224.7 685.8,230.3 683.0,247.1 669.0,268.0" fill="none" stroke="#a28fb3" stroke-width="1.1" stroke-linejoin="round" stroke-linecap="round" />
<polyline points="746.6,0.0 763.4,14.3 783.0,22.7 802.6,28.3 806.8,39.5 783.0,47.9 763.4,56.3 757.8,70.3 755.0,81.5 738.2,92.7 721.4,106.7 713.0,117.9 699.0,120.7 680.0,115.5" fill="none" stroke="#a28fb3" stroke-width="1.1" stroke-linejoin="round" stroke-linecap="round" />
<polyline points="806.8,39.5 816.6,50.7 839.0,61.9 844.6,64.7 867.0,53.5 878.2,56.3 895.0,31.1 911.8,17.1 923.0,22.7 925.8,36.7 923.0,53.5 925.8,70.3 933.5,73.1" fill="none" stroke="#a28fb3" stroke-width="1.1" stroke-linejoin="round" stroke-linecap="round" />
<polyline points="844.6,0.0 841.8,17.1 847.4,42.3 839.0,61.9" fill="none" stroke="#a28fb3" stroke-width="1.1" stroke-linejoin="round" stroke-linecap="round" />
<polyline points="933.5,78.5 920.2,92.7 914.6,103.9 923.0,120.7 923.0,137.5 914.6,129.5 911.8,149.1 889.4,154.7 892.2,165.9 881.0,177.1 869.8,191.1 867.0,213.5 850.2,216.3 830.6,224.7 811.0,233.1 802.6,241.5 799.8,258.3 798.4,268.0" fill="none" stroke="#a28fb3" stroke-width="1.1" stroke-linejoin="round" stroke-linecap="round" />
<text x="12.6" y="16.5" font-size="6.435" fill="#3c3c3c" text-anchor="middle" dominant-baseline="middle" >Aksaray</text>
<text x="29.0" y="29.1" font-size="5.616" fill="#3c3c3c" text-anchor="middle" dominant-baseline="middle" >Niğde</text>
<text x="140.5" y="7.3" font-size="6.435" fill="#3c3c3c" text-anchor="middle" dominant-baseline="middle" >Elazığ</text>
<text x="170.4" y="9.5" font-size="5.616" fill="#3c3c3c" text-anchor="middle" dominant-baseline="middle" >Bingöl</text>
<text x="195.0" y="5.1" font-size="6.435" fill="#3c3c3c" text-anchor="middle" dominant-baseline="middle" >Muş</text>
<text x="208.5" y="16.5" font-size="5.616" fill="#3c3c3c" text-anchor="middle" dominant-baseline="middle" >Bitlis</text>
<text x="83.4" y="50.8" font-size="7.02" fill="#3c3c3c" text-anchor="middle" dominant-baseline="middle" >Kahramanmaraş</text>
<text x="135.0" y="39.9" font-size="7.02" fill="#3c3c3c" text-anchor="middle" dominant-baseline="middle" >Adıyaman</text>
<text x="186.8" y="39.9" font-size="7.02" fill="#3c3c3c" text-anchor="middle" dominant-baseline="middle" >Batman</text>
<text x="249.0" y="49.2" font-size="5.616" fill="#3c3c3c" text-anchor="middle" dominant-baseline="middle" >Hakkari</text>
<text x="219.4" y="53.0" font-size="6.435" fill="#3c3c3c" text-anchor="middle" dominant-baseline="middle" >Şırnak</text>
<text x="177.5" y="58.5" font-size="7.02" fill="#3c3c3c" text-anchor="middle" dominant-baseline="middle" >Mardin</text>
<text x="95.9" y="67.2" font-size="7.02" fill="#3c3c3c" text-anchor="middle" dominant-baseline="middle" >Gaziantep</text>
<text x="46.3" y="68.2" font-size="7.02" fill="#3c3c3c" text-anchor="middle" dominant-baseline="middle" >Adana</text>
<text x="60.0" y="16.5" font-size="5.04" fill="#9a7fb0" text-anchor="middle" dominant-baseline="middle" >Kayseri</text>
<text x="95.0" y="17.5" font-size="5.04" fill="#9a7fb0" text-anchor="middle" dominant-baseline="middle" >Malatya</text>
<text x="149.0" y="23.5" font-size="5.04" fill="#9a7fb0" text-anchor="middle" dominant-baseline="middle" >Diyarbakır</text>
<text x="128.0" y="52.5" font-size="5.04" fill="#9a7fb0" text-anchor="middle" dominant-baseline="middle" >Şanlıurfa</text>
<text x="235.7" y="78.0" font-size="7.02" fill="#3c3c3c" text-anchor="middle" dominant-baseline="middle" >الموصل</text>
<text x="257.5" y="92.5" font-size="7.02" fill="#3c3c3c" text-anchor="middle" dominant-baseline="middle" >هولير</text>
<text x="265.7" y="117.2" font-size="7.02" fill="#3c3c3c" text-anchor="middle" dominant-baseline="middle" >كركوك / کەرکووک</text>
<text x="328.0" y="119.9" font-size="7.02" fill="#3c3c3c" text-anchor="middle" dominant-baseline="middle" >سنندج</text>
<text x="434.4" y="98.2" font-size="7.6049999999999995" fill="#3c3c3c" text-anchor="middle" dominant-baseline="middle" >تهران</text>
<text x="423.5" y="128.1" font-size="7.02" fill="#3c3c3c" text-anchor="middle" dominant-baseline="middle" >قم</text>
<text x="393.6" y="155.3" font-size="7.02" fill="#3c3c3c" text-anchor="middle" dominant-baseline="middle" >اراک</text>
<text x="437.0" y="148.5" font-size="5.85" fill="#3c3c3c" text-anchor="middle" dominant-baseline="middle" >کاشان</text>
<text x="238.5" y="171.5" font-size="6.825" fill="#9a7fb0" text-anchor="middle" dominant-baseline="middle" >العراق</text>
<text x="260.0" y="178.7" font-size="7.02" fill="#3c3c3c" text-anchor="middle" dominant-baseline="middle" >بغداد</text>
<text x="69.7" y="174.4" font-size="7.02" fill="#3c3c3c" text-anchor="middle" dominant-baseline="middle" >دمشق</text>
<text x="64.3" y="207.0" font-size="7.02" fill="#3c3c3c" text-anchor="middle" dominant-baseline="middle" >عمان</text>
<text x="118.7" y="128.1" font-size="6.825" fill="#9a7fb0" text-anchor="middle" dominant-baseline="middle" >سوريا</text>
<text x="77.9" y="136.3" font-size="6.435" fill="#3c3c3c" text-anchor="middle" dominant-baseline="middle" >حمص</text>
<text x="58.9" y="100.9" font-size="6.435" fill="#3c3c3c" text-anchor="middle" dominant-baseline="middle" >اللاذقية</text>
<text x="80.6" y="114.5" font-size="5.85" fill="#3c3c3c" text-anchor="middle" dominant-baseline="middle" >حماة</text>
<text x="34.4" y="203.2" font-size="6.435" fill="#3c3c3c" text-anchor="middle" dominant-baseline="middle" >תל אביב-יפו</text>
<text x="31.7" y="217.9" font-size="6.435" fill="#3c3c3c" text-anchor="middle" dominant-baseline="middle" >ירושלים</text>
<text x="265.7" y="203.2" font-size="6.435" fill="#3c3c3c" text-anchor="middle" dominant-baseline="middle" >الحلة</text>
<text x="263.0" y="216.3" font-size="7.02" fill="#3c3c3c" text-anchor="middle" dominant-baseline="middle" >النجف</text>
<text x="290.0" y="212.5" font-size="6.435" fill="#3c3c3c" text-anchor="middle" dominant-baseline="middle" >الديوانية</text>
<text x="347.3" y="248.9" font-size="6.435" fill="#3c3c3c" text-anchor="middle" dominant-baseline="middle" >البصرة</text>
<text x="361.0" y="204.3" font-size="5.85" fill="#3c3c3c" text-anchor="middle" dominant-baseline="middle" >دزفول</text>
<text x="109.0" y="94.5" font-size="5.04" fill="#9a7fb0" text-anchor="middle" dominant-baseline="middle" >محافظة حلب</text>
<text x="159.0" y="84.5" font-size="5.04" fill="#9a7fb0" text-anchor="middle" dominant-baseline="middle" >محافظة الحسكة</text>
<text x="163.0" y="111.5" font-size="5.04" fill="#9a7fb0" text-anchor="middle" dominant-baseline="middle" >محافظة دير الزور</text>
<text x="119.0" y="141.5" font-size="5.04" fill="#9a7fb0" text-anchor="middle" dominant-baseline="middle" >محافظة حمص</text>
<text x="179.0" y="189.5" font-size="5.04" fill="#9a7fb0" text-anchor="middle" dominant-baseline="middle" >محافظة الأنبار</text>
<text x="109.0" y="196.5" font-size="5.04" fill="#9a7fb0" text-anchor="middle" dominant-baseline="middle" >المفرق</text>
<text x="79.0" y="226.5" font-size="5.775" fill="#9a7fb0" text-anchor="middle" dominant-baseline="middle" >الأردن</text>
<text x="149.0" y="234.5" font-size="5.04" fill="#9a7fb0" text-anchor="middle" dominant-baseline="middle" >منطقة الجوف</text>
<text x="299.0" y="224.5" font-size="5.04" fill="#9a7fb0" text-anchor="middle" dominant-baseline="middle" >محافظة ذي قار</text>
<text x="279.0" y="241.5" font-size="5.04" fill="#9a7fb0" text-anchor="middle" dominant-baseline="middle" >محافظة المثنى</text>
<text x="315.0" y="104.5" font-size="5.04" fill="#9a7fb0" text-anchor="middle" dominant-baseline="middle" >استان کردستان</text>
<text x="367.0" y="86.5" font-size="5.04" fill="#9a7fb0" text-anchor="middle" dominant-baseline="middle" >استان زنجان</text>
<text x="416.0" y="111.5" font-size="5.04" fill="#9a7fb0" text-anchor="middle" dominant-baseline="middle" >استان قزوین</text>
<text x="309.0" y="27.5" font-size="5.04" fill="#9a7fb0" text-anchor="middle" dominant-baseline="middle" >استان آذربایجان شرقی</text>
<text x="369.0" y="20.5" font-size="5.04" fill="#9a7fb0" text-anchor="middle" dominant-baseline="middle" >استان اردبیل</text>
<text x="391.0" y="49.5" font-size="5.04" fill="#9a7fb0" text-anchor="middle" dominant-baseline="middle" >استان گیلان</text>
<text x="449.0" y="79.5" font-size="5.04" fill="#9a7fb0" text-anchor="middle" dominant-baseline="middle" >استان مازندران</text>
<text x="359.0" y="137.5" font-size="5.04" fill="#9a7fb0" text-anchor="middle" dominant-baseline="middle" >استان همدان</text>
<text x="399.0" y="132.5" font-size="5.04" fill="#9a7fb0" text-anchor="middle" dominant-baseline="middle" >استان مرکزی</text>
<text x="369.0" y="167.5" font-size="5.04" fill="#9a7fb0" text-anchor="middle" dominant-baseline="middle" >استان لرستان</text>
<text x="379.0" y="199.5" font-size="5.04" fill="#9a7fb0" text-anchor="middle" dominant-baseline="middle" >استان خوزستان</text>
<text x="419.0" y="159.5" font-size="5.04" fill="#9a7fb0" text-anchor="middle" dominant-baseline="middle" >استان اصفهان</text>
<text x="409.0" y="209.5" font-size="5.04" fill="#9a7fb0" text-anchor="middle" dominant-baseline="middle" >استان چهارمحال</text>
<text x="419.0" y="239.5" font-size="5.04" fill="#9a7fb0" text-anchor="middle" dominant-baseline="middle" >استان کهگیلویه</text>
<text x="329.0" y="149.5" font-size="5.04" fill="#9a7fb0" text-anchor="middle" dominant-baseline="middle" >استان کرمانشاه</text>
<text x="339.0" y="179.5" font-size="5.04" fill="#9a7fb0" text-anchor="middle" dominant-baseline="middle" >استان ایلام</text>
<text x="554.0" y="14.9" font-size="6.435" fill="#3c3c3c" text-anchor="middle" dominant-baseline="middle" >Magtymguly</text>
<text x="606.0" y="29.1" font-size="7.02" fill="#3c3c3c" text-anchor="middle" dominant-baseline="middle" >Aşgabat</text>
<text x="733.8" y="7.3" font-size="6.435" fill="#3c3c3c" text-anchor="middle" dominant-baseline="middle" >Sakar</text>
<text x="791.0" y="5.5" font-size="5.04" fill="#9a7fb0" text-anchor="middle" dominant-baseline="middle" >Qashqadaryo</text>
<text x="791.0" y="11.5" font-size="5.04" fill="#9a7fb0" text-anchor="middle" dominant-baseline="middle" >Viloyati</text>
<text x="763.8" y="24.7" font-size="6.435" fill="#3c3c3c" text-anchor="middle" dominant-baseline="middle" >Hojambaz</text>
<text x="826.3" y="23.5" font-size="6.435" fill="#3c3c3c" text-anchor="middle" dominant-baseline="middle" >Denov</text>
<text x="859.0" y="22.0" font-size="7.6049999999999995" fill="#3c3c3c" text-anchor="middle" dominant-baseline="middle" >Душанбе</text>
<text x="911.7" y="5.7" font-size="6.720000000000001" fill="#9a7fb0" text-anchor="middle" dominant-baseline="middle" >Точикистон</text>
<text x="652.2" y="38.3" font-size="6.435" fill="#3c3c3c" text-anchor="middle" dominant-baseline="middle" >Babadayhan</text>
<text x="687.6" y="41.0" font-size="6.435" fill="#3c3c3c" text-anchor="middle" dominant-baseline="middle" >Mary</text>
<text x="660.4" y="50.8" font-size="6.435" fill="#3c3c3c" text-anchor="middle" dominant-baseline="middle" >Altyn Asyr</text>
<text x="701.0" y="53.0" font-size="5.25" fill="#9a7fb0" text-anchor="middle" dominant-baseline="middle" >Mary welaýaty</text>
<text x="635.9" y="56.3" font-size="5.85" fill="#3c3c3c" text-anchor="middle" dominant-baseline="middle" >Kaka</text>
<text x="674.0" y="73.7" font-size="6.435" fill="#3c3c3c" text-anchor="middle" dominant-baseline="middle" >Sarahs</text>
<text x="791.0" y="43.8" font-size="6.435" fill="#3c3c3c" text-anchor="middle" dominant-baseline="middle" >Köýtendag</text>
<text x="821.0" y="60.1" font-size="6.435" fill="#3c3c3c" text-anchor="middle" dominant-baseline="middle" >Termiz</text>
<text x="498.0" y="45.4" font-size="6.435" fill="#3c3c3c" text-anchor="middle" dominant-baseline="middle" >Esenguly</text>
<text x="525.0" y="42.5" font-size="6.435" fill="#3c3c3c" text-anchor="middle" dominant-baseline="middle" >Etrek</text>
<text x="510.7" y="73.7" font-size="7.02" fill="#3c3c3c" text-anchor="middle" dominant-baseline="middle" >گرگان</text>
<text x="521.6" y="85.7" font-size="6.435" fill="#3c3c3c" text-anchor="middle" dominant-baseline="middle" >شاهرود</text>
<text x="483.5" y="110.7" font-size="6.435" fill="#3c3c3c" text-anchor="middle" dominant-baseline="middle" >سمنان</text>
<text x="586.9" y="83.5" font-size="6.435" fill="#3c3c3c" text-anchor="middle" dominant-baseline="middle" >سبزوار</text>
<text x="614.0" y="83.5" font-size="6.435" fill="#3c3c3c" text-anchor="middle" dominant-baseline="middle" >نیشابور</text>
<text x="634.2" y="80.2" font-size="7.02" fill="#3c3c3c" text-anchor="middle" dominant-baseline="middle" >مشهد</text>
<text x="634.0" y="97.5" font-size="5.04" fill="#9a7fb0" text-anchor="middle" dominant-baseline="middle" >استان خراسان رضوی</text>
<text x="657.6" y="111.8" font-size="5.85" fill="#3c3c3c" text-anchor="middle" dominant-baseline="middle" >تربت جام</text>
<text x="625.0" y="118.3" font-size="5.85" fill="#3c3c3c" text-anchor="middle" dominant-baseline="middle" >تربت حیدریه</text>
<text x="785.5" y="152.5" font-size="6.825" fill="#9a7fb0" text-anchor="middle" dominant-baseline="middle" >افغانستان</text>
<text x="867.0" y="144.5" font-size="7.02" fill="#3c3c3c" text-anchor="middle" dominant-baseline="middle" >کابل</text>
<text x="924.3" y="158.0" font-size="6.435" fill="#3c3c3c" text-anchor="middle" dominant-baseline="middle" >پیشاور</text>
<text x="635.9" y="185.3" font-size="6.435" fill="#3c3c3c" text-anchor="middle" dominant-baseline="middle" >بیرجند</text>
<text x="598.0" y="185.5" font-size="5.04" fill="#9a7fb0" text-anchor="middle" dominant-baseline="middle" >استان خراسان جنوبی</text>
<text x="508.0" y="209.7" font-size="7.02" fill="#3c3c3c" text-anchor="middle" dominant-baseline="middle" >یزد</text>
<text x="573.3" y="253.3" font-size="7.02" fill="#3c3c3c" text-anchor="middle" dominant-baseline="middle" >کرمان</text>
<text x="540.6" y="261.5" font-size="6.435" fill="#3c3c3c" text-anchor="middle" dominant-baseline="middle" >رفسنجان</text>
<text x="785.5" y="226.1" font-size="7.02" fill="#3c3c3c" text-anchor="middle" dominant-baseline="middle" >کندهار</text>
<text x="815.5" y="257.5" font-size="6.435" fill="#3c3c3c" text-anchor="middle" dominant-baseline="middle" >کوئٹہ</text>
<text x="509.0" y="219.5" font-size="5.04" fill="#9a7fb0" text-anchor="middle" dominant-baseline="middle" >استان یزد</text>
<text x="564.0" y="39.5" font-size="5.04" fill="#9a7fb0" text-anchor="middle" dominant-baseline="middle" >استان خراسان شمالی</text>
<text x="492.0" y="94.5" font-size="5.04" fill="#9a7fb0" text-anchor="middle" dominant-baseline="middle" >استان سمنان</text>
<text x="579.0" y="234.5" font-size="5.04" fill="#9a7fb0" text-anchor="middle" dominant-baseline="middle" >استان کرمان</text>
<text x="784.4" y="70.3" font-size="5.85" fill="#3c3c3c" text-anchor="middle" dominant-baseline="middle" >شبرغان</text>
<text x="788.6" y="82.9" font-size="5.85" fill="#3c3c3c" text-anchor="middle" dominant-baseline="middle" >سرپل</text>
<text x="812.4" y="78.7" font-size="5.04" fill="#9a7fb0" text-anchor="middle" dominant-baseline="middle" >ولایت بلخ</text>
<text x="839.0" y="81.5" font-size="5.85" fill="#3c3c3c" text-anchor="middle" dominant-baseline="middle" >ایبک</text>
<text x="855.8" y="84.3" font-size="5.85" fill="#3c3c3c" text-anchor="middle" dominant-baseline="middle" >بغلان</text>
<text x="851.6" y="73.1" font-size="5.85" fill="#3c3c3c" text-anchor="middle" dominant-baseline="middle" >قندوز</text>
<text x="878.2" y="73.1" font-size="5.04" fill="#9a7fb0" text-anchor="middle" dominant-baseline="middle" >تخار ولایت</text>
<text x="832.0" y="94.1" font-size="5.04" fill="#9a7fb0" text-anchor="middle" dominant-baseline="middle" >ولایت سمنگان</text>
<text x="864.2" y="99.7" font-size="5.04" fill="#9a7fb0" text-anchor="middle" dominant-baseline="middle" >ولایت بغلان</text>
<text x="760.6" y="99.7" font-size="5.85" fill="#3c3c3c" text-anchor="middle" dominant-baseline="middle" >میمنه</text>
<text x="759.2" y="87.1" font-size="5.04" fill="#9a7fb0" text-anchor="middle" dominant-baseline="middle" >ولایت فاریاب</text>
<text x="791.4" y="102.5" font-size="5.04" fill="#9a7fb0" text-anchor="middle" dominant-baseline="middle" >سرپل</text>
<text x="731.2" y="115.1" font-size="5.04" fill="#9a7fb0" text-anchor="middle" dominant-baseline="middle" >ولایت بادغیس</text>
<text x="876.8" y="119.3" font-size="5.85" fill="#3c3c3c" text-anchor="middle" dominant-baseline="middle" >بازارک</text>
<text x="914.6" y="123.5" font-size="5.85" fill="#3c3c3c" text-anchor="middle" dominant-baseline="middle" >اسدآباد</text>
<text x="822.2" y="133.3" font-size="5.04" fill="#9a7fb0" text-anchor="middle" dominant-baseline="middle" >ولایت بامیان</text>
<text x="867.0" y="33.9" font-size="5.04" fill="#9a7fb0" text-anchor="middle" dominant-baseline="middle" >Вилояти</text>
<text x="867.0" y="39.5" font-size="5.04" fill="#9a7fb0" text-anchor="middle" dominant-baseline="middle" >Хатлон</text>
<text x="900.6" y="144.9" font-size="5.85" fill="#3c3c3c" text-anchor="middle" dominant-baseline="middle" >جلال آباد</text>
<text x="847.4" y="163.1" font-size="5.85" fill="#3c3c3c" text-anchor="middle" dominant-baseline="middle" >غزنی</text>
<text x="868.4" y="168.7" font-size="5.85" fill="#3c3c3c" text-anchor="middle" dominant-baseline="middle" >گردیز</text>
<text x="800.0" y="163.5" font-size="5.04" fill="#9a7fb0" text-anchor="middle" dominant-baseline="middle" >ولایت دایکندی</text>
<text x="755.0" y="147.7" font-size="5.04" fill="#9a7fb0" text-anchor="middle" dominant-baseline="middle" >عور</text>
<text x="783.0" y="244.7" font-size="5.04" fill="#9a7fb0" text-anchor="middle" dominant-baseline="middle" >کندهار ولایت</text>
<text x="743.8" y="227.5" font-size="5.04" fill="#9a7fb0" text-anchor="middle" dominant-baseline="middle" >هلمند ولایت</text>
<text x="707.4" y="244.3" font-size="5.04" fill="#9a7fb0" text-anchor="middle" dominant-baseline="middle" >ولایت نیمروز</text>
<text x="923.0" y="189.7" font-size="5.85" fill="#3c3c3c" text-anchor="middle" dominant-baseline="middle" >میانوالی</text>
<text x="911.8" y="205.1" font-size="5.85" fill="#3c3c3c" text-anchor="middle" dominant-baseline="middle" >ڈیرہ اسماعیل</text>
<text x="897.8" y="252.7" font-size="6.300000000000001" fill="#9a7fb0" text-anchor="middle" dominant-baseline="middle" >پاکستان</text>
<text x="801.2" y="245.7" font-size="5.616" fill="#3c3c3c" text-anchor="middle" dominant-baseline="middle" >چمن</text>
<text x="730.0" y="168.5" font-size="5.04" fill="#9a7fb0" text-anchor="middle" dominant-baseline="middle" >ولایت هرات</text>
<text x="732.0" y="197.5" font-size="5.04" fill="#9a7fb0" text-anchor="middle" dominant-baseline="middle" >ولایت فراه</text>
<text x="720.0" y="214.3" font-size="5.616" fill="#3c3c3c" text-anchor="middle" dominant-baseline="middle" >زابل</text>
<text x="852.0" y="196.5" font-size="5.04" fill="#9a7fb0" text-anchor="middle" dominant-baseline="middle" >ولایت غزنی</text>
<text x="864.0" y="214.5" font-size="5.04" fill="#9a7fb0" text-anchor="middle" dominant-baseline="middle" >پکتیکا ولایت</text>
<text x="823.0" y="204.5" font-size="5.04" fill="#9a7fb0" text-anchor="middle" dominant-baseline="middle" >زابل ولایت</text>
<text x="94.0" y="226.1" font-size="5.85" fill="#3c3c3c" text-anchor="middle" dominant-baseline="middle" >القريات</text>
<text x="147.0" y="265.5" font-size="5.04" fill="#9a7fb0" text-anchor="middle" dominant-baseline="middle" >منطقة الجوف</text>
<text x="44.0" y="263.5" font-size="5.616" fill="#3c3c3c" text-anchor="middle" dominant-baseline="middle" >وادي موسى</text>
<text x="7.0" y="231.5" font-size="5.616" fill="#3c3c3c" text-anchor="middle" dominant-baseline="middle" >العريش</text>
<text x="7.0" y="252.5" font-size="5.04" fill="#9a7fb0" text-anchor="middle" dominant-baseline="middle" >شمال سيناء</text>
<text x="74.6" y="261.1" font-size="5.04" fill="#9a7fb0" text-anchor="middle" dominant-baseline="middle" >معان</text>
<text x="185.0" y="244.3" font-size="5.616" fill="#3c3c3c" text-anchor="middle" dominant-baseline="middle" >طريف</text>
<text x="182.4" y="137.9" font-size="5.85" fill="#3c3c3c" text-anchor="middle" dominant-baseline="middle" >القائم</text>
<text x="216.0" y="144.9" font-size="5.85" fill="#3c3c3c" text-anchor="middle" dominant-baseline="middle" >حديثة</text>
<text x="225.8" y="158.9" font-size="5.85" fill="#3c3c3c" text-anchor="middle" dominant-baseline="middle" >هيت</text>
<text x="165.6" y="177.1" font-size="5.85" fill="#3c3c3c" text-anchor="middle" dominant-baseline="middle" >رطبة</text>
<g transform="translate(519.5,62.9)"><path d="M0 0 C-2 -4 -6.6 -7 -6.6 -11.2 A6.6 6.6 0 1 1 6.6 -11.2 C6.6 -7 2 -4 0 0Z" fill="#1a24e6"/><circle cx="0" cy="-11.2" r="2.6" fill="#8c8ff2"/></g>
<rect x="826.5" y="258.2" width="107.0" height="10" fill="#ffffff" opacity="0.8"/>
<text x="829" y="263.7" font-size="6.2" fill="#333" dominant-baseline="middle" textLength="102" lengthAdjust="spacingAndGlyphs"><tspan fill="#0078a8">Pigeon</tspan> | © <tspan fill="#0078a8">OpenStreetMap</tspan> contributors</text>
</svg>
</div>

<div id="listtitle" class="abs">لیست پیش فرض ایستگاه</div>
<div id="card" class="abs">
  <div id="ctitle" class="abs">میزان بارش ایستگاه ها</div>
  <svg class="abs" style="left:901px;top:14px" width="12" height="9" viewBox="0 0 12 9"><path d="M2 2H10M3.3 4.2H8.1M5 6.5H6.8" stroke="#6e6e6e" stroke-width="1"/></svg>
  <div class="th" style="left:106px;top:38.6px">STATION NAME</div>
  <div class="th" style="left:316px;top:38.6px">DEVICE TYPE</div>
  <div class="th" style="left:556px;top:38.6px">LAST COMMUNICATION</div>
  <div class="th" style="left:810px;top:38.6px">RAINFALL[24H/7D]</div>
  <div class="hl" style="top:51.5px"></div>
  <div class="td" style="left:113.5px;top:56px;direction:rtl;font-size:5.6px;transform:translateX(-50%) scaleX(.916)">ایستگاه علی اباد کتول</div>
  <div class="td" style="left:323px;top:55.8px">rain gauge</div>
  <div class="td" style="left:563px;top:55.8px">1970-01-01 00:00:00</div>
  <div class="td" style="left:816px;top:55.8px">0.00 mm</div>
  <div class="hl" style="top:66.5px"></div>
</div>
</body>
</html>
